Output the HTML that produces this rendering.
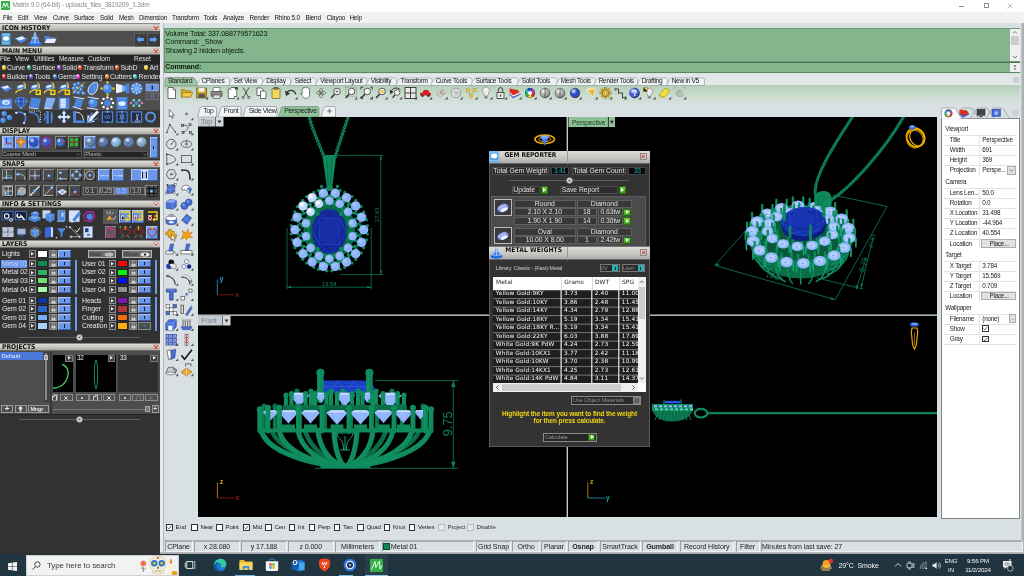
<!DOCTYPE html>
<html lang="en">
<head>
<meta charset="utf-8">
<title>Matrix 9.0 (64-bit) - uploads_files_3819209_1.3dm</title>
<style>
*{box-sizing:border-box;margin:0;padding:0}
html,body{width:1024px;height:576px;overflow:hidden;background:#d9e0e3;font-family:"Liberation Sans",sans-serif;font-size:6.3px;color:#000}
.a{position:absolute}
body>div{will-change:transform}
.t{position:absolute;white-space:nowrap;line-height:1;letter-spacing:-0.18px}
svg{position:absolute;overflow:visible}
svg text{font-family:"Liberation Sans",sans-serif}
#titlebar{left:0;top:0;width:1024px;height:12px;background:#fff}
#menubar{left:0;top:12px;width:1024px;height:11px;background:#f1f1f1}
#menubar .t{top:2.6px;font-size:6.3px;color:#111}
#left{left:0;top:23px;width:160px;height:531px;background:#323232;overflow:hidden}
.hdr{position:absolute;left:0;width:160px;height:8.6px;background:linear-gradient(#dddbd5,#c6c4be 55%,#a9a7a1);border-top:1px solid #8a8a88;border-bottom:1px solid #6a6a68}
.hdr b{position:absolute;left:2px;top:0.5px;font-family:"DejaVu Sans Condensed","DejaVu Sans","Liberation Sans",sans-serif;font-stretch:condensed;font-size:6.7px;font-weight:bold;color:#111;line-height:1;white-space:nowrap}
.hdr i{position:absolute;right:1.5px;top:0.4px;width:6px;height:6.2px;background:#dddbd5;border:0.4px solid #c0beb8;font-style:normal;font-size:0;overflow:hidden}.hdr i::after{content:"";position:absolute;left:0.6px;top:0.6px;width:4.4px;height:4.6px;background:linear-gradient(45deg,transparent 44%,#e2564a 44%,#e2564a 56%,transparent 56%),linear-gradient(-45deg,transparent 44%,#e2564a 44%,#e2564a 56%,transparent 56%)}
.row{position:absolute;left:0;width:160px;background:#4e4e4e}
.lm{position:absolute;white-space:nowrap;line-height:1;color:#e4e4e4;font-size:6.9px;letter-spacing:-0.05px}
.dot{position:absolute;width:4.4px;height:4.4px;border-radius:50%}
.btn{position:absolute;background:#4c4c4c;border:0.7px solid #8a8a8a;border-right-color:#2a2a2a;border-bottom-color:#2a2a2a}
.bb{position:absolute;background:#6d97e8;border:0.7px solid #a9c4f7;border-right-color:#3d5ea8;border-bottom-color:#3d5ea8}
#taskbar{left:0;top:554px;width:1024px;height:22px;background:#20353f}
#main{left:160px;top:23px;width:864px;height:531px;background:#d9e0e3}
</style>
</head>
<body>

<div id="titlebar" class="a">
  <svg style="left:1px;top:1px" width="9" height="9" viewBox="0 0 9 9"><rect width="9" height="9" fill="#3cae4c"/><path d="M1.5 7 L3 2 L4.4 6 L5.8 2 L7.5 7" stroke="#e8ffe8" stroke-width="0.9" fill="none"/></svg>
  <span class="t" style="left:12.5px;top:2.3px;font-size:6.5px;color:#8c8c8c;letter-spacing:-0.17px">Matrix 9.0 (64-bit) - uploads_files_3819209_1.3dm</span>
  <span class="a" style="left:958.5px;top:5.5px;width:5px;height:0.6px;background:#8e8e8e"></span>
  <span class="a" style="left:984px;top:3px;width:4.6px;height:4.6px;border:0.55px solid #8e8e8e"></span>
  <svg style="left:1007px;top:2.5px" width="6" height="6" viewBox="0 0 6 6"><path d="M0.5 0.5 L5.5 5.5 M5.5 0.5 L0.5 5.5" stroke="#858585" stroke-width="0.55"/></svg>
</div>
<div id="menubar" class="a">
  <span class="t" style="left:3px">File</span><span class="t" style="left:18px">Edit</span><span class="t" style="left:34px">View</span><span class="t" style="left:53px">Curve</span><span class="t" style="left:74px">Surface</span><span class="t" style="left:100px">Solid</span><span class="t" style="left:119px">Mesh</span><span class="t" style="left:139px">Dimension</span><span class="t" style="left:172px">Transform</span><span class="t" style="left:203.5px">Tools</span><span class="t" style="left:223px">Analyze</span><span class="t" style="left:249.5px">Render</span><span class="t" style="left:274.5px">Rhino 5.0</span><span class="t" style="left:305.5px">Blend</span><span class="t" style="left:326.5px">Clayoo</span><span class="t" style="left:349.5px">Help</span>
</div>

<div id="left" class="a">
<div class="hdr" style="top:0px"><b>ICON HISTORY</b><i>×</i></div>
<div class="row" style="top:8px;height:16px"></div>
<div class="hdr" style="top:23.4px"><b>MAIN MENU</b><i>×</i></div>
<div class="row" style="top:32px;height:8.5px;background:#242424"></div>
<span class="lm" style="left:0px;top:33.2px;font-size:6.5px">File</span>
<span class="lm" style="left:15px;top:33.2px;font-size:6.5px">View</span>
<span class="lm" style="left:34px;top:33.2px;font-size:6.5px">Utilities</span>
<span class="lm" style="left:59px;top:33.2px;font-size:6.5px">Measure</span>
<span class="lm" style="left:88px;top:33.2px;font-size:6.5px">Custom</span>
<span class="lm" style="left:134px;top:33.2px;font-size:6.5px">Reset</span>
<span class="dot" style="left:1.5px;top:42.2px;background:radial-gradient(circle at 35% 30%,#fff 0,#e8c020 45%,#e8c020 100%)"></span>
<span class="lm" style="left:7.0px;top:41.6px;">Curve</span>
<span class="dot" style="left:26.5px;top:42.2px;background:radial-gradient(circle at 35% 30%,#fff 0,#30b878 45%,#30b878 100%)"></span>
<span class="lm" style="left:32.0px;top:41.6px;">Surface</span>
<span class="dot" style="left:56.5px;top:42.2px;background:radial-gradient(circle at 35% 30%,#fff 0,#9a40e0 45%,#9a40e0 100%)"></span>
<span class="lm" style="left:62.0px;top:41.6px;">Solid</span>
<span class="dot" style="left:77.5px;top:42.2px;background:radial-gradient(circle at 35% 30%,#fff 0,#f05030 45%,#f05030 100%)"></span>
<span class="lm" style="left:83.0px;top:41.6px;">Transform</span>
<span class="dot" style="left:115px;top:42.2px;background:radial-gradient(circle at 35% 30%,#fff 0,#f05030 45%,#f05030 100%)"></span>
<span class="lm" style="left:120.5px;top:41.6px;">SubD</span>
<span class="dot" style="left:144px;top:42.2px;background:radial-gradient(circle at 35% 30%,#fff 0,#e8d020 45%,#e8d020 100%)"></span>
<span class="lm" style="left:149.5px;top:41.6px;">Art</span>
<span class="dot" style="left:1.5px;top:51.2px;background:radial-gradient(circle at 35% 30%,#fff 0,#e02828 45%,#e02828 100%)"></span>
<span class="lm" style="left:7.0px;top:50.6px;">Builder</span>
<span class="dot" style="left:29px;top:51.2px;background:radial-gradient(circle at 35% 30%,#fff 0,#7050e0 45%,#7050e0 100%)"></span>
<span class="lm" style="left:34.5px;top:50.6px;">Tools</span>
<span class="dot" style="left:52.5px;top:51.2px;background:radial-gradient(circle at 35% 30%,#fff 0,#3880e0 45%,#3880e0 100%)"></span>
<span class="lm" style="left:58.0px;top:50.6px;">Gems</span>
<span class="dot" style="left:76px;top:51.2px;background:radial-gradient(circle at 35% 30%,#fff 0,#e030c0 45%,#e030c0 100%)"></span>
<span class="lm" style="left:81.5px;top:50.6px;">Setting</span>
<span class="dot" style="left:104.5px;top:51.2px;background:radial-gradient(circle at 35% 30%,#fff 0,#f07820 45%,#f07820 100%)"></span>
<span class="lm" style="left:110.0px;top:50.6px;">Cutters</span>
<span class="dot" style="left:133px;top:51.2px;background:radial-gradient(circle at 35% 30%,#fff 0,#28c0b0 45%,#28c0b0 100%)"></span>
<span class="lm" style="left:138.5px;top:50.6px;">Render</span>
<div class="row" style="top:58px;height:29px"></div>
<div class="row" style="top:87px;height:16px;background:#363636"></div>
<div class="hdr" style="top:103.5px"><b>DISPLAY</b><i>×</i></div>
<div class="row" style="top:111.5px;height:24.5px;background:#4a4a4a"></div>
<span class="bb" style="left:2px;top:113px;width:12px;height:12.5px"></span>
<span class="bb" style="left:15px;top:113px;width:12px;height:12.5px"></span>
<span class="bb" style="left:27.5px;top:113px;width:12px;height:12.5px"></span>
<span class="btn" style="left:54.5px;top:113px;width:12px;height:12.5px;background:#3c3c3c"></span>
<span class="btn" style="left:68px;top:113px;width:12px;height:12.5px;background:#3c3c3c"></span>
<span class="a" style="left:82px;top:112.5px;width:1px;height:22.5px;background:#2a2a2a"></span>
<span class="bb" style="left:84.3px;top:113px;width:12px;height:12.5px"></span>
<span class="bb" style="left:149.7px;top:113.5px;width:8.3px;height:21.5px"></span><span class="a" style="left:153.2px;top:122.5px;width:1.1px;height:3.3px;background:#16203a"></span>
<span class="a" style="left:1px;top:128px;width:80.5px;height:7px;background:#242424;border:0.5px solid #555"></span>
<span class="lm" style="left:2.2px;top:128.8px;color:#b4b4b4;font-size:5.8px">Coarse Mesh</span>
<svg style="left:76.0px;top:130.3px" width="4" height="3" viewBox="0 0 4 3"><path d="M0.3 0.5 L2 2.3 L3.7 0.5" stroke="#999" stroke-width="0.5" fill="none"/></svg>
<span class="a" style="left:84px;top:128px;width:64px;height:7px;background:#242424;border:0.5px solid #555"></span>
<span class="lm" style="left:85.2px;top:128.8px;color:#b4b4b4;font-size:5.8px">Plastic</span>
<svg style="left:142.5px;top:130.3px" width="4" height="3" viewBox="0 0 4 3"><path d="M0.3 0.5 L2 2.3 L3.7 0.5" stroke="#999" stroke-width="0.5" fill="none"/></svg>
<div class="hdr" style="top:136.5px"><b>SNAPS</b><i>×</i></div>
<div class="row" style="top:144.5px;height:32px;background:#464646"></div>
<span class="btn" style="left:1.5px;top:146.3px;width:12px;height:12px"></span>
<span class="btn" style="left:15px;top:146.3px;width:12px;height:12px"></span>
<span class="btn" style="left:29px;top:146.3px;width:12px;height:12px"></span>
<span class="btn" style="left:43px;top:146.3px;width:12px;height:12px"></span>
<span class="btn" style="left:56.5px;top:146.3px;width:12px;height:12px"></span>
<span class="btn" style="left:70px;top:146.3px;width:12px;height:12px"></span>
<span class="btn" style="left:84px;top:146.3px;width:12px;height:12px"></span>
<span class="bb" style="left:98px;top:146.3px;width:12.3px;height:12px"></span>
<span class="bb" style="left:112px;top:146.3px;width:12.3px;height:12px"></span>
<span class="bb" style="left:130.5px;top:146.3px;width:27px;height:12px"></span>
<span class="a" style="left:141.5px;top:148.3px;width:5.6px;height:7.6px;background:#a8c0f0;border:0.6px solid #c8d8f8;border-left:1.8px solid #1c2438;border-right:1.8px solid #1c2438;outline:0.5px solid #dfe8ff"></span>
<span class="btn" style="left:2px;top:161.6px;width:12.3px;height:12.6px"></span>
<span class="btn" style="left:15px;top:161.6px;width:12.3px;height:12.6px"></span>
<span class="btn" style="left:28.5px;top:161.6px;width:12.3px;height:12.6px"></span>
<span class="btn" style="left:42.5px;top:161.6px;width:12.3px;height:12.6px"></span>
<span class="btn" style="left:56px;top:161.6px;width:12.3px;height:12.6px"></span>
<span class="btn" style="left:69px;top:161.6px;width:12.3px;height:12.6px"></span>
<span class="btn" style="left:145px;top:161.6px;width:13px;height:12.6px"></span>
<span class="a" style="left:83px;top:164.3px;width:14.5px;height:7.5px;background:#3e3e3e;border:0.6px solid #777"></span>
<span class="lm" style="left:85.2px;top:165px;color:#bcbcbc;font-size:6.6px">0.1</span>
<span class="a" style="left:98.5px;top:164.3px;width:15px;height:7.5px;background:#3e3e3e;border:0.6px solid #777"></span>
<span class="lm" style="left:99.7px;top:165px;color:#bcbcbc;font-size:6.6px">0.25</span>
<span class="a" style="left:114.3px;top:164.3px;width:15px;height:7.5px;background:#6088dc;border:0.6px solid #777"></span>
<span class="lm" style="left:116.5px;top:165px;color:#a9c2f4;font-size:6.6px">0.5</span>
<span class="a" style="left:130px;top:164.3px;width:14.5px;height:7.5px;background:#3e3e3e;border:0.6px solid #777"></span>
<span class="lm" style="left:132.2px;top:165px;color:#bcbcbc;font-size:6.6px">1.0</span>
<div class="hdr" style="top:176.8px"><b>INFO &amp; SETTINGS</b><i>×</i></div>
<span class="a" style="left:103px;top:186px;width:15px;height:14.5px;background:#585858"></span>
<span class="bb" style="left:119.3px;top:187px;width:11.8px;height:12.5px"></span>
<span class="bb" style="left:132px;top:187px;width:11.8px;height:12.5px"></span>
<span class="btn" style="left:104.5px;top:202.5px;width:12.5px;height:13px;background:#5a5a5a"></span>
<span class="bb" style="left:146px;top:202.8px;width:12.3px;height:13px"></span>
<div class="hdr" style="top:216.7px"><b>LAYERS</b><i>×</i></div>
<div class="hdr" style="top:319.5px"><b>PROJECTS</b><i>×</i></div>
<svg style="left:0;top:0" width="160" height="531" viewBox="0 0 160 531"><defs><radialGradient id="sg" cx="0.35" cy="0.3" r="0.75"><stop offset="0" stop-color="#fff" stop-opacity="0.85"/><stop offset="0.45" stop-color="#fff" stop-opacity="0"/><stop offset="1" stop-color="#000" stop-opacity="0.45"/></radialGradient></defs>
<g transform="translate(6,65.5) scale(1.2)"><path d="M-5 -1 L1 -3 L5 0 L0 3 Z" fill="#4a86e0"/><path d="M-4 -1 L1 -2.6 L3 -1 L-1 0.5Z" fill="#e8f0ff"/></g><g transform="translate(21,65.5) scale(1.2)"><ellipse cx="0.5" cy="-1" rx="4" ry="2.3" fill="#4a86e0" transform="rotate(-15)"/><ellipse cx="0" cy="-1.8" rx="2.4" ry="1" fill="#e8f0ff" transform="rotate(-15)"/><path d="M-4.5 4 C-4 1,-1 2,1 0.5 M2 -5 C4 -4,4 -1,3 0" stroke="#f0d020" stroke-width="1" fill="none"/></g><g transform="translate(35,65.5) scale(1.2)"><ellipse cx="0.5" cy="-1" rx="4" ry="2.3" fill="#4a86e0" transform="rotate(-15)"/><ellipse cx="0" cy="-1.8" rx="2.4" ry="1" fill="#e8f0ff" transform="rotate(-15)"/><path d="M-4.5 4 C-4 1,-1 2,1 0.5 M2 -5 C4 -4,4 -1,3 0" stroke="#f0d020" stroke-width="1" fill="none"/><rect x="0.5" y="1" width="4.5" height="4.5" fill="#f0d020"/><rect x="1.8" y="2.3" width="1.8" height="1.8" fill="#333"/></g><g transform="translate(49.5,65.5) scale(1.2)"><ellipse cx="0.5" cy="-1" rx="4" ry="2.3" fill="#4a86e0" transform="rotate(-15)"/><ellipse cx="0" cy="-1.8" rx="2.4" ry="1" fill="#e8f0ff" transform="rotate(-15)"/><path d="M-4.5 4 C-4 1,-1 2,1 0.5 M2 -5 C4 -4,4 -1,3 0" stroke="#f0d020" stroke-width="1" fill="none"/><rect x="0.5" y="1" width="4.5" height="4.5" fill="#f0d020"/><rect x="1.8" y="2.3" width="1.8" height="1.8" fill="#333"/></g><g transform="translate(64,65.5) scale(1.2)"><ellipse cx="0.5" cy="-1" rx="4" ry="2.3" fill="#4a86e0" transform="rotate(-15)"/><ellipse cx="0" cy="-1.8" rx="2.4" ry="1" fill="#e8f0ff" transform="rotate(-15)"/><path d="M-4.5 4 C-4 1,-1 2,1 0.5 M2 -5 C4 -4,4 -1,3 0" stroke="#f0d020" stroke-width="1" fill="none"/><rect x="0.5" y="1" width="4.5" height="4.5" fill="#f0d020"/><rect x="1.8" y="2.3" width="1.8" height="1.8" fill="#333"/></g><g transform="translate(78.5,65.5) scale(1.2)"><circle cx="-3" cy="-3" r="1.6" fill="#4a86e0"/><circle cx="-3.4" cy="-3.5" r="0.6" fill="#e8f0ff"/><circle cx="0" cy="-4" r="1.6" fill="#4a86e0"/><circle cx="-0.4" cy="-4.5" r="0.6" fill="#e8f0ff"/><circle cx="3" cy="-2" r="1.6" fill="#4a86e0"/><circle cx="2.6" cy="-2.5" r="0.6" fill="#e8f0ff"/><circle cx="-4" cy="0" r="1.6" fill="#4a86e0"/><circle cx="-4.4" cy="-0.5" r="0.6" fill="#e8f0ff"/><circle cx="-1" cy="-0.5" r="1.6" fill="#4a86e0"/><circle cx="-1.4" cy="-1.0" r="0.6" fill="#e8f0ff"/><circle cx="2" cy="1" r="1.6" fill="#4a86e0"/><circle cx="1.6" cy="0.5" r="0.6" fill="#e8f0ff"/><circle cx="-3" cy="3" r="1.6" fill="#4a86e0"/><circle cx="-3.4" cy="2.5" r="0.6" fill="#e8f0ff"/><circle cx="0" cy="3.5" r="1.6" fill="#4a86e0"/><circle cx="-0.4" cy="3.0" r="0.6" fill="#e8f0ff"/><circle cx="4" cy="4" r="1.6" fill="#4a86e0"/><circle cx="3.6" cy="3.5" r="0.6" fill="#e8f0ff"/><path d="M-5 4 L5 -5" stroke="#f0d020" stroke-width="0.7"/></g><g transform="translate(93,65.5) scale(1.2)"><path d="M3 -5 C6 -2,2 5,-1 5 C-5 5,-5 0,-2 -3 C0 -5,2 -5,3 -5Z" fill="#4a86e0" stroke="#e8f0ff" stroke-width="0.8"/><path d="M0 -2 C2 -2,2 1,0 2" stroke="#7fb0f5" fill="none" stroke-width="0.8"/></g><g transform="translate(107.5,65.5) scale(1.2)"><circle r="4" fill="#4a86e0"/><circle cx="-1" cy="-1" r="2" fill="#7fb0f5"/><circle cx="0" cy="-5" r="1" fill="#f0d020"/><circle cx="5" cy="0" r="1" fill="#f0d020"/><circle cx="0" cy="5" r="1" fill="#f0d020"/><circle cx="-5" cy="0" r="1" fill="#f0d020"/></g><g transform="translate(122,65.5) scale(1.2)"><path d="M-5 -4 L0 -3 L0 3 L-5 4Z" fill="#e8f0ff"/><path d="M0 -3 L3 -2 L3 2 L0 3Z" fill="#7fb0f5"/><rect x="3" y="-4" width="3" height="8" fill="#4a86e0"/></g><g transform="translate(136.5,65.5) scale(1.2)"><circle r="5" fill="#4a86e0"/><circle r="2.6" fill="#7fb0f5"/><circle cx="3.80" cy="0.00" r="0.7" fill="#e8f0ff"/><circle cx="2.69" cy="2.69" r="0.7" fill="#e8f0ff"/><circle cx="0.00" cy="3.80" r="0.7" fill="#e8f0ff"/><circle cx="-2.68" cy="2.69" r="0.7" fill="#e8f0ff"/><circle cx="-3.80" cy="0.01" r="0.7" fill="#e8f0ff"/><circle cx="-2.69" cy="-2.68" r="0.7" fill="#e8f0ff"/><circle cx="-0.01" cy="-3.80" r="0.7" fill="#e8f0ff"/><circle cx="2.68" cy="-2.69" r="0.7" fill="#e8f0ff"/></g><rect x="146" y="61" width="12.5" height="7" fill="#6d97e8" stroke="#a9c4f7" stroke-width="0.5"/><rect x="151.6" y="62.5" width="1.4" height="4" fill="#223"/><rect x="146" y="70" width="12.5" height="6.5" fill="#555" stroke="#888" stroke-width="0.5"/><circle cx="152.2" cy="73.2" r="1.6" fill="none" stroke="#4a86e0" stroke-width="0.7"/><g transform="translate(6,80) scale(1.2)"><path d="M-5 -3 L5 -4 L5 4 L-5 4Z" fill="#4a86e0"/><path d="M-5 3 L5 3 L5 4.6 L-5 4.6Z" fill="#7fb0f5"/><ellipse cx="0" cy="-0.5" rx="3.2" ry="2" fill="#e8f0ff"/><ellipse cx="0.3" cy="-0.3" rx="1.8" ry="1" fill="#7fb0f5"/></g><g transform="translate(21,80) scale(1.2)"><path d="M-5.5 -1.5 L-3 -4.5 L3 -4.5 L5.5 -1.5 L0 5Z" fill="#2a4da8" stroke="#4a86e0" stroke-width="0.8"/><path d="M-5.5 -1.5 L5.5 -1.5 M-2 -4.5 L-2.5 -1.5 L0 5 L2.5 -1.5 L2 -4.5" stroke="#7fb0f5" stroke-width="0.5" fill="none"/></g><g transform="translate(35,80) scale(1.2)"><path d="M-3 -4.5 L5 -3.5 L3 4.5 L-5 3.5Z" fill="#4a86e0"/><path d="M-5 3.5 L3 4.5 L3 5.3 L-5 4.3Z" fill="#e8f0ff"/></g><g transform="translate(49.5,80) scale(1.2)"><path d="M-2.5 -4.5 L5 -4 L2 4.5 L-4.5 4Z" fill="#7fb0f5"/><path d="M-4.5 4 L2 4.5 L2 5.3 L-4.5 4.8Z" fill="#e8f0ff"/></g><g transform="translate(64,80) scale(1.2)"><rect x="-4.5" y="-4.5" width="9" height="9.5" fill="#4a86e0"/><rect x="-3" y="-3.5" width="4.5" height="7.5" fill="#e8f0ff"/><path d="M-3 -1.5 H1.5 M-3 0.5 H1.5 M-3 2.5 H1.5" stroke="#7fb0f5" stroke-width="0.5"/></g><g transform="translate(78.5,80) scale(1.2)"><path d="M-2 -4 L4 -3 L2 4 L-4 4Z" fill="#4a86e0"/><path d="M-4 -5 L5 -3.5 M-5 3 L3 5.5" stroke="#e8f0ff" stroke-width="0.8"/></g><g transform="translate(93,80) scale(1.2)"><circle r="4" fill="#4a86e0"/><circle cx="-1" cy="-1" r="1.8" fill="#7fb0f5"/><path d="M-4.5 -5 L5 -3.5 M-5 4 L4 5.5" stroke="#e8f0ff" stroke-width="0.8"/></g><g transform="translate(107.5,80) scale(1.2)"><circle r="2.8" fill="#4a86e0"/><circle cx="4.60" cy="0.00" r="1.05" fill="#fff"/><circle cx="3.25" cy="3.25" r="1.05" fill="#fff"/><circle cx="0.00" cy="4.60" r="1.05" fill="#fff"/><circle cx="-3.25" cy="3.26" r="1.05" fill="#fff"/><circle cx="-4.60" cy="0.01" r="1.05" fill="#fff"/><circle cx="-3.26" cy="-3.25" r="1.05" fill="#fff"/><circle cx="-0.01" cy="-4.60" r="1.05" fill="#fff"/><circle cx="3.24" cy="-3.26" r="1.05" fill="#fff"/></g><g transform="translate(122,80) scale(1.2)"><rect x="-4.5" y="-5" width="9" height="10.5" fill="#4a86e0"/><ellipse cx="0" cy="0.5" rx="3" ry="2" fill="#e8f0ff"/><path d="M-3 -3.5 H3 M-3 4 H3" stroke="#7fb0f5" stroke-width="0.8" stroke-dasharray="1.2 0.6"/></g><g transform="translate(136.5,80) scale(1.2)"><circle r="1.6" fill="#4a86e0"/><circle cx="-4.5" cy="0" r="1.1" fill="#e07aa8"/><circle cx="4.5" cy="0" r="1.1" fill="#e07aa8"/><circle cx="-2.3" cy="-2.2" r="1.1" fill="#6fd0c8"/><circle cx="2.3" cy="-2.2" r="1.1" fill="#6fd0c8"/><circle cx="-2.3" cy="2.2" r="1.1" fill="#6fd0c8"/><circle cx="2.3" cy="2.2" r="1.1" fill="#6fd0c8"/></g><g transform="translate(6,94) scale(1.2)"><circle cx="-1.5" cy="-2.8" r="2.3" fill="#4a86e0"/><circle cx="-2.1" cy="-3.5" r="0.9" fill="#7fb0f5"/><circle cx="2.8" cy="0.5" r="2.3" fill="#4a86e0"/><circle cx="2.1999999999999997" cy="-0.19999999999999996" r="0.9" fill="#7fb0f5"/><circle cx="-2.5" cy="2.8" r="2.3" fill="#4a86e0"/><circle cx="-3.1" cy="2.0999999999999996" r="0.9" fill="#7fb0f5"/></g><g transform="translate(21,94) scale(1.2)"><path d="M-4 -3.5 C2 -6,6 0,2.5 5" stroke="#4a86e0" stroke-width="1.3" fill="none"/><circle cx="-4" cy="-3.5" r="0.9" fill="#e8f0ff"/><circle cx="2.5" cy="5" r="0.9" fill="#e8f0ff"/><circle cx="3.3" cy="-2.5" r="0.8" fill="#e8f0ff"/></g><g transform="translate(35,94) scale(1.2)"><path d="M-5 -4 C1 -4,3.5 -1,3.5 5" stroke="#4a86e0" stroke-width="1.3" fill="none"/><path d="M-5 -5 H4.5 V5" stroke="#e8f0ff" stroke-width="0.7" stroke-dasharray="1 1" fill="none"/></g><g transform="translate(49.5,94) scale(1.2)"><rect x="-2.6" y="-5" width="2" height="10.5" fill="#4a86e0"/><path d="M1 -5 C4 -3,1.5 -1,3.5 0 C1.5 1,4 3,1 5.5Z" fill="#4a86e0"/><path d="M-4.6 -3 C-3 -1,-3 1,-4.6 3" stroke="#4a86e0" fill="none" stroke-width="1"/></g><g transform="translate(64,94) scale(1.2)"><path d="M0 -5.5 L2 -3 H0.8 V-0.8 H3 V-2 L5.5 0 L3 2 V0.8 H0.8 V3 H2 L0 5.5 L-2 3 H-0.8 V0.8 H-3 V2 L-5.5 0 L-3 -2 V-0.8 H-0.8 V-3 H-2Z" fill="#f2f6ff" stroke="#4a86e0" stroke-width="0.4"/></g><g transform="translate(78.5,94) scale(1.2)"><path d="M-4.5 -5 H-2 V3 H5 V5 H-4.5Z" fill="#4a86e0"/><path d="M-2 -4 C2 -4,4 -1,4 3" stroke="#e8f0ff" stroke-width="0.8" fill="none"/></g><g transform="translate(93,94) scale(1.2)"><path d="M-5 5 L-4.5 -2 L-2.5 0 L3.5 -5.5 L5 -4 L-0.5 2 L1.5 4Z" fill="#e8f0ff"/><path d="M-5 5 L-1 -4 M-5 5 L4 1" stroke="#4a86e0" stroke-width="1"/></g><g transform="translate(107.5,94) scale(1.02)"><rect x="-5" y="-5" width="10" height="10" fill="#1e2a48" stroke="#4a86e0" stroke-width="1.1"/><path d="M-2.5 0 C-2.5 -2,0 -2,0 0 C0 2,2.5 2,2.5 0 C2.5 -2,0 -2,0 0 C0 2,-2.5 2,-2.5 0" stroke="#7fb0f5" stroke-width="0.6" fill="none"/><circle cx="0" cy="-5" r="0.7" fill="#e8f0ff"/><circle cx="0" cy="5" r="0.7" fill="#e8f0ff"/></g><g transform="translate(122,94) scale(1.02)"><rect x="-5" y="-5" width="10" height="10" fill="#1e2a48" stroke="#4a86e0" stroke-width="1.1"/><path d="M0 -6 V6" stroke="#7fb0f5" stroke-width="1"/><path d="M-3 -2 H-1.5 V2 H-3 M3 -2 H1.5 V2 H3" stroke="#7fb0f5" stroke-width="0.6" fill="none"/></g><g transform="translate(136.5,94) scale(1.02)"><rect x="-5" y="-5" width="10" height="10" fill="#1e2a48" stroke="#4a86e0" stroke-width="1.1"/><path d="M0 -3 L1 3 M2 -3 L0 3" stroke="#ccc" stroke-width="0.7"/><circle cx="-0.3" cy="4" r="1" fill="none" stroke="#ccc" stroke-width="0.5"/><circle cx="2.2" cy="4" r="1" fill="none" stroke="#ccc" stroke-width="0.5"/></g><g transform="translate(150.5,94) scale(1.05)"><circle r="4.3" fill="none" stroke="#4a86e0" stroke-width="2"/><circle r="4.3" fill="none" stroke="#7fb0f5" stroke-width="0.5"/></g>
<g transform="translate(6,16) scale(1)"><rect x="-4.5" y="-6" width="9" height="12" fill="#4aa0e0"/><ellipse cx="0" cy="-0.5" rx="3" ry="2.2" fill="#fff"/><path d="M-3.3 -4.3 H3.3 M-3.3 4 H3.3" stroke="#d8ecff" stroke-width="0.9" stroke-dasharray="1.2 0.7"/></g><g transform="translate(21,16.5) scale(1.1)"><path d="M-6 -1 L1 -3.5 L6 0 L0 3.5 Z" fill="#4a86e0"/><path d="M-5 -1 L1 -3 L4 -1 L-1 0.8Z" fill="#e8f0ff"/></g><g transform="translate(35,16) scale(1)"><ellipse cx="0" cy="4.5" rx="7" ry="2.6" fill="#2a6ae0"/><path d="M0 -7 L-4.5 4 H4.5Z" fill="#4a8af0" stroke="#bcd4ff" stroke-width="0.4"/><path d="M0 -6.5 V4.5 M-3.5 -1 H3.5" stroke="#e0ecff" stroke-width="0.7"/></g><g transform="translate(50,16.5) scale(1)"><path d="M-5.5 -3.5 H-1.5 L-0.5 -2.3 H4.5 V3.5 H-5.5Z" fill="#4a86e0"/><path d="M-5.5 3.5 L-3 -0.8 H6.5 L4.5 3.5Z" fill="#e8f0ff"/></g><rect x="134.3" y="10.3" width="12" height="12.5" fill="#3c3c3c" stroke="#6a6a6a" stroke-width="0.7"/><path d="M146.3 10.3 V22.8 H134.3" stroke="#222" stroke-width="0.7" fill="none"/><g transform="translate(140.3,16.5) scale(1)"><path d="M-3.8 0 L-0.5 -3.2 V-1.4 H3.6 V1.4 H-0.5 V3.2Z" fill="#5a9cff"/></g><rect x="147.3" y="10.3" width="12" height="12.5" fill="#3c3c3c" stroke="#6a6a6a" stroke-width="0.7"/><path d="M159.3 10.3 V22.8 H147.3" stroke="#222" stroke-width="0.7" fill="none"/><g transform="translate(153.3,16.5) scale(1)"><path d="M3.8 0 L0.5 -3.2 V-1.4 H-3.6 V1.4 H0.5 V3.2Z" fill="#5a9cff"/></g><g transform="translate(8,119.2) scale(1)"><path d="M-4.5 -4.5 V4.5 H4.5" stroke="#e8eefc" stroke-width="0.5" fill="none"/><path d="M-4.5 -1.5 H4.5 M-4.5 1.5 H4.5 M-1.5 -4.5 V4.5 M1.5 -4.5 V4.5" stroke="#c8d6f4" stroke-width="0.4"/><path d="M-1.5 -4 V1.5" stroke="#2030c0" stroke-width="1"/><path d="M-1.5 1.5 H3.5" stroke="#d02020" stroke-width="1"/></g><g transform="translate(21,119.2) scale(1)"><path d="M-1.5 -5 H1.5 V-2 H4.5 V1 H1.5 V5 H-1.5 V1 H-4.5 V-2 H-1.5Z" fill="#f09020" stroke="#a05010" stroke-width="0.4"/><circle r="1.3" fill="#f8c860"/></g><g transform="translate(33.5,119.2) scale(1)"><circle r="4.8" fill="#1c48c8"/><circle r="4.8" fill="url(#sg)"/></g><g transform="translate(46.3,119.2) scale(1)"><circle r="5" fill="none" stroke="#c020c0" stroke-width="1"/><circle r="4.2" fill="#2a50d0"/><circle r="4.2" fill="url(#sg)"/></g><g transform="translate(60.5,119.2) scale(1)"><circle r="4.3" fill="#2a70d8"/><circle r="4.3" fill="url(#sg)"/><path d="M0 0 V-4.3 M0 0 H4.3" stroke="#d02020" stroke-width="0.7"/></g><g transform="translate(74,119.2) scale(1)"><rect x="-4" y="-4" width="3.4" height="3.4" fill="#20c030"/><rect x="0.6" y="-4" width="3.4" height="3.4" fill="#20c030"/><rect x="-4" y="0.6" width="3.4" height="3.4" fill="#20c030"/><rect x="0.6" y="0.6" width="3.4" height="3.4" fill="#20c030"/><path d="M-4.5 0 H4.5 M0 -4.5 V4.5" stroke="#d03020" stroke-width="0.6"/></g><g transform="translate(90.3,119.2) scale(1)"><circle r="5" fill="#5878a8"/><circle r="5" fill="url(#sg)"/></g><g transform="translate(103.3,119.2) scale(1)"><circle r="5" fill="#5070b0"/><circle r="5" fill="url(#sg)"/></g><g transform="translate(116,119.2) scale(1)"><circle r="5" fill="#78b0e0"/><circle r="5" fill="url(#sg)"/><path d="M-1 -4.5 V4.5 M1.5 -4 V4" stroke="#b8dcf8" stroke-width="0.6" opacity="0.7"/></g><g transform="translate(128.7,119.2) scale(1)"><circle r="5" fill="#6088c0"/><circle r="5" fill="url(#sg)"/><path d="M-4 -1 L0 1 L4 -2 M-2 4 L0 1" stroke="#1c2c58" stroke-width="0.6" fill="none" opacity="0.7"/></g><g transform="translate(141.5,119.2) scale(1)"><circle r="5" fill="#88a8d0"/><circle r="5" fill="url(#sg)"/></g><g transform="translate(7.5,152.3) scale(1)"><path d="M-1 -5 V3 M-5 2.5 H5" stroke="#e8e8e8" stroke-width="0.7" fill="none"/><path d="M-1 0 H3.5 V2.5" stroke="#38b8a8" stroke-width="0.6" fill="none"/><circle cx="-1" cy="2.5" r="1.5" fill="#5aa0f8"/><circle cx="-1.4" cy="2.1" r="0.6" fill="#e0f0ff"/></g><g transform="translate(21,152.3) scale(1)"><path d="M-5 -1 H-1 C3 -1,4 2,4 5" stroke="#e8e8e8" stroke-width="0.7" fill="none"/><circle cx="-3" cy="-1" r="1.5" fill="#5aa0f8"/><circle cx="-3.4" cy="-1.4" r="0.6" fill="#e0f0ff"/></g><g transform="translate(35,152.3) scale(1)"><path d="M0 -5 V5 M-5 0.5 H5" stroke="#e8e8e8" stroke-width="0.7" fill="none"/><circle cx="0" cy="0.5" r="1.5" fill="#5aa0f8"/><circle cx="-0.4" cy="0.09999999999999998" r="0.6" fill="#e0f0ff"/></g><g transform="translate(49,152.3) scale(1)"><circle cx="0" cy="0.5" r="1.5" fill="#5aa0f8"/><circle cx="-0.4" cy="0.09999999999999998" r="0.6" fill="#e0f0ff"/></g><g transform="translate(62.5,152.3) scale(1)"><path d="M-2 3.5 H4.5" stroke="#e8e8e8" stroke-width="0.7" fill="none"/><circle cx="-2" cy="-2.5" r="1.5" fill="#5aa0f8"/><circle cx="-2.4" cy="-2.9" r="0.6" fill="#e0f0ff"/><circle cx="-2" cy="3.5" r="1.5" fill="#5aa0f8"/><circle cx="-2.4" cy="3.1" r="0.6" fill="#e0f0ff"/></g><g transform="translate(76.5,152.3) scale(1)"><circle r="3.8" stroke="#e8e8e8" stroke-width="0.7" fill="none" stroke-dasharray="2 1"/><circle cx="0" cy="-3.8" r="1.5" fill="#5aa0f8"/><circle cx="-0.4" cy="-4.2" r="0.6" fill="#e0f0ff"/><circle cx="3.8" cy="0" r="1.5" fill="#5aa0f8"/><circle cx="3.4" cy="-0.4" r="0.6" fill="#e0f0ff"/><circle cx="0" cy="3.8" r="1.5" fill="#5aa0f8"/><circle cx="-0.4" cy="3.4" r="0.6" fill="#e0f0ff"/><circle cx="-3.8" cy="0" r="1.5" fill="#5aa0f8"/><circle cx="-4.2" cy="-0.4" r="0.6" fill="#e0f0ff"/></g><g transform="translate(90,152.3) scale(1)"><circle r="4.3" stroke="#e8e8e8" stroke-width="0.7" fill="none"/><circle cx="0" cy="0" r="1.5" fill="#5aa0f8"/><circle cx="-0.4" cy="-0.4" r="0.6" fill="#e0f0ff"/></g><g transform="translate(104.3,152.3) scale(1)"><path d="M-4.5 0.5 H4.5" stroke="#e8eaf0" stroke-width="0.8"/><circle cx="0" cy="0.5" r="1.5" fill="#5aa0f8"/><circle cx="-0.4" cy="0.09999999999999998" r="0.6" fill="#e0f0ff"/></g><g transform="translate(118.3,152.3) scale(1)"><path d="M-3.5 0.5 H4.5" stroke="#e8eaf0" stroke-width="0.8"/><circle cx="-3" cy="0.5" r="1.5" fill="#5aa0f8"/><circle cx="-3.4" cy="0.09999999999999998" r="0.6" fill="#e0f0ff"/></g><g transform="translate(8.2,168) scale(1)"><rect x="-4.3" y="-4.3" width="8.6" height="8.6" stroke="#e8e8e8" stroke-width="0.7" fill="none"/><path d="M0 -4.3 V4.3 M-4.3 0 H4.3" stroke="#e8e8e8" stroke-width="0.7" fill="none"/><circle cx="-2.3" cy="2.3" r="1.5" fill="#5aa0f8"/><circle cx="-2.6999999999999997" cy="1.9" r="0.6" fill="#e0f0ff"/></g><g transform="translate(21.2,168) scale(1)"><path d="M-3.5 -2 L-0.5 -4 L4.5 -3 V2.5 L1 4.5 L-3.5 3.5Z" fill="#b8b8b8"/><path d="M-3.5 -2 L1 -1 L4.5 -3 M1 -1 V4.5" stroke="#666" stroke-width="0.5" fill="none"/><circle cx="-2.5" cy="2.5" r="1.5" fill="#5aa0f8"/><circle cx="-2.9" cy="2.1" r="0.6" fill="#e0f0ff"/></g><g transform="translate(34.7,168) scale(1)"><path d="M-4 4 L4 -4" stroke="#f0f0f0" stroke-width="1.1"/><circle cx="0" cy="0" r="1.5" fill="#5aa0f8"/><circle cx="-0.4" cy="-0.4" r="0.6" fill="#e0f0ff"/><circle cx="-4" cy="4" r="0.9" fill="#ddd"/><circle cx="4" cy="-4" r="0.9" fill="#ddd"/></g><g transform="translate(48.7,168) scale(1)"><path d="M-4.5 4.5 L4.5 -4.5 M-4.5 4.5 H4.5" stroke="#e8e8e8" stroke-width="0.7" fill="none"/><path d="M-4.5 -4.5 L-2 -2" stroke="#222" stroke-width="0.8"/><circle cx="3.2" cy="-3.2" r="1.5" fill="#5aa0f8"/><circle cx="2.8000000000000003" cy="-3.6" r="0.6" fill="#e0f0ff"/></g><g transform="translate(62.2,168) scale(1)"><path d="M-5 0.8 L0 -2.3 L5 0.8 L0 4Z" fill="#e4e4e4"/><circle cx="0" cy="0.8" r="1.5" fill="#5aa0f8"/><circle cx="-0.4" cy="0.4" r="0.6" fill="#e0f0ff"/></g><g transform="translate(75.2,168) scale(1)"><path d="M0 1 V-4.5" stroke="#2040d0" stroke-width="0.9"/><path d="M0 1 L-5 4" stroke="#d02020" stroke-width="0.9"/><path d="M0 1 L5 4.5" stroke="#d02020" stroke-width="0.9"/><path d="M-4.5 -1.5 L4.5 3" stroke="#222" stroke-width="0.6"/><circle cx="0" cy="1" r="1.5" fill="#5aa0f8"/><circle cx="-0.4" cy="0.6" r="0.6" fill="#e0f0ff"/></g><g transform="translate(151.5,168) scale(1)"><path d="M-2.3 -5 V5 M2.3 -5 V5 M-5 -2.3 H5 M-5 2.3 H5" stroke="#161616" stroke-width="1.2"/><circle cx="0" cy="0.3" r="1.5" fill="#5aa0f8"/><circle cx="-0.4" cy="-0.10000000000000003" r="0.6" fill="#e0f0ff"/></g><g transform="translate(7.5,193.3) scale(1)"><rect x="-5.5" y="-5" width="11" height="8.5" fill="#16223c" stroke="#4a86e0" stroke-width="0.7"/><circle cx="-0.8" cy="-0.3" r="2.3" fill="none" stroke="#fff" stroke-width="1.1"/><circle cx="3.5" cy="3.5" r="1.5" fill="none" stroke="#fff" stroke-width="0.8"/></g><g transform="translate(21,193.3) scale(1)"><rect x="-5.5" y="-5" width="11" height="8.5" fill="#16223c" stroke="#4a86e0" stroke-width="0.7"/><path d="M-3 -2.5 A2 2 0 1 0 0 -0.5 L3.5 3.5" stroke="#fff" stroke-width="1.4" fill="none"/></g><g transform="translate(34.5,193.3) scale(1)"><path d="M-6 1 L0 -1 L6 1 L0 3.5Z" fill="#7fb0f5"/><path d="M-6 1 V3.5 L0 6 L6 3.5 V1 L0 3.5Z" fill="#4a86e0"/><path d="M-3.5 -3.5 L1 -5 L4.5 -3.5 L0.5 -2Z" fill="#7fb0f5"/><path d="M-3.5 -3.5 V-1 L0.5 0.8 L4.5 -1 V-3.5 L0.5 -2Z" fill="#4a86e0"/></g><g transform="translate(48.5,193.3) scale(1)"><rect x="-6" y="-6" width="8" height="8" fill="#c8d4e8"/><path d="M-3 -2 L1.5 -3.5 L6 -2 V3.5 L1.5 6 L-3 3.5Z" fill="#4a86e0"/><path d="M-3 -2 L1.5 -0.3 L6 -2 M1.5 -0.3 V6" stroke="#7fb0f5" stroke-width="0.6" fill="none"/></g><g transform="translate(61.5,193.3) scale(1)"><rect x="-3.5" y="-5.5" width="7" height="9.5" fill="#4a86e0" stroke="#c8d8f8" stroke-width="0.5"/><path d="M-4.5 5 H3" stroke="#7fb0f5" stroke-width="1.2"/><rect x="0" y="-3.5" width="2" height="4" fill="#c8d8f8"/></g><g transform="translate(75,193.3) scale(1)"><rect x="-6" y="-6" width="10.5" height="11.5" fill="#d8e2f4" stroke="#8aa0d0" stroke-width="0.5"/><path d="M-3 4 L3.5 -4.5 L6 -2.5 L-0.5 5.5Z" fill="#4a86e0"/><path d="M-3 4 L-0.5 5.5 L-4 6.5Z" fill="#fff"/></g><g transform="translate(89,193.3) scale(1)"><path d="M-5.5 -1 L-2 -4.5 L4 -4.5 L5.5 0 L2 5 L-4 4.5Z" fill="none" stroke="#d020b0" stroke-width="1.2"/><path d="M-2.5 -1.5 L1 -3 L3.5 -1.5 V2 L0.5 4 L-2.5 2Z" fill="#4a86e0"/></g><g transform="translate(110.5,193.3) scale(1)"><path d="M-4 4 L-1 -1 L1.5 3Z" fill="#f0a820"/><path d="M-4 -5 L-2 -2 M-0.5 -5.5 V-2.5 M3 -4 L1 -2" stroke="#eee" stroke-width="0.7"/><path d="M1.5 2 L3 3.5 L5.5 0" stroke="#ddd" stroke-width="0.8" fill="none"/></g><g transform="translate(125.2,193.5) scale(1)"><path d="M-4.5 -4.5 H4.5 V-0.5 H2" stroke="#f0d020" stroke-width="1.4" fill="none"/><path d="M4.5 -0.5 V3 H0.5" stroke="#f0d020" stroke-width="1.4" fill="none"/><path d="M2.3 1 L-0.3 3 L2.3 5Z" fill="#f0d020"/><rect x="-4.5" y="-1.5" width="4" height="5.5" fill="#f4f4f4" stroke="#222" stroke-width="0.4"/><rect x="-3.5" y="0" width="2" height="3" fill="#223"/></g><g transform="translate(138,193.5) scale(1)"><path d="M-4.5 -4.5 H4.5 V-0.5 H2" stroke="#f0d020" stroke-width="1.4" fill="none"/><path d="M4.5 -0.5 V3 H0.5" stroke="#f0d020" stroke-width="1.4" fill="none"/><path d="M2.3 1 L-0.3 3 L2.3 5Z" fill="#f0d020"/><rect x="-4.5" y="-1.5" width="4" height="5.5" fill="#f4f4f4" stroke="#222" stroke-width="0.4"/><rect x="-3.5" y="0" width="2" height="3" fill="#d03030"/></g><g transform="translate(152.5,193.5) scale(1)"><path d="M-4.5 -4.5 H4.5 V-0.5 H2" stroke="#f0d020" stroke-width="1.4" fill="none"/><path d="M4.5 -0.5 V3 H0.5" stroke="#f0d020" stroke-width="1.4" fill="none"/><path d="M2.3 1 L-0.3 3 L2.3 5Z" fill="#f0d020"/><rect x="-4.5" y="-1.5" width="4" height="5.5" fill="#f4f4f4" stroke="#222" stroke-width="0.4"/><path d="M-4.3 -0.5 L-0.7 3.5 M-0.7 -0.5 L-4.3 3.5" stroke="#e02020" stroke-width="1"/></g><g transform="translate(8,209.2) scale(1)"><rect x="-5.2" y="-4.8" width="4.6" height="4.2" fill="#b8c8e0" stroke="#e8f0ff" stroke-width="0.4"/><rect x="-5.2" y="0.4" width="4.6" height="4.2" fill="#b8c8e0" stroke="#e8f0ff" stroke-width="0.4"/><rect x="0.6" y="-4.8" width="4.6" height="4.2" fill="#b8c8e0" stroke="#e8f0ff" stroke-width="0.4"/><rect x="0.6" y="0.4" width="4.6" height="4.2" fill="#b8c8e0" stroke="#e8f0ff" stroke-width="0.4"/></g><g transform="translate(21.5,209.2) scale(1)"><rect x="-4.3" y="-3.5" width="8.6" height="6" fill="#a8b8d0" stroke="#4060a0" stroke-width="0.7"/><rect x="-2" y="3" width="4" height="1.2" fill="#4060a0"/></g><g transform="translate(35,209.2) scale(1)"><circle r="5.2" fill="none" stroke="#ccc" stroke-width="0.6" stroke-dasharray="1.5 1"/><path d="M-3.5 -2 L0 -4 L3.5 -2 V2.5 L0 4.5 L-3.5 2.5Z" fill="#4a86e0" stroke="#dce8ff" stroke-width="0.4"/><path d="M-3.5 -2 L0 -0.3 L3.5 -2 M0 -0.3 V4.5" stroke="#dce8ff" stroke-width="0.4" fill="none"/></g><g transform="translate(48.5,209.2) scale(1)"><path d="M-3.5 -4.5 L2.5 -5.5 V4.5 L-3.5 5.5Z" fill="#3a68d8"/><path d="M2.5 -5.5 L4.5 -4.5 V5 L2.5 4.5Z" fill="#c8d8f8"/></g><g transform="translate(61.5,209.2) scale(1)"><path d="M-4.5 -4 H4.5 L1 0.5 V5 L-1 4 V0.5Z" fill="#4a86e0"/><circle cx="-5" cy="5.5" r="0.7" fill="#fff"/><circle cx="5" cy="-5.5" r="0.7" fill="#fff"/></g><g transform="translate(75,209.2) scale(1)"><path d="M-5 -5 L4.5 4.5 M-4 4.5 H4.5" stroke="#ccc" stroke-width="0.7"/><circle cx="-5" cy="-5" r="1" fill="#ddd"/><circle cx="4.5" cy="4.5" r="1.2" fill="#bbb"/><circle cx="-4" cy="4.5" r="1.2" fill="#bbb"/><path d="M0.5 -2 L2 -0.3 L5 -4.5" stroke="#fff" stroke-width="0.9" fill="none"/></g><g transform="translate(88,209.2) scale(1)"><rect x="-4.5" y="-5.5" width="9" height="11" fill="#d4def4" stroke="#8aa0d0" stroke-width="0.5"/><rect x="-3" y="-4" width="3.5" height="4" fill="#22408a"/><rect x="-1" y="2" width="3" height="1.2" fill="#22408a"/></g><g transform="translate(110.7,209.2) scale(1)"><path d="M0 -2.5 C-3.5 -4.5,-5.5 -1,-3.5 1.5 L0 5 L3.5 1.5 C5.5 -1,3.5 -4.5,0 -2.5Z" fill="none" stroke="#e02890" stroke-width="1"/><path d="M0 -6 V-2 M-1.5 -4.5 L0 -6 L1.5 -4.5" stroke="#e02890" stroke-width="0.9" fill="none"/><path d="M-4 5.5 L-2 3 M4 5.5 L2 3" stroke="#e02890" stroke-width="0.9"/></g><g transform="translate(125.3,209.2) scale(1)"><path d="M0 -2.5 C-3.5 -4.5,-5.5 -1,-3.5 1.5 L0 5 L3.5 1.5 C5.5 -1,3.5 -4.5,0 -2.5Z" fill="none" stroke="#d02020" stroke-width="1"/><path d="M0 -6 V-2 M-1.5 -4.5 L0 -6 L1.5 -4.5" stroke="#e8a020" stroke-width="0.9" fill="none"/><path d="M-4 5.5 L-2 3 M4 5.5 L2 3" stroke="#20b8b8" stroke-width="0.9"/><circle cx="-5" cy="-5" r="0.6" fill="#fff"/><circle cx="5" cy="-5" r="0.6" fill="#fff"/></g><g transform="translate(138.5,209.2) scale(1)"><path d="M0 -2.5 C-3.5 -4.5,-5.5 -1,-3.5 1.5 L0 5 L3.5 1.5 C5.5 -1,3.5 -4.5,0 -2.5Z" fill="none" stroke="#d02020" stroke-width="1"/><path d="M0 -6 V-2 M-1.5 -4.5 L0 -6 L1.5 -4.5" stroke="#e8a020" stroke-width="0.9" fill="none"/><path d="M-4 5.5 L-2 3 M4 5.5 L2 3" stroke="#20b8b8" stroke-width="0.9"/></g><g transform="translate(152.2,209.2) scale(1)"><path d="M0 -2.5 C-3.5 -4.5,-5.5 -1,-3.5 1.5 L0 5 L3.5 1.5 C5.5 -1,3.5 -4.5,0 -2.5Z" fill="none" stroke="#d02020" stroke-width="1"/><path d="M0 -6 V-2 M-1.5 -4.5 L0 -6 L1.5 -4.5" stroke="#f0c040" stroke-width="0.9" fill="none"/><path d="M-4 5.5 L-2 3 M4 5.5 L2 3" stroke="#20b8b8" stroke-width="0.9"/></g>
</svg>
<span class="lm" style="left:2.0px;top:228.1px;font-size:6.9px;color:#e6e6e6;letter-spacing:-0.1px">Lights</span><span class="a" style="left:28.8px;top:227.3px;width:7.5px;height:7.4px;background:#3a3a3a;border:0.6px solid #8a8a8a"></span><svg style="left:31.400000000000002px;top:229.3px" width="3" height="3.4" viewBox="0 0 3 3.4"><path d="M0 0 L3 1.7 L0 3.4Z" fill="#eee"/></svg><span class="a" style="left:36.8px;top:227.3px;width:11.3px;height:7.4px;background:#fff;border:0.5px solid #222"></span><span class="a" style="left:48.6px;top:227.3px;width:8.5px;height:7.4px;background:#5a5a5a;border:0.6px solid #8a8a8a"></span><svg style="left:50.5px;top:228.2px" width="5" height="6" viewBox="0 0 5 6"><rect x="0.4" y="2.6" width="4.2" height="3" fill="#c8c8c8"/><path d="M1.2 2.6 V1.5 A1.3 1.3 0 0 1 3.8 1.5" stroke="#c8c8c8" stroke-width="0.7" fill="none"/></svg><span class="a" style="left:57.8px;top:227.3px;width:13.5px;height:7.4px;background:#6d97e8;border:0.6px solid #a9c4f7;border-right-color:#3d5ea8;border-bottom-color:#3d5ea8"></span><span class="a" style="left:64.1px;top:229.2px;width:1.2px;height:3.6px;background:#16203a"></span>
<span class="a" style="left:87.5px;top:227.3px;width:28.5px;height:7.5px;background:#6c6c6c;border:0.6px solid #b4b4b4"></span>
<span class="lm" style="left:89.5px;top:229px;font-size:5.6px;color:#3c3c3c;font-weight:bold">Hide</span>
<svg style="left:104px;top:228.7px" width="10" height="5" viewBox="0 0 10 5"><ellipse cx="5" cy="2.5" rx="4.3" ry="2" fill="#bbb"/></svg>
<span class="a" style="left:121.5px;top:227.3px;width:30.5px;height:7.5px;background:#6c6c6c;border:0.6px solid #b4b4b4"></span>
<span class="lm" style="left:123.5px;top:229px;font-size:5.6px;color:#3c3c3c;font-weight:bold">Show</span>
<svg style="left:140px;top:228.7px" width="10" height="5" viewBox="0 0 10 5"><ellipse cx="5" cy="2.5" rx="4.3" ry="2" fill="#eee"/><circle cx="5" cy="2.5" r="1.3" fill="#333"/></svg>
<span class="a" style="left:0.5px;top:236.5px;width:26.5px;height:8px;background:#6a94e6"></span><span class="lm" style="left:2.0px;top:237.6px;font-size:6.9px;color:#bcd0f8;letter-spacing:-0.1px">Metal 01</span><span class="a" style="left:28.8px;top:236.8px;width:7.5px;height:7.4px;background:#3a3a3a;border:0.6px solid #8a8a8a"></span><svg style="left:31.400000000000002px;top:238.8px" width="3" height="3.4" viewBox="0 0 3 3.4"><path d="M0 0 L3 1.7 L0 3.4Z" fill="#eee"/></svg><span class="a" style="left:36.8px;top:236.8px;width:11.3px;height:7.4px;background:#0c8a50;border:0.5px solid #222"></span><span class="a" style="left:48.6px;top:236.8px;width:8.5px;height:7.4px;background:#5a5a5a;border:0.6px solid #8a8a8a"></span><svg style="left:50.5px;top:237.7px" width="5" height="6" viewBox="0 0 5 6"><rect x="0.4" y="2.6" width="4.2" height="3" fill="#c8c8c8"/><path d="M1.2 2.6 V1.5 A1.3 1.3 0 0 1 3.8 1.5" stroke="#c8c8c8" stroke-width="0.7" fill="none"/></svg><span class="a" style="left:57.8px;top:236.8px;width:13.5px;height:7.4px;background:#6d97e8;border:0.6px solid #a9c4f7;border-right-color:#3d5ea8;border-bottom-color:#3d5ea8"></span><span class="a" style="left:64.1px;top:238.7px;width:1.2px;height:3.6px;background:#16203a"></span>
<span class="lm" style="left:2.0px;top:246.3px;font-size:6.9px;color:#e6e6e6;letter-spacing:-0.1px">Metal 02</span><span class="a" style="left:28.8px;top:245.5px;width:7.5px;height:7.4px;background:#3a3a3a;border:0.6px solid #8a8a8a"></span><svg style="left:31.400000000000002px;top:247.5px" width="3" height="3.4" viewBox="0 0 3 3.4"><path d="M0 0 L3 1.7 L0 3.4Z" fill="#eee"/></svg><span class="a" style="left:36.8px;top:245.5px;width:11.3px;height:7.4px;background:#30b060;border:0.5px solid #222"></span><span class="a" style="left:48.6px;top:245.5px;width:8.5px;height:7.4px;background:#5a5a5a;border:0.6px solid #8a8a8a"></span><svg style="left:50.5px;top:246.4px" width="5" height="6" viewBox="0 0 5 6"><rect x="0.4" y="2.6" width="4.2" height="3" fill="#c8c8c8"/><path d="M1.2 2.6 V1.5 A1.3 1.3 0 0 1 3.8 1.5" stroke="#c8c8c8" stroke-width="0.7" fill="none"/></svg><span class="a" style="left:57.8px;top:245.5px;width:13.5px;height:7.4px;background:#6d97e8;border:0.6px solid #a9c4f7;border-right-color:#3d5ea8;border-bottom-color:#3d5ea8"></span><span class="a" style="left:64.1px;top:247.4px;width:1.2px;height:3.6px;background:#16203a"></span>
<span class="lm" style="left:2.0px;top:254.9px;font-size:6.9px;color:#e6e6e6;letter-spacing:-0.1px">Metal 03</span><span class="a" style="left:28.8px;top:254.1px;width:7.5px;height:7.4px;background:#3a3a3a;border:0.6px solid #8a8a8a"></span><svg style="left:31.400000000000002px;top:256.1px" width="3" height="3.4" viewBox="0 0 3 3.4"><path d="M0 0 L3 1.7 L0 3.4Z" fill="#eee"/></svg><span class="a" style="left:36.8px;top:254.1px;width:11.3px;height:7.4px;background:#70e070;border:0.5px solid #222"></span><span class="a" style="left:48.6px;top:254.1px;width:8.5px;height:7.4px;background:#5a5a5a;border:0.6px solid #8a8a8a"></span><svg style="left:50.5px;top:255.0px" width="5" height="6" viewBox="0 0 5 6"><rect x="0.4" y="2.6" width="4.2" height="3" fill="#c8c8c8"/><path d="M1.2 2.6 V1.5 A1.3 1.3 0 0 1 3.8 1.5" stroke="#c8c8c8" stroke-width="0.7" fill="none"/></svg><span class="a" style="left:57.8px;top:254.1px;width:13.5px;height:7.4px;background:#6d97e8;border:0.6px solid #a9c4f7;border-right-color:#3d5ea8;border-bottom-color:#3d5ea8"></span><span class="a" style="left:64.1px;top:256.0px;width:1.2px;height:3.6px;background:#16203a"></span>
<span class="lm" style="left:2.0px;top:263.5px;font-size:6.9px;color:#e6e6e6;letter-spacing:-0.1px">Metal 04</span><span class="a" style="left:28.8px;top:262.7px;width:7.5px;height:7.4px;background:#3a3a3a;border:0.6px solid #8a8a8a"></span><svg style="left:31.400000000000002px;top:264.7px" width="3" height="3.4" viewBox="0 0 3 3.4"><path d="M0 0 L3 1.7 L0 3.4Z" fill="#eee"/></svg><span class="a" style="left:36.8px;top:262.7px;width:11.3px;height:7.4px;background:#a8f8a8;border:0.5px solid #222"></span><span class="a" style="left:48.6px;top:262.7px;width:8.5px;height:7.4px;background:#5a5a5a;border:0.6px solid #8a8a8a"></span><svg style="left:50.5px;top:263.6px" width="5" height="6" viewBox="0 0 5 6"><rect x="0.4" y="2.6" width="4.2" height="3" fill="#c8c8c8"/><path d="M1.2 2.6 V1.5 A1.3 1.3 0 0 1 3.8 1.5" stroke="#c8c8c8" stroke-width="0.7" fill="none"/></svg><span class="a" style="left:57.8px;top:262.7px;width:13.5px;height:7.4px;background:#6d97e8;border:0.6px solid #a9c4f7;border-right-color:#3d5ea8;border-bottom-color:#3d5ea8"></span><span class="a" style="left:64.1px;top:264.6px;width:1.2px;height:3.6px;background:#16203a"></span>
<span class="lm" style="left:82.0px;top:237.6px;font-size:6.9px;color:#e6e6e6;letter-spacing:-0.1px">User 01</span><span class="a" style="left:108.8px;top:236.8px;width:7.5px;height:7.4px;background:#3a3a3a;border:0.6px solid #8a8a8a"></span><svg style="left:111.39999999999999px;top:238.8px" width="3" height="3.4" viewBox="0 0 3 3.4"><path d="M0 0 L3 1.7 L0 3.4Z" fill="#eee"/></svg><span class="a" style="left:116.8px;top:236.8px;width:11.3px;height:7.4px;background:#f00808;border:0.5px solid #222"></span><span class="a" style="left:128.6px;top:236.8px;width:8.5px;height:7.4px;background:#5a5a5a;border:0.6px solid #8a8a8a"></span><svg style="left:130.5px;top:237.7px" width="5" height="6" viewBox="0 0 5 6"><rect x="0.4" y="2.6" width="4.2" height="3" fill="#c8c8c8"/><path d="M1.2 2.6 V1.5 A1.3 1.3 0 0 1 3.8 1.5" stroke="#c8c8c8" stroke-width="0.7" fill="none"/></svg><span class="a" style="left:137.8px;top:236.8px;width:13.5px;height:7.4px;background:#6d97e8;border:0.6px solid #a9c4f7;border-right-color:#3d5ea8;border-bottom-color:#3d5ea8"></span><span class="a" style="left:144.1px;top:238.7px;width:1.2px;height:3.6px;background:#16203a"></span>
<span class="lm" style="left:82.0px;top:246.3px;font-size:6.9px;color:#e6e6e6;letter-spacing:-0.1px">User 02</span><span class="a" style="left:108.8px;top:245.5px;width:7.5px;height:7.4px;background:#3a3a3a;border:0.6px solid #8a8a8a"></span><svg style="left:111.39999999999999px;top:247.5px" width="3" height="3.4" viewBox="0 0 3 3.4"><path d="M0 0 L3 1.7 L0 3.4Z" fill="#eee"/></svg><span class="a" style="left:116.8px;top:245.5px;width:11.3px;height:7.4px;background:#10f010;border:0.5px solid #222"></span><span class="a" style="left:128.6px;top:245.5px;width:8.5px;height:7.4px;background:#5a5a5a;border:0.6px solid #8a8a8a"></span><svg style="left:130.5px;top:246.4px" width="5" height="6" viewBox="0 0 5 6"><rect x="0.4" y="2.6" width="4.2" height="3" fill="#c8c8c8"/><path d="M1.2 2.6 V1.5 A1.3 1.3 0 0 1 3.8 1.5" stroke="#c8c8c8" stroke-width="0.7" fill="none"/></svg><span class="a" style="left:137.8px;top:245.5px;width:13.5px;height:7.4px;background:#6d97e8;border:0.6px solid #a9c4f7;border-right-color:#3d5ea8;border-bottom-color:#3d5ea8"></span><span class="a" style="left:144.1px;top:247.4px;width:1.2px;height:3.6px;background:#16203a"></span>
<span class="lm" style="left:82.0px;top:254.9px;font-size:6.9px;color:#e6e6e6;letter-spacing:-0.1px">User 03</span><span class="a" style="left:108.8px;top:254.1px;width:7.5px;height:7.4px;background:#3a3a3a;border:0.6px solid #8a8a8a"></span><svg style="left:111.39999999999999px;top:256.1px" width="3" height="3.4" viewBox="0 0 3 3.4"><path d="M0 0 L3 1.7 L0 3.4Z" fill="#eee"/></svg><span class="a" style="left:116.8px;top:254.1px;width:11.3px;height:7.4px;background:#0810f0;border:0.5px solid #222"></span><span class="a" style="left:128.6px;top:254.1px;width:8.5px;height:7.4px;background:#5a5a5a;border:0.6px solid #8a8a8a"></span><svg style="left:130.5px;top:255.0px" width="5" height="6" viewBox="0 0 5 6"><rect x="0.4" y="2.6" width="4.2" height="3" fill="#c8c8c8"/><path d="M1.2 2.6 V1.5 A1.3 1.3 0 0 1 3.8 1.5" stroke="#c8c8c8" stroke-width="0.7" fill="none"/></svg><span class="a" style="left:137.8px;top:254.1px;width:13.5px;height:7.4px;background:#6d97e8;border:0.6px solid #a9c4f7;border-right-color:#3d5ea8;border-bottom-color:#3d5ea8"></span><span class="a" style="left:144.1px;top:256.0px;width:1.2px;height:3.6px;background:#16203a"></span>
<span class="lm" style="left:82.0px;top:263.5px;font-size:6.9px;color:#e6e6e6;letter-spacing:-0.1px">User 04</span><span class="a" style="left:108.8px;top:262.7px;width:7.5px;height:7.4px;background:#3a3a3a;border:0.6px solid #8a8a8a"></span><svg style="left:111.39999999999999px;top:264.7px" width="3" height="3.4" viewBox="0 0 3 3.4"><path d="M0 0 L3 1.7 L0 3.4Z" fill="#eee"/></svg><span class="a" style="left:116.8px;top:262.7px;width:11.3px;height:7.4px;background:#909090;border:0.5px solid #222"></span><span class="a" style="left:128.6px;top:262.7px;width:8.5px;height:7.4px;background:#5a5a5a;border:0.6px solid #8a8a8a"></span><svg style="left:130.5px;top:263.6px" width="5" height="6" viewBox="0 0 5 6"><rect x="0.4" y="2.6" width="4.2" height="3" fill="#c8c8c8"/><path d="M1.2 2.6 V1.5 A1.3 1.3 0 0 1 3.8 1.5" stroke="#c8c8c8" stroke-width="0.7" fill="none"/></svg><span class="a" style="left:137.8px;top:262.7px;width:13.5px;height:7.4px;background:#6d97e8;border:0.6px solid #a9c4f7;border-right-color:#3d5ea8;border-bottom-color:#3d5ea8"></span><span class="a" style="left:144.1px;top:264.6px;width:1.2px;height:3.6px;background:#16203a"></span>
<span class="lm" style="left:2.0px;top:274.6px;font-size:6.9px;color:#e6e6e6;letter-spacing:-0.1px">Gem 01</span><span class="a" style="left:28.8px;top:273.8px;width:7.5px;height:7.4px;background:#3a3a3a;border:0.6px solid #8a8a8a"></span><svg style="left:31.400000000000002px;top:275.8px" width="3" height="3.4" viewBox="0 0 3 3.4"><path d="M0 0 L3 1.7 L0 3.4Z" fill="#eee"/></svg><span class="a" style="left:36.8px;top:273.8px;width:11.3px;height:7.4px;background:#0838a0;border:0.5px solid #222"></span><span class="a" style="left:48.6px;top:273.8px;width:8.5px;height:7.4px;background:#5a5a5a;border:0.6px solid #8a8a8a"></span><svg style="left:50.5px;top:274.7px" width="5" height="6" viewBox="0 0 5 6"><rect x="0.4" y="2.6" width="4.2" height="3" fill="#c8c8c8"/><path d="M1.2 2.6 V1.5 A1.3 1.3 0 0 1 3.8 1.5" stroke="#c8c8c8" stroke-width="0.7" fill="none"/></svg><span class="a" style="left:57.8px;top:273.8px;width:13.5px;height:7.4px;background:#6d97e8;border:0.6px solid #a9c4f7;border-right-color:#3d5ea8;border-bottom-color:#3d5ea8"></span><span class="a" style="left:64.1px;top:275.7px;width:1.2px;height:3.6px;background:#16203a"></span>
<span class="lm" style="left:2.0px;top:283.1px;font-size:6.9px;color:#e6e6e6;letter-spacing:-0.1px">Gem 02</span><span class="a" style="left:28.8px;top:282.3px;width:7.5px;height:7.4px;background:#3a3a3a;border:0.6px solid #8a8a8a"></span><svg style="left:31.400000000000002px;top:284.3px" width="3" height="3.4" viewBox="0 0 3 3.4"><path d="M0 0 L3 1.7 L0 3.4Z" fill="#eee"/></svg><span class="a" style="left:36.8px;top:282.3px;width:11.3px;height:7.4px;background:#2868c8;border:0.5px solid #222"></span><span class="a" style="left:48.6px;top:282.3px;width:8.5px;height:7.4px;background:#5a5a5a;border:0.6px solid #8a8a8a"></span><svg style="left:50.5px;top:283.2px" width="5" height="6" viewBox="0 0 5 6"><rect x="0.4" y="2.6" width="4.2" height="3" fill="#c8c8c8"/><path d="M1.2 2.6 V1.5 A1.3 1.3 0 0 1 3.8 1.5" stroke="#c8c8c8" stroke-width="0.7" fill="none"/></svg><span class="a" style="left:57.8px;top:282.3px;width:13.5px;height:7.4px;background:#6d97e8;border:0.6px solid #a9c4f7;border-right-color:#3d5ea8;border-bottom-color:#3d5ea8"></span><span class="a" style="left:64.1px;top:284.2px;width:1.2px;height:3.6px;background:#16203a"></span>
<span class="lm" style="left:2.0px;top:291.6px;font-size:6.9px;color:#e6e6e6;letter-spacing:-0.1px">Gem 03</span><span class="a" style="left:28.8px;top:290.8px;width:7.5px;height:7.4px;background:#3a3a3a;border:0.6px solid #8a8a8a"></span><svg style="left:31.400000000000002px;top:292.8px" width="3" height="3.4" viewBox="0 0 3 3.4"><path d="M0 0 L3 1.7 L0 3.4Z" fill="#eee"/></svg><span class="a" style="left:36.8px;top:290.8px;width:11.3px;height:7.4px;background:#78b0f8;border:0.5px solid #222"></span><span class="a" style="left:48.6px;top:290.8px;width:8.5px;height:7.4px;background:#5a5a5a;border:0.6px solid #8a8a8a"></span><svg style="left:50.5px;top:291.7px" width="5" height="6" viewBox="0 0 5 6"><rect x="0.4" y="2.6" width="4.2" height="3" fill="#c8c8c8"/><path d="M1.2 2.6 V1.5 A1.3 1.3 0 0 1 3.8 1.5" stroke="#c8c8c8" stroke-width="0.7" fill="none"/></svg><span class="a" style="left:57.8px;top:290.8px;width:13.5px;height:7.4px;background:#6d97e8;border:0.6px solid #a9c4f7;border-right-color:#3d5ea8;border-bottom-color:#3d5ea8"></span><span class="a" style="left:64.1px;top:292.7px;width:1.2px;height:3.6px;background:#16203a"></span>
<span class="lm" style="left:2.0px;top:300.1px;font-size:6.9px;color:#e6e6e6;letter-spacing:-0.1px">Gem 04</span><span class="a" style="left:28.8px;top:299.3px;width:7.5px;height:7.4px;background:#3a3a3a;border:0.6px solid #8a8a8a"></span><svg style="left:31.400000000000002px;top:301.3px" width="3" height="3.4" viewBox="0 0 3 3.4"><path d="M0 0 L3 1.7 L0 3.4Z" fill="#eee"/></svg><span class="a" style="left:36.8px;top:299.3px;width:11.3px;height:7.4px;background:#a8d0ff;border:0.5px solid #222"></span><span class="a" style="left:48.6px;top:299.3px;width:8.5px;height:7.4px;background:#5a5a5a;border:0.6px solid #8a8a8a"></span><svg style="left:50.5px;top:300.2px" width="5" height="6" viewBox="0 0 5 6"><rect x="0.4" y="2.6" width="4.2" height="3" fill="#c8c8c8"/><path d="M1.2 2.6 V1.5 A1.3 1.3 0 0 1 3.8 1.5" stroke="#c8c8c8" stroke-width="0.7" fill="none"/></svg><span class="a" style="left:57.8px;top:299.3px;width:13.5px;height:7.4px;background:#6d97e8;border:0.6px solid #a9c4f7;border-right-color:#3d5ea8;border-bottom-color:#3d5ea8"></span><span class="a" style="left:64.1px;top:301.2px;width:1.2px;height:3.6px;background:#16203a"></span>
<span class="lm" style="left:82.0px;top:274.6px;font-size:6.9px;color:#e6e6e6;letter-spacing:-0.1px">Heads</span><span class="a" style="left:108.8px;top:273.8px;width:7.5px;height:7.4px;background:#3a3a3a;border:0.6px solid #8a8a8a"></span><svg style="left:111.39999999999999px;top:275.8px" width="3" height="3.4" viewBox="0 0 3 3.4"><path d="M0 0 L3 1.7 L0 3.4Z" fill="#eee"/></svg><span class="a" style="left:116.8px;top:273.8px;width:11.3px;height:7.4px;background:#8018b0;border:0.5px solid #222"></span><span class="a" style="left:128.6px;top:273.8px;width:8.5px;height:7.4px;background:#5a5a5a;border:0.6px solid #8a8a8a"></span><svg style="left:130.5px;top:274.7px" width="5" height="6" viewBox="0 0 5 6"><rect x="0.4" y="2.6" width="4.2" height="3" fill="#c8c8c8"/><path d="M1.2 2.6 V1.5 A1.3 1.3 0 0 1 3.8 1.5" stroke="#c8c8c8" stroke-width="0.7" fill="none"/></svg><span class="a" style="left:137.8px;top:273.8px;width:13.5px;height:7.4px;background:#6d97e8;border:0.6px solid #a9c4f7;border-right-color:#3d5ea8;border-bottom-color:#3d5ea8"></span><span class="a" style="left:144.1px;top:275.7px;width:1.2px;height:3.6px;background:#16203a"></span>
<span class="lm" style="left:82.0px;top:283.1px;font-size:6.9px;color:#e6e6e6;letter-spacing:-0.1px">Finger</span><span class="a" style="left:108.8px;top:282.3px;width:7.5px;height:7.4px;background:#3a3a3a;border:0.6px solid #8a8a8a"></span><svg style="left:111.39999999999999px;top:284.3px" width="3" height="3.4" viewBox="0 0 3 3.4"><path d="M0 0 L3 1.7 L0 3.4Z" fill="#eee"/></svg><span class="a" style="left:116.8px;top:282.3px;width:11.3px;height:7.4px;background:#b03838;border:0.5px solid #222"></span><span class="a" style="left:128.6px;top:282.3px;width:8.5px;height:7.4px;background:#5a5a5a;border:0.6px solid #8a8a8a"></span><svg style="left:130.5px;top:283.2px" width="5" height="6" viewBox="0 0 5 6"><rect x="0.4" y="2.6" width="4.2" height="3" fill="#c8c8c8"/><path d="M1.2 2.6 V1.5 A1.3 1.3 0 0 1 3.8 1.5" stroke="#c8c8c8" stroke-width="0.7" fill="none"/></svg><span class="a" style="left:137.8px;top:282.3px;width:13.5px;height:7.4px;background:#6d97e8;border:0.6px solid #a9c4f7;border-right-color:#3d5ea8;border-bottom-color:#3d5ea8"></span><span class="a" style="left:144.1px;top:284.2px;width:1.2px;height:3.6px;background:#16203a"></span>
<span class="lm" style="left:82.0px;top:291.6px;font-size:6.9px;color:#e6e6e6;letter-spacing:-0.1px">Cutting</span><span class="a" style="left:108.8px;top:290.8px;width:7.5px;height:7.4px;background:#3a3a3a;border:0.6px solid #8a8a8a"></span><svg style="left:111.39999999999999px;top:292.8px" width="3" height="3.4" viewBox="0 0 3 3.4"><path d="M0 0 L3 1.7 L0 3.4Z" fill="#eee"/></svg><span class="a" style="left:116.8px;top:290.8px;width:11.3px;height:7.4px;background:#f07010;border:0.5px solid #222"></span><span class="a" style="left:128.6px;top:290.8px;width:8.5px;height:7.4px;background:#5a5a5a;border:0.6px solid #8a8a8a"></span><svg style="left:130.5px;top:291.7px" width="5" height="6" viewBox="0 0 5 6"><rect x="0.4" y="2.6" width="4.2" height="3" fill="#c8c8c8"/><path d="M1.2 2.6 V1.5 A1.3 1.3 0 0 1 3.8 1.5" stroke="#c8c8c8" stroke-width="0.7" fill="none"/></svg><span class="a" style="left:137.8px;top:290.8px;width:13.5px;height:7.4px;background:#6d97e8;border:0.6px solid #a9c4f7;border-right-color:#3d5ea8;border-bottom-color:#3d5ea8"></span><span class="a" style="left:144.1px;top:292.7px;width:1.2px;height:3.6px;background:#16203a"></span>
<span class="lm" style="left:82.0px;top:300.1px;font-size:6.9px;color:#e6e6e6;letter-spacing:-0.1px">Creation</span><span class="a" style="left:108.8px;top:299.3px;width:7.5px;height:7.4px;background:#3a3a3a;border:0.6px solid #8a8a8a"></span><svg style="left:111.39999999999999px;top:301.3px" width="3" height="3.4" viewBox="0 0 3 3.4"><path d="M0 0 L3 1.7 L0 3.4Z" fill="#eee"/></svg><span class="a" style="left:116.8px;top:299.3px;width:11.3px;height:7.4px;background:#f8b010;border:0.5px solid #222"></span><span class="a" style="left:128.6px;top:299.3px;width:8.5px;height:7.4px;background:#5a5a5a;border:0.6px solid #8a8a8a"></span><svg style="left:130.5px;top:300.2px" width="5" height="6" viewBox="0 0 5 6"><rect x="0.4" y="2.6" width="4.2" height="3" fill="#c8c8c8"/><path d="M1.2 2.6 V1.5 A1.3 1.3 0 0 1 3.8 1.5" stroke="#c8c8c8" stroke-width="0.7" fill="none"/></svg><span class="a" style="left:137.8px;top:299.3px;width:13.5px;height:7.4px;background:#4a4a4a;border:0.6px solid #8a8a8a"></span><svg style="left:143.0px;top:301.4px" width="3.4" height="3.4" viewBox="-1.7 -1.7 3.4 3.4"><circle r="1.2" fill="none" stroke="#4a80e0" stroke-width="0.6"/></svg>
<span class="a" style="left:74.5px;top:236.5px;width:2px;height:34px;background:#6d97e8"></span>
<span class="a" style="left:74.5px;top:273.5px;width:2px;height:34px;background:#6d97e8"></span>
<span class="a" style="left:155px;top:236.5px;width:2px;height:34px;background:#6d97e8"></span>
<span class="a" style="left:155px;top:273.5px;width:2px;height:34px;background:#6d97e8"></span>
<span class="a" style="left:19px;top:313.7px;width:121px;height:0.7px;background:#5e5e5e"></span>
<svg style="left:76.3px;top:310.5px" width="7" height="7" viewBox="-3.5 -3.5 7 7"><circle r="3" fill="#d8d8d8" stroke="#666" stroke-width="0.5"/><path d="M-1.5 -0.8 L0 1 L1.5 -0.8Z" fill="#444"/></svg>
<span class="a" style="left:0px;top:328.3px;width:160px;height:62.7px;background:#4d4d4d"></span>
<span class="a" style="left:0px;top:329.3px;width:43px;height:7.5px;background:#4a78d8"></span>
<span class="lm" style="left:1.8px;top:330.5px;font-size:5.6px;color:#c8d8f8;font-weight:bold">Default</span>
<span class="a" style="left:43.5px;top:329px;width:5px;height:50px;background:#3c3c3c"></span>
<span class="a" style="left:45.3px;top:330px;width:1.3px;height:47px;background:#8a8a8a"></span>
<span class="a" style="left:43.8px;top:332px;width:4.4px;height:4.5px;background:#9a9a9a;border:0.4px solid #ccc"></span>
<span class="a" style="left:50px;top:328.3px;width:2px;height:62.7px;background:#363636"></span>
<span class="a" style="left:52.5px;top:331.5px;width:20.5px;height:37.5px;background:#000"></span>
<span class="a" style="left:75.5px;top:331.5px;width:40px;height:37.5px;background:#000"></span>
<span class="a" style="left:118px;top:331.5px;width:40px;height:37.5px;background:#2e2e2e"></span>
<svg style="left:52.5px;top:331.5px" width="21" height="38" viewBox="0 0 21 38"><path d="M0 33 C16 33,20 12,9 9.5" stroke="#40d060" stroke-width="1.3" fill="none"/></svg>
<svg style="left:75.5px;top:331.5px" width="40" height="38" viewBox="0 0 40 38"><ellipse cx="20" cy="19.5" rx="1.6" ry="14.5" fill="none" stroke="#20a880" stroke-width="0.8"/></svg>
<span class="lm" style="left:77px;top:332.2px;font-size:6.3px;color:#f0f0f0;letter-spacing:-0.3px">32</span>
<span class="lm" style="left:120px;top:332.2px;font-size:6.3px;color:#f0f0f0;letter-spacing:-0.3px">33</span>
<span class="a" style="left:65px;top:331.5px;width:7.7px;height:7px;background:#3e3e3e;border:0.5px solid #777"></span>
<svg style="left:67.7px;top:333.3px" width="3" height="3.4" viewBox="0 0 3 3.4"><path d="M0 0 L3 1.7 L0 3.4Z" fill="#f0f0f0"/></svg>
<span class="a" style="left:107.5px;top:331.5px;width:7.7px;height:7px;background:#3e3e3e;border:0.5px solid #777"></span>
<svg style="left:110.2px;top:333.3px" width="3" height="3.4" viewBox="0 0 3 3.4"><path d="M0 0 L3 1.7 L0 3.4Z" fill="#f0f0f0"/></svg>
<span class="a" style="left:150.3px;top:331.5px;width:7.7px;height:7px;background:#3e3e3e;border:0.5px solid #777"></span>
<svg style="left:153.0px;top:333.3px" width="3" height="3.4" viewBox="0 0 3 3.4"><path d="M0 0 L3 1.7 L0 3.4Z" fill="#f0f0f0"/></svg>
<span class="a" style="left:52px;top:371px;width:5.5px;height:7.3px;background:#505050;border:0.6px solid #8c8c8c"></span><svg style="left:52.25px;top:372.3px" width="5" height="5" viewBox="0 0 5 5"><path d="M0.5 5 V1.5 H2.5 V0.3 H4.5 V5" stroke="#f0f0f0" stroke-width="0.8" fill="none"/></svg>
<span class="a" style="left:60px;top:371px;width:12.5px;height:7.3px;background:#505050;border:0.6px solid #8c8c8c"></span><svg style="left:64.25px;top:372.7px" width="4" height="4" viewBox="0 0 4 4"><path d="M0.3 0.3 L3.7 3.7 M3.7 0.3 L0.3 3.7" stroke="#f0f0f0" stroke-width="0.9"/></svg>
<span class="a" style="left:76px;top:371px;width:12.5px;height:7.3px;background:#505050;border:0.6px solid #8c8c8c"></span><span class="a" style="left:81.25px;top:373.7px;width:2px;height:2px;background:#f0f0f0;border-radius:50%"></span>
<span class="a" style="left:89.3px;top:371px;width:12.5px;height:7.3px;background:#505050;border:0.6px solid #8c8c8c"></span><svg style="left:93.05px;top:372.3px" width="5" height="5" viewBox="0 0 5 5"><path d="M0.5 5 V1.5 H2.5 V0.3 H4.5 V5" stroke="#f0f0f0" stroke-width="0.8" fill="none"/></svg>
<span class="a" style="left:102.7px;top:371px;width:12.5px;height:7.3px;background:#505050;border:0.6px solid #8c8c8c"></span><svg style="left:106.95px;top:372.7px" width="4" height="4" viewBox="0 0 4 4"><path d="M0.3 0.3 L3.7 3.7 M3.7 0.3 L0.3 3.7" stroke="#f0f0f0" stroke-width="0.9"/></svg>
<span class="a" style="left:118.5px;top:371px;width:12.5px;height:7.3px;background:#505050;border:0.6px solid #8c8c8c"></span><span class="a" style="left:123.75px;top:373.7px;width:2px;height:2px;background:#f0f0f0;border-radius:50%"></span>
<span class="a" style="left:131.8px;top:371px;width:12.5px;height:7.3px;background:#505050;border:0.6px solid #8c8c8c"></span><svg style="left:135.55px;top:372.3px" width="5" height="5" viewBox="0 0 5 5"><path d="M0.5 5 V1.5 H2.5 V0.3 H4.5 V5" stroke="#777" stroke-width="0.8" fill="none"/></svg>
<span class="a" style="left:145.2px;top:371px;width:12.5px;height:7.3px;background:#505050;border:0.6px solid #8c8c8c"></span><svg style="left:149.45px;top:372.7px" width="4" height="4" viewBox="0 0 4 4"><path d="M0.3 0.3 L3.7 3.7 M3.7 0.3 L0.3 3.7" stroke="#777" stroke-width="0.9"/></svg>
<span class="a" style="left:1px;top:382px;width:12px;height:7.6px;background:#505050;border:0.6px solid #9a9a9a"></span>
<span class="a" style="left:14.5px;top:382px;width:12px;height:7.6px;background:#505050;border:0.6px solid #9a9a9a"></span>
<span class="a" style="left:28px;top:382px;width:21px;height:7.6px;background:#505050;border:0.6px solid #9a9a9a"></span>
<span class="lm" style="left:4.7px;top:382.3px;font-size:8px;color:#f0f0f0;font-weight:bold">+</span>
<svg style="left:18px;top:383.2px" width="5" height="5.5" viewBox="0 0 5 5.5"><path d="M2.5 0 L5 2.8 H3.3 V5.5 H1.7 V2.8 H0Z" fill="#f0f0f0"/></svg>
<span class="lm" style="left:30.5px;top:384px;font-size:5.3px;color:#f0f0f0;font-weight:bold">Mngr</span>
<span class="a" style="left:53px;top:385.7px;width:92px;height:1px;background:#7a7a7a"></span>
<span class="a" style="left:144.5px;top:382.7px;width:5px;height:6.3px;background:#7a7a7a;border:0.5px solid #aaa"></span>
<span class="a" style="left:151.5px;top:382px;width:7px;height:7.6px;background:#505050;border:0.6px solid #9a9a9a"></span>
<span class="lm" style="left:153.3px;top:382.6px;font-size:6.5px;color:#ddd;font-weight:bold">+</span>
<span class="a" style="left:0px;top:391px;width:160px;height:1px;background:#222"></span>
<span class="a" style="left:19px;top:395.8px;width:121px;height:0.7px;background:#5e5e5e"></span>
<svg style="left:76.3px;top:392.5px" width="7" height="7" viewBox="-3.5 -3.5 7 7"><circle r="3" fill="#d8d8d8" stroke="#666" stroke-width="0.5"/><path d="M-1.5 -0.8 L0 1 L1.5 -0.8Z" fill="#444"/></svg>
</div>
<div id="main" class="a">
<span class="a" style="left:0px;top:0px;width:3.5px;height:531px;background:#e6eaec;border-right:0.7px solid #b4babd"></span>
<span class="a" style="left:4px;top:5px;width:856px;height:33.5px;background:#84b68d;border:0.6px solid #6d9873"></span>
<span class="t" style="left:5.3px;top:6.8px;font-size:7.3px;letter-spacing:-0.22px;color:#0c1a0e">Volume Total: 337.088779571623</span>
<span class="t" style="left:5.3px;top:15.25px;font-size:7.3px;letter-spacing:-0.22px;color:#0c1a0e">Command: _Show</span>
<span class="t" style="left:5.3px;top:23.7px;font-size:7.3px;letter-spacing:-0.22px;color:#0c1a0e">Showing 2 hidden objects.</span>
<span class="a" style="left:850px;top:5.5px;width:9.5px;height:32.5px;background:#eef0f0"></span>
<span class="a" style="left:851px;top:13px;width:7.5px;height:9px;background:#c9cbcb"></span>
<svg style="left:850.8px;top:5.7px" width="8" height="32" viewBox="0 0 8 32"><path d="M2 4.5 L4 2.5 L6 4.5 M2 27 L4 29 L6 27" stroke="#444" stroke-width="0.7" fill="none"/></svg>
<span class="a" style="left:4px;top:39px;width:856px;height:10.5px;background:#84b68d;border:0.6px solid #5c8763;border-top:1px solid #4c7553"></span>
<span class="t" style="left:5.3px;top:40.6px;font-size:7.1px;font-weight:bold;letter-spacing:-0.15px;color:#0c1a0e">Command:</span>
<span class="a" style="left:850px;top:39.8px;width:9.5px;height:9px;background:#eef0f0"></span>
<svg style="left:850.8px;top:39.8px" width="8" height="9" viewBox="0 0 8 9"><path d="M2.5 3.4 L4 2 L5.5 3.4Z M2.5 5.4 L4 6.8 L5.5 5.4Z" fill="#333"/></svg>
<span class="a" style="left:4px;top:50.5px;width:856px;height:12px;background:#e2e7e9"></span>
<span class="a" style="left:4px;top:62px;width:856px;height:21px;background:linear-gradient(#b3cfb7,#c9dccc 45%,#d9e0e3)"></span>
<svg style="left:4px;top:53.5px" width="545" height="9" viewBox="164 76.5 545 9"><path d="M165 85.5 V79 Q165 77 167 77 H192.5 Q194.5 77 195.5 79 L198.5 85.5Z" fill="#9cc7a2" stroke="#5f6b63" stroke-width="0.5"/><path d="M196.5 85 L200.2 78.6 Q200.9 77.4 202.3 77.4 H227.5 Q229.5 77.4 229.5 79.2 V85Z" fill="#eef2f3" stroke="#7d878a" stroke-width="0.5"/><path d="M228.5 85 L232.2 78.6 Q232.9 77.4 234.3 77.4 H260.5 Q262.5 77.4 262.5 79.2 V85Z" fill="#eef2f3" stroke="#7d878a" stroke-width="0.5"/><path d="M261.0 85 L264.7 78.6 Q265.4 77.4 266.8 77.4 H288.5 Q290.5 77.4 290.5 79.2 V85Z" fill="#eef2f3" stroke="#7d878a" stroke-width="0.5"/><path d="M289.5 85 L293.2 78.6 Q293.9 77.4 295.3 77.4 H314.0 Q316.0 77.4 316.0 79.2 V85Z" fill="#eef2f3" stroke="#7d878a" stroke-width="0.5"/><path d="M315.0 85 L318.7 78.6 Q319.4 77.4 320.8 77.4 H365.0 Q367.0 77.4 367.0 79.2 V85Z" fill="#eef2f3" stroke="#7d878a" stroke-width="0.5"/><path d="M365.5 85 L369.2 78.6 Q369.9 77.4 371.3 77.4 H394.5 Q396.5 77.4 396.5 79.2 V85Z" fill="#eef2f3" stroke="#7d878a" stroke-width="0.5"/><path d="M395.5 85 L399.2 78.6 Q399.9 77.4 401.3 77.4 H430.0 Q432.0 77.4 432.0 79.2 V85Z" fill="#eef2f3" stroke="#7d878a" stroke-width="0.5"/><path d="M430.5 85 L434.2 78.6 Q434.9 77.4 436.3 77.4 H470.0 Q472.0 77.4 472.0 79.2 V85Z" fill="#eef2f3" stroke="#7d878a" stroke-width="0.5"/><path d="M470.5 85 L474.2 78.6 Q474.9 77.4 476.3 77.4 H516.0 Q518.0 77.4 518.0 79.2 V85Z" fill="#eef2f3" stroke="#7d878a" stroke-width="0.5"/><path d="M516.5 85 L520.2 78.6 Q520.9 77.4 522.3 77.4 H555.0 Q557.0 77.4 557.0 79.2 V85Z" fill="#eef2f3" stroke="#7d878a" stroke-width="0.5"/><path d="M555.5 85 L559.2 78.6 Q559.9 77.4 561.3 77.4 H593.0 Q595.0 77.4 595.0 79.2 V85Z" fill="#eef2f3" stroke="#7d878a" stroke-width="0.5"/><path d="M593.5 85 L597.2 78.6 Q597.9 77.4 599.3 77.4 H635.5 Q637.5 77.4 637.5 79.2 V85Z" fill="#eef2f3" stroke="#7d878a" stroke-width="0.5"/><path d="M636.5 85 L640.2 78.6 Q640.9 77.4 642.3 77.4 H665.5 Q667.5 77.4 667.5 79.2 V85Z" fill="#eef2f3" stroke="#7d878a" stroke-width="0.5"/><path d="M666.5 85 L670.2 78.6 Q670.9 77.4 672.3 77.4 H702.5 Q704.5 77.4 704.5 79.2 V85Z" fill="#eef2f3" stroke="#7d878a" stroke-width="0.5"/></svg>
<span class="t" style="left:8px;top:55.3px;font-size:6.5px;letter-spacing:-0.27px;color:#111">Standard</span>
<span class="t" style="left:41.7px;top:55.3px;font-size:6.5px;letter-spacing:-0.27px;color:#111">CPlanes</span>
<span class="t" style="left:73.7px;top:55.3px;font-size:6.5px;letter-spacing:-0.27px;color:#111">Set View</span>
<span class="t" style="left:106.2px;top:55.3px;font-size:6.5px;letter-spacing:-0.27px;color:#111">Display</span>
<span class="t" style="left:134.7px;top:55.3px;font-size:6.5px;letter-spacing:-0.27px;color:#111">Select</span>
<span class="t" style="left:160.2px;top:55.3px;font-size:6.5px;letter-spacing:-0.27px;color:#111">Viewport Layout</span>
<span class="t" style="left:210.7px;top:55.3px;font-size:6.5px;letter-spacing:-0.27px;color:#111">Visibility</span>
<span class="t" style="left:240.7px;top:55.3px;font-size:6.5px;letter-spacing:-0.27px;color:#111">Transform</span>
<span class="t" style="left:275.7px;top:55.3px;font-size:6.5px;letter-spacing:-0.27px;color:#111">Curve Tools</span>
<span class="t" style="left:315.7px;top:55.3px;font-size:6.5px;letter-spacing:-0.27px;color:#111">Surface Tools</span>
<span class="t" style="left:361.7px;top:55.3px;font-size:6.5px;letter-spacing:-0.27px;color:#111">Solid Tools</span>
<span class="t" style="left:400.7px;top:55.3px;font-size:6.5px;letter-spacing:-0.27px;color:#111">Mesh Tools</span>
<span class="t" style="left:438.7px;top:55.3px;font-size:6.5px;letter-spacing:-0.27px;color:#111">Render Tools</span>
<span class="t" style="left:481.7px;top:55.3px;font-size:6.5px;letter-spacing:-0.27px;color:#111">Drafting</span>
<span class="t" style="left:511.7px;top:55.3px;font-size:6.5px;letter-spacing:-0.27px;color:#111">New in V5</span>
<svg style="left:851.5px;top:53px" width="8" height="8" viewBox="-4 -4 8 8"><circle r="2.8" fill="none" stroke="#aab" stroke-width="0.7"/><circle r="1" fill="none" stroke="#aab" stroke-width="0.6"/></svg>
<svg style="left:36px;top:82px" width="145" height="13" viewBox="196 105 145 13"><path d="M197.5 117 L200.0 108.5 Q200.5 106.5 202.5 106.5 H214.5 Q216.5 106.5 216.5 108.5 V117Z" fill="#f1f4f5" stroke="#6a7478" stroke-width="0.55"/><path d="M218 117 L220.5 108.5 Q221 106.5 223 106.5 H239 Q241 106.5 241 108.5 V117Z" fill="#f1f4f5" stroke="#6a7478" stroke-width="0.55"/><path d="M243 117 L245.5 108.5 Q246 106.5 248 106.5 H275 Q277 106.5 277 108.5 V117Z" fill="#f1f4f5" stroke="#6a7478" stroke-width="0.55"/><path d="M278.5 117 L281.0 108.5 Q281.5 106.5 283.5 106.5 H317 Q319 106.5 319 108.5 V117Z" fill="#8fc196" stroke="#6a7478" stroke-width="0.55"/><path d="M321 117 L323.5 108.5 Q324 106.5 326 106.5 H333.5 Q335.5 106.5 335.5 108.5 V117Z" fill="#f1f4f5" stroke="#6a7478" stroke-width="0.55"/><path d="M329.5 109.3 L331 111 L329.5 112.7 L328 111Z M329.5 108.2 V113.8 M326.7 111 H332.3" stroke="#555" stroke-width="0.5" fill="none"/></svg>
<span class="t" style="left:43.3px;top:85.2px;font-size:6.9px;letter-spacing:-0.33px;color:#222">Top</span>
<span class="t" style="left:63.8px;top:85.2px;font-size:6.9px;letter-spacing:-0.33px;color:#222">Front</span>
<span class="t" style="left:88.8px;top:85.2px;font-size:6.9px;letter-spacing:-0.33px;color:#222">Side View</span>
<span class="t" style="left:124.3px;top:85.2px;font-size:6.9px;letter-spacing:-0.33px;color:#222">Perspective</span>
<svg style="left:0;top:0" width="864" height="531" viewBox="160 23 864 531"><defs><radialGradient id="tsg" cx="0.35" cy="0.3" r="0.75"><stop offset="0" stop-color="#fff" stop-opacity="0.9"/><stop offset="0.5" stop-color="#fff" stop-opacity="0"/><stop offset="1" stop-color="#000" stop-opacity="0.5"/></radialGradient></defs><g transform="translate(171.5,93) scale(1)"><path d="M-3.5 -5.5 H1.5 L4 -3 V5.5 H-3.5Z" fill="#fff" stroke="#333" stroke-width="0.7"/><path d="M1.5 -5.5 V-3 H4" fill="none" stroke="#333" stroke-width="0.5"/></g><g transform="translate(186.8,93) scale(1)"><path d="M-5.5 -3.5 H-2 L-1 -2.3 H4 V4 H-5.5Z" fill="#e0a820" stroke="#7a5a10" stroke-width="0.5"/><path d="M-5.5 4 L-3.5 -0.5 H6 L4 4Z" fill="#f2c840" stroke="#7a5a10" stroke-width="0.5"/></g><g transform="translate(201.6,93) scale(1)"><rect x="-5" y="-5" width="10" height="10" fill="#c8a020" stroke="#5a4a10" stroke-width="0.6"/><rect x="-3" y="-5" width="6" height="3.8" fill="#eee"/><rect x="-3.2" y="0.8" width="6.4" height="4.2" fill="#555"/></g><path d="M205.5 99.5 l2.7 0 l0 -2.7Z" fill="#4a4a4a"/><g transform="translate(216.6,93) scale(1)"><path d="M-3 -5.5 H3.5 L3 -1 H-4Z" fill="#fff" stroke="#333" stroke-width="0.5"/><rect x="-5.5" y="-1.5" width="11" height="5" rx="0.8" fill="#888" stroke="#333" stroke-width="0.6"/><rect x="-3.5" y="2" width="7" height="3.5" fill="#ddd" stroke="#333" stroke-width="0.5"/></g><g transform="translate(232.3,93) scale(1)"><path d="M-4 -4 H2 V5.5 H-4Z" fill="#fff" stroke="#333" stroke-width="0.7"/><path d="M-1.5 -5.5 H4.5 V3.5 H2" fill="#fff" stroke="#333" stroke-width="0.7"/><rect x="2.5" y="-6" width="3" height="2.5" fill="#444"/></g><path d="M236.20000000000002 99.5 l2.7 0 l0 -2.7Z" fill="#4a4a4a"/><g transform="translate(246,93) scale(1)"><path d="M-3 -5.5 L2.5 4 M3 -5.5 L-2.5 4" stroke="#333" stroke-width="0.8" fill="none"/><circle cx="-3" cy="4.5" r="1.2" fill="none" stroke="#333" stroke-width="0.6"/><circle cx="3" cy="4.5" r="1.2" fill="none" stroke="#333" stroke-width="0.6"/></g><g transform="translate(261.5,93) scale(1)"><path d="M-4.5 -5 H0 L1.5 -3.5 V2.5 H-4.5Z" fill="#fff" stroke="#333" stroke-width="0.7"/><path d="M-1 -2 H3 L4.5 -0.5 V5.5 H-1Z" fill="#fff" stroke="#333" stroke-width="0.7"/></g><g transform="translate(276,93) scale(1)"><rect x="-4" y="-4.5" width="8" height="10" rx="0.8" fill="#f0d860" stroke="#6a5a10" stroke-width="0.7"/><rect x="-2" y="-5.8" width="4" height="2.2" fill="#777" stroke="#333" stroke-width="0.4"/></g><g transform="translate(291,93) scale(1)"><path d="M-4.5 1 C-3 -4,3 -4,5 1.5" stroke="#333" stroke-width="1.3" fill="none"/><path d="M-6 -2.5 L-5 3 L-0.8 0.5Z" fill="#333"/></g><path d="M294.9 99.5 l2.7 0 l0 -2.7Z" fill="#4a4a4a"/><g transform="translate(305.7,93) scale(1)"><path d="M-3.5 1 V-3.5 Q-3.5 -4.5 -2.5 -4.5 V-5.3 Q-1.5 -6.3 -0.8 -5.3 Q0.2 -6.5 1 -5.3 Q2.2 -6 2.6 -4.6 Q3.8 -4.6 3.8 -3.5 V2.5 Q3.5 5.5 0.5 5.5 Q-2 5.5 -3 3.5 L-5.3 0.5 Q-4.8 -0.8 -3.5 1Z" fill="#fff" stroke="#333" stroke-width="0.6"/></g><g transform="translate(321,93) scale(1)"><ellipse rx="5" ry="1.8" fill="none" stroke="#666" stroke-width="0.7"/><ellipse rx="1.8" ry="5" fill="none" stroke="#666" stroke-width="0.7"/><circle r="1.2" fill="#666"/></g><g transform="translate(336,93) scale(1)"><circle cx="1" cy="-1.5" r="3.3" fill="#f4f4f4" stroke="#333" stroke-width="0.8"/><path d="M-1.5 1.2 L-5 5" stroke="#333" stroke-width="1.5"/><path d="M-0.5 -1.5 H2.5 M1 -3 V0" stroke="#333" stroke-width="0.5"/></g><g transform="translate(350.6,93) scale(1)"><circle cx="1" cy="-1.5" r="3.3" fill="#f4f4f4" stroke="#333" stroke-width="0.8"/><path d="M-1.5 1.2 L-5 5" stroke="#333" stroke-width="1.5"/><rect x="-5" y="-5.8" width="11" height="9.5" fill="none" stroke="#555" stroke-width="0.5" stroke-dasharray="1 1"/></g><path d="M354.5 99.5 l2.7 0 l0 -2.7Z" fill="#4a4a4a"/><g transform="translate(366.3,93) scale(1)"><circle cx="1" cy="-1.5" r="3.3" fill="#f4f4f4" stroke="#333" stroke-width="0.8"/><path d="M-1.5 1.2 L-5 5" stroke="#333" stroke-width="1.5"/><path d="M-5.5 -3.5 V-5.8 H-3 M4 -5.8 H6 V-3.5 M6 3.5 V5.5 H4 M-3 5.5 H-5.5 V3.5" stroke="#333" stroke-width="0.9" fill="none"/></g><path d="M370.2 99.5 l2.7 0 l0 -2.7Z" fill="#4a4a4a"/><g transform="translate(381,93) scale(1)"><circle cx="1" cy="-1.5" r="3.3" fill="#f4f4f4" stroke="#333" stroke-width="0.8"/><path d="M-1.5 1.2 L-5 5" stroke="#333" stroke-width="1.5"/><circle cx="1" cy="-1.5" r="1.8" fill="#f2c840"/></g><path d="M384.9 99.5 l2.7 0 l0 -2.7Z" fill="#4a4a4a"/><g transform="translate(395.5,93) scale(1)"><circle cx="1.5" cy="-0.5" r="2.8" fill="#f4f4f4" stroke="#333" stroke-width="0.7"/><path d="M-0.5 1.8 L-3 4.8" stroke="#333" stroke-width="1.3"/><path d="M-4.5 -1 C-4 -5,2 -6.5,5 -3" stroke="#333" stroke-width="1" fill="none"/><path d="M-6 -3 L-5 1.5 L-2 -1.5Z" fill="#333"/></g><path d="M399.4 99.5 l2.7 0 l0 -2.7Z" fill="#4a4a4a"/><g transform="translate(410.5,93) scale(1)"><rect x="-5.5" y="-5.5" width="11" height="11" fill="#e8e8e8" stroke="#333" stroke-width="0.9"/><path d="M0 -5.5 V5.5 M-5.5 0 H5.5" stroke="#333" stroke-width="0.9"/></g><path d="M414.4 99.5 l2.7 0 l0 -2.7Z" fill="#4a4a4a"/><g transform="translate(425.5,93) scale(1)"><path d="M-5.5 2.5 V0 L-3 -0.5 L-1.5 -3 H2.5 L4 -0.5 L5.5 0 V2.5Z" fill="#d82020"/><circle cx="-3" cy="2.8" r="1.2" fill="#333"/><circle cx="3" cy="2.8" r="1.2" fill="#333"/></g><path d="M429.4 99.5 l2.7 0 l0 -2.7Z" fill="#4a4a4a"/><g transform="translate(441,93) scale(1)"><path d="M-5 1 L1 -3.5 L5.5 0 L-0.5 4.5Z" fill="#ccc" stroke="#999" stroke-width="0.5"/><path d="M-1 0 L2 -3 M-1 0 L3 1" stroke="#b04040" stroke-width="0.6"/></g><path d="M444.9 99.5 l2.7 0 l0 -2.7Z" fill="#4a4a4a"/><g transform="translate(456,93) scale(1)"><circle r="4.8" fill="#ddd" stroke="#888" stroke-width="0.7"/><circle r="1.5" fill="none" stroke="#888" stroke-width="0.5"/><path d="M1.5 0 H4" stroke="#888" stroke-width="0.5"/></g><path d="M459.9 99.5 l2.7 0 l0 -2.7Z" fill="#4a4a4a"/><g transform="translate(471,93) scale(1)"><rect x="-4.5" y="-4" width="3" height="3" fill="#f2c840" stroke="#b08010" stroke-width="0.4"/><rect x="2" y="-4.5" width="3" height="3" fill="#f2c840" stroke="#b08010" stroke-width="0.4"/><rect x="-1.5" y="1.5" width="3" height="3" fill="#f2c840" stroke="#b08010" stroke-width="0.4"/><path d="M-3 -1 L0 1.5 L3.5 -1.5" stroke="#888" stroke-width="0.5" fill="none"/></g><path d="M474.9 99.5 l2.7 0 l0 -2.7Z" fill="#4a4a4a"/><g transform="translate(486,93) scale(1)"><path d="M-3.2 -1.5 A3.4 3.4 0 1 1 3.2 -1.5 C3 0.5,1.8 1.2,1.8 3 H-1.8 C-1.8 1.2,-3 0.5,-3.2 -1.5Z" fill="#eee" stroke="#777" stroke-width="0.6"/><rect x="-1.6" y="3.2" width="3.2" height="2.3" fill="#888"/></g><path d="M489.9 99.5 l2.7 0 l0 -2.7Z" fill="#4a4a4a"/><g transform="translate(500.5,93) scale(1)"><rect x="-3.5" y="-0.5" width="7" height="6" fill="#eee" stroke="#333" stroke-width="0.8"/><path d="M-2.2 -0.5 V-3 A2.2 2.4 0 0 1 2.2 -3 V-0.5" fill="none" stroke="#333" stroke-width="0.9"/><rect x="-0.6" y="1.5" width="1.2" height="2.2" fill="#333"/></g><path d="M504.4 99.5 l2.7 0 l0 -2.7Z" fill="#4a4a4a"/><g transform="translate(515,93) scale(1)"><path d="M-5.5 -4.5 L3 -3 L5.5 0.5 L-2 5 L-5.5 1Z" fill="#d83020"/><path d="M-5.5 0 L-2 3.5 L5.5 0 L5.5 1.6 L-2 5.2 L-5.5 1.6Z" fill="#3a60d0"/><path d="M-5.5 -1.2 L-2 2.5 L5.5 -1 L5.5 0.2 L-2 3.8 L-5.5 0Z" fill="#fff"/></g><path d="M518.9 99.5 l2.7 0 l0 -2.7Z" fill="#4a4a4a"/><g transform="translate(530,93) scale(1)"><circle r="5" fill="#222"/><path d="M0 0 L4.60 0.00 A4.6 4.6 0 0 1 2.30 3.98Z" fill="#e83030"/><path d="M0 0 L2.30 3.98 A4.6 4.6 0 0 1 -2.30 3.98Z" fill="#e8d020"/><path d="M0 0 L-2.30 3.98 A4.6 4.6 0 0 1 -4.60 -0.00Z" fill="#30c040"/><path d="M0 0 L-4.60 -0.00 A4.6 4.6 0 0 1 -2.30 -3.98Z" fill="#20c0d0"/><path d="M0 0 L-2.30 -3.98 A4.6 4.6 0 0 1 2.30 -3.98Z" fill="#3050e0"/><path d="M0 0 L2.30 -3.98 A4.6 4.6 0 0 1 4.60 0.00Z" fill="#d030c0"/><circle r="2" fill="#fff"/></g><path d="M533.9 99.5 l2.7 0 l0 -2.7Z" fill="#4a4a4a"/><g transform="translate(545,93) scale(1)"><circle r="4.8" fill="#aaa" stroke="#222" stroke-width="0.5"/><circle r="4.8" fill="url(#tsg)"/><path d="M0 -4.8 V4.8" stroke="#222" stroke-width="0.5"/></g><path d="M548.9 99.5 l2.7 0 l0 -2.7Z" fill="#4a4a4a"/><rect x="553" y="86.5" width="14" height="13" fill="#c4d4c6"/><g transform="translate(560,93) scale(1)"><circle r="4.8" fill="#aaa" stroke="#222" stroke-width="0.5"/><circle r="4.8" fill="url(#tsg)"/><path d="M0 -4.8 V4.8" stroke="#222" stroke-width="0.5"/></g><path d="M563.9 99.5 l2.7 0 l0 -2.7Z" fill="#4a4a4a"/><g transform="translate(575,93) scale(1)"><circle r="4.8" fill="#1840c8" stroke="#222" stroke-width="0.5"/><circle r="4.8" fill="url(#tsg)"/></g><path d="M578.9 99.5 l2.7 0 l0 -2.7Z" fill="#4a4a4a"/><g transform="translate(591,93) scale(1)"><path d="M-4 -3 L4.5 -5 L2 4Z" fill="#f0b030" stroke="#fff" stroke-width="0.6"/><ellipse cx="0" cy="-4" rx="4.2" ry="1.3" fill="#f8e0a0" transform="rotate(-13)"/></g><path d="M594.9 99.5 l2.7 0 l0 -2.7Z" fill="#4a4a4a"/><g transform="translate(605.5,93) scale(1)"><circle r="3.6" fill="#e8b830" stroke="#6a5010" stroke-width="0.6"/><circle r="1.4" fill="#eee" stroke="#6a5010" stroke-width="0.4"/><rect x="-1" y="-5.6" width="2" height="2.2" fill="#e8b830" stroke="#6a5010" stroke-width="0.4" transform="rotate(0)"/><rect x="-1" y="-5.6" width="2" height="2.2" fill="#e8b830" stroke="#6a5010" stroke-width="0.4" transform="rotate(45)"/><rect x="-1" y="-5.6" width="2" height="2.2" fill="#e8b830" stroke="#6a5010" stroke-width="0.4" transform="rotate(90)"/><rect x="-1" y="-5.6" width="2" height="2.2" fill="#e8b830" stroke="#6a5010" stroke-width="0.4" transform="rotate(135)"/><rect x="-1" y="-5.6" width="2" height="2.2" fill="#e8b830" stroke="#6a5010" stroke-width="0.4" transform="rotate(180)"/><rect x="-1" y="-5.6" width="2" height="2.2" fill="#e8b830" stroke="#6a5010" stroke-width="0.4" transform="rotate(225)"/><rect x="-1" y="-5.6" width="2" height="2.2" fill="#e8b830" stroke="#6a5010" stroke-width="0.4" transform="rotate(270)"/><rect x="-1" y="-5.6" width="2" height="2.2" fill="#e8b830" stroke="#6a5010" stroke-width="0.4" transform="rotate(315)"/></g><path d="M609.4 99.5 l2.7 0 l0 -2.7Z" fill="#4a4a4a"/><g transform="translate(620,93) scale(1)"><path d="M-5 -4 H-1.5 V0 H2.5 V4.5 H5.5" stroke="#333" stroke-width="0.9" fill="none"/><path d="M-5 -5 V-2 M-1.5 -1.5 V1 M2.5 3 V5.5 M5.5 3 V5.5" stroke="#333" stroke-width="0.6"/></g><path d="M623.9 99.5 l2.7 0 l0 -2.7Z" fill="#4a4a4a"/><g transform="translate(634.5,93) scale(1)"><circle r="5" fill="#3050d8" stroke="#1a2a80" stroke-width="0.5"/><circle r="5" fill="url(#tsg)"/></g><path d="M638.4 99.5 l2.7 0 l0 -2.7Z" fill="#4a4a4a"/><text x="632.3" y="96.3" font-size="8.5" font-weight="bold" fill="#fff">?</text><g transform="translate(649,93) scale(1)"><path d="M-2.8 -1.5 A3.2 3.2 0 1 1 3.6 -1.5 C3.4 0.5,2.2 1.2,2.2 3 H-1.4 C-1.4 1.2,-2.6 0.5,-2.8 -1.5Z" fill="#eee" stroke="#777" stroke-width="0.6"/><rect x="-1.2" y="3.2" width="3.2" height="2.3" fill="#888"/><rect x="-5.5" y="-5.5" width="4" height="4" fill="#111"/><path d="M-5.5 -5.5 L-1.5 -1.5 L-1.5 -5.5Z" fill="#f2c840"/></g><path d="M652.9 99.5 l2.7 0 l0 -2.7Z" fill="#4a4a4a"/><g transform="translate(664.5,93) scale(1)"><path d="M-5.5 2 L0.5 -5 L5.5 -2.5 L0 4.5Z" fill="#f0e040" stroke="#8a7a10" stroke-width="0.5"/><path d="M-5.5 2 L0 4.5 L0 5.8 L-5.5 3.3Z" fill="#c8b820"/></g><path d="M668.4 99.5 l2.7 0 l0 -2.7Z" fill="#4a4a4a"/><g transform="translate(679.5,93) scale(1)"><path d="M0.5 0 C0.5 -1.5,-1.5 -1.5,-1.5 0.3 C-1.5 2.5,2.5 2.5,2.5 -0.3 C2.5 -3.5,-3.5 -3.5,-3.5 0.3 C-3.5 4,3 4.5,4.3 1.5" stroke="#888" stroke-width="0.8" fill="none"/><path d="M-5.5 -3.5 V-5.5 H-3.5 M3.5 -5.5 H5.5 V-3.5" stroke="#888" stroke-width="0.5" fill="none"/></g><path d="M683.4 99.5 l2.7 0 l0 -2.7Z" fill="#4a4a4a"/><g transform="translate(171.3,114.0) scale(1)"><path d="M-2 -4.5 V3 L-0.3 1.5 L1 4.5 L2 4 L0.8 1.2 H3Z" fill="#fff" stroke="#333" stroke-width="0.6"/></g><g transform="translate(186.5,114.0) scale(1)"><circle r="1" stroke="#333" stroke-width="0.7" fill="none"/></g><path d="M190.70000000000002 120.3 l2.7 0 l0 -2.7Z" fill="#4a4a4a"/><g transform="translate(171.3,129.05) scale(1)"><path d="M-4.5 3.5 L-1.5 -4.5 L4 3" stroke="#333" stroke-width="0.7" fill="none"/><circle cx="-4.5" cy="3.5" r="0.8" fill="#333"/><circle cx="-1.5" cy="-4.5" r="0.8" fill="#333"/><circle cx="4" cy="3" r="0.8" fill="#333"/></g><path d="M175.50000000000003 135.35 l2.7 0 l0 -2.7Z" fill="#4a4a4a"/><g transform="translate(186.5,129.05) scale(1)"><path d="M-4 -3.5 C1 -5,5 -1,-3.5 3.5" stroke="#333" stroke-width="0.7" fill="none"/><rect x="-5" y="-4.5" width="2" height="2" stroke="#333" stroke-width="0.7" fill="none"/><rect x="-4.5" y="2.5" width="2" height="2" stroke="#333" stroke-width="0.7" fill="none"/><rect x="2.5" y="-5.3" width="2" height="2" stroke="#333" stroke-width="0.7" fill="none"/><rect x="3" y="2.3" width="2" height="2" stroke="#333" stroke-width="0.7" fill="none"/></g><path d="M190.70000000000002 135.35 l2.7 0 l0 -2.7Z" fill="#4a4a4a"/><g transform="translate(171.3,144.1) scale(1)"><circle r="4.8" stroke="#333" stroke-width="0.7" fill="none"/><path d="M0 0 L3 -3.6" stroke="#333" stroke-width="0.7" fill="none"/><circle r="0.7" fill="#333"/></g><path d="M175.50000000000003 150.4 l2.7 0 l0 -2.7Z" fill="#4a4a4a"/><g transform="translate(186.5,144.1) scale(1)"><ellipse rx="5.3" ry="3.3" stroke="#333" stroke-width="0.7" fill="none"/><circle r="1" stroke="#333" stroke-width="0.7" fill="none"/><path d="M0 -1 V-4.5" stroke="#333" stroke-width="0.5"/></g><path d="M190.70000000000002 150.4 l2.7 0 l0 -2.7Z" fill="#4a4a4a"/><g transform="translate(171.3,159.15) scale(1)"><path d="M-4.5 -5 C2 -4,4.5 -1,4.5 1 C3 3,-1 4.5,-4.5 5Z" stroke="#333" stroke-width="0.7" fill="none"/><circle cx="-4.5" cy="-5" r="0.8" fill="#333"/><circle cx="-4.5" cy="5" r="0.8" fill="#333"/></g><path d="M175.50000000000003 165.45 l2.7 0 l0 -2.7Z" fill="#4a4a4a"/><g transform="translate(186.5,159.15) scale(1)"><rect x="-5" y="-3.5" width="10" height="7" stroke="#333" stroke-width="0.7" fill="none"/></g><path d="M190.70000000000002 165.45 l2.7 0 l0 -2.7Z" fill="#4a4a4a"/><g transform="translate(171.3,174.2) scale(1)"><path d="M-2.5 -4.5 H2.5 L5 0 L2.5 4.5 H-2.5 L-5 0Z" stroke="#333" stroke-width="0.7" fill="none"/><circle r="0.9" stroke="#333" stroke-width="0.7" fill="none"/><path d="M1 0 H3" stroke="#333" stroke-width="0.5"/></g><path d="M175.50000000000003 180.5 l2.7 0 l0 -2.7Z" fill="#4a4a4a"/><g transform="translate(186.5,174.2) scale(1)"><path d="M-4.5 -4 H-1 C3 -4,3.5 0,3.5 4.5" stroke="#333" stroke-width="1.4" fill="none"/><circle cx="-4.5" cy="-4" r="1" fill="#333"/><circle cx="3.5" cy="4.5" r="1" fill="#333"/></g><path d="M190.70000000000002 180.5 l2.7 0 l0 -2.7Z" fill="#4a4a4a"/><g transform="translate(171.3,189.25) scale(1)"><path d="M-3.5 -4 L4 -4.8 L3 3.5 L-5 4.5Z" fill="#4a6fd6" stroke="#333" stroke-width="0.5"/><path d="M-0.5 -4.3 L-1.5 4 M-4.3 0.3 L3.5 -0.6" stroke="#8fa9ee" stroke-width="0.5"/><rect x="-4.4" y="-4.9" width="1.8" height="1.8" fill="#fff" stroke="#333" stroke-width="0.4"/><rect x="3.1" y="-5.7" width="1.8" height="1.8" fill="#fff" stroke="#333" stroke-width="0.4"/><rect x="2.1" y="2.6" width="1.8" height="1.8" fill="#fff" stroke="#333" stroke-width="0.4"/><rect x="-5.9" y="3.6" width="1.8" height="1.8" fill="#fff" stroke="#333" stroke-width="0.4"/></g><path d="M175.50000000000003 195.55 l2.7 0 l0 -2.7Z" fill="#4a4a4a"/><g transform="translate(186.5,189.25) scale(1)"><path d="M-4.5 -2 C-2 -5.5,3 -4.5,5 0 L3 4.5 C1 1,-1.5 -0.5,-4.5 1Z" fill="#fff" stroke="#333" stroke-width="0.6"/><path d="M0 -0.5 C2 0.5,3 2,3 4.5 L5 0 C3.5 -2,2 -2.5,0 -0.5Z" fill="#4a6fd6"/></g><path d="M190.70000000000002 195.55 l2.7 0 l0 -2.7Z" fill="#4a4a4a"/><g transform="translate(171.3,204.3) scale(1)"><path d="M-5 -2.5 L-1.5 -4.8 L5 -3.8 V2.5 L1.5 5 L-5 4Z" fill="#4a6fd6" stroke="#1a2a70" stroke-width="0.5"/><path d="M-5 -2.5 L1.5 -1.5 L5 -3.8 M1.5 -1.5 V5" stroke="#8fa9ee" stroke-width="0.6" fill="none"/><path d="M-5 -2.5 L-1.5 -4.8 L5 -3.8 L1.5 -1.5Z" fill="#8fa9ee"/></g><path d="M175.50000000000003 210.6 l2.7 0 l0 -2.7Z" fill="#4a4a4a"/><g transform="translate(186.5,204.3) scale(1)"><circle cx="-2" cy="1.5" r="3.6" fill="#4a6fd6" stroke="#1a2a70" stroke-width="0.5"/><circle cx="2.3" cy="-2" r="3.3" fill="#4a6fd6" stroke="#1a2a70" stroke-width="0.5"/><circle cx="-3" cy="0.3" r="1.2" fill="#8fa9ee"/><circle cx="1.4" cy="-3" r="1.1" fill="#8fa9ee"/></g><path d="M190.70000000000002 210.6 l2.7 0 l0 -2.7Z" fill="#4a4a4a"/><g transform="translate(171.3,219.35) scale(1)"><path d="M-5.3 -1 V3 A5.3 2.3 0 0 0 5.3 3 V-1Z" fill="#4a6fd6" stroke="#1a2a70" stroke-width="0.5"/><ellipse cy="-1" rx="5.3" ry="2.3" fill="#fff" stroke="#1a2a70" stroke-width="0.5"/><ellipse cy="-4" rx="2.5" ry="1" fill="none" stroke="#555" stroke-width="0.6"/><ellipse cy="3" rx="2.6" ry="1" fill="#fff"/></g><path d="M175.50000000000003 225.65 l2.7 0 l0 -2.7Z" fill="#4a4a4a"/><g transform="translate(186.5,219.35) scale(1)"><path d="M-5 1 L0 -5 L5 -1.5 L0.5 5Z" fill="#4a6fd6" stroke="#1a2a70" stroke-width="0.5"/><path d="M-2.5 -2 L3 2 M-3.5 2.8 L2.5 -3.3" stroke="#8fa9ee" stroke-width="0.5"/></g><path d="M190.70000000000002 225.65 l2.7 0 l0 -2.7Z" fill="#4a4a4a"/><g transform="translate(171.3,234.4) scale(1)"><path d="M-3 -5 H0 V-3 H3 V0 H5 V3 H2.5 V5 H-0.5 V3 H-3 V0.5 H-5.5 V-2.5 H-3Z" fill="#f0a820" stroke="#7a5010" stroke-width="0.5"/><path d="M0 0 V6 L1.6 4.6 L2.8 7 L3.8 6.5 L2.7 4.2 H4.8Z" fill="#fff" stroke="#333" stroke-width="0.5"/></g><g transform="translate(186.5,234.4) scale(1)"><path d="M-5.5 5 L-3 -1 L-4.5 -4 L-0.5 -1.5 L1.5 -5.5 L2.5 -1 L6 -2.5 L3.5 1 L6 3.5 L1.5 3 L0 5.5 L-1.5 3Z" fill="#f5a010" stroke="#a05808" stroke-width="0.4"/></g><g transform="translate(171.3,249.45) scale(1)"><path d="M-5.5 1.5 H2 V4.5 H-5.5Z M2 1.5 L5.5 5 " fill="#fff" stroke="#333" stroke-width="0.6"/><path d="M-1 -5.5 H2.5 L1 1.5 H-2.5Z" fill="#4a6fd6" stroke="#1a2a70" stroke-width="0.4"/></g><path d="M175.50000000000003 255.75 l2.7 0 l0 -2.7Z" fill="#4a4a4a"/><g transform="translate(186.5,249.45) scale(1)"><rect x="-5.5" y="1" width="11" height="3.5" fill="#fff" stroke="#333" stroke-width="0.6"/><path d="M0 -5.5 H3.5 L2 1 H-1.5Z" fill="#4a6fd6" stroke="#1a2a70" stroke-width="0.4"/></g><path d="M190.70000000000002 255.75 l2.7 0 l0 -2.7Z" fill="#4a4a4a"/><g transform="translate(171.3,264.5) scale(1)"><circle cx="0" cy="-2.3" r="2.8" fill="#111"/><circle cx="-2.3" cy="1.8" r="2.8" fill="#2a3fa8"/><circle cx="2.3" cy="1.8" r="2.8" fill="#ddd" stroke="#333" stroke-width="0.4"/><circle cx="0" cy="0.5" r="1.3" fill="#fff"/></g><path d="M175.50000000000003 270.8 l2.7 0 l0 -2.7Z" fill="#4a4a4a"/><g transform="translate(186.5,264.5) scale(1)"><circle cx="0" cy="-3" r="2" fill="#fff" stroke="#1a2a70" stroke-width="0.5"/><circle cx="-2.6" cy="2" r="2" fill="#fff" stroke="#1a2a70" stroke-width="0.5"/><circle cx="2.6" cy="2" r="2.2" fill="#1a2a90"/></g><path d="M190.70000000000002 270.8 l2.7 0 l0 -2.7Z" fill="#4a4a4a"/><g transform="translate(171.3,279.55) scale(1)"><path d="M-5 -3.5 C0 -3.5,3.5 0,4 5" stroke="#333" stroke-width="1.3" fill="none"/><path d="M-5 -3.5 L-2 -5" stroke="#333" stroke-width="0.6"/></g><path d="M175.50000000000003 285.85 l2.7 0 l0 -2.7Z" fill="#4a4a4a"/><g transform="translate(186.5,279.55) scale(1)"><path d="M-5.5 -2.5 C0 -2.5,3 0,3.5 5" stroke="#333" stroke-width="1" fill="none"/><path d="M-3 -5 C2 -5,5.5 -2,5.5 2.5" stroke="#777" stroke-width="0.6" fill="none" stroke-dasharray="1.2 0.8"/><circle cx="4" cy="2" r="1.2" stroke="#333" stroke-width="0.7" fill="none"/></g><path d="M190.70000000000002 285.85 l2.7 0 l0 -2.7Z" fill="#4a4a4a"/><g transform="translate(171.3,294.6) scale(1)"><path d="M-5 -5.5 H5 V-2.5 H1.8 V5.5 H-1.8 V-2.5 H-5Z" fill="#4a6fd6" stroke="#1a2a70" stroke-width="0.6"/><path d="M-4 -4.7 H4" stroke="#8fa9ee" stroke-width="0.7"/></g><path d="M175.50000000000003 300.9 l2.7 0 l0 -2.7Z" fill="#4a4a4a"/><g transform="translate(186.5,294.6) scale(1)"><path d="M-3.5 3.5 L4 -4" stroke="#777" stroke-width="0.5" stroke-dasharray="1 0.8"/><rect x="-5.5" y="1.8" width="3.6" height="3.6" fill="#fff" stroke="#333" stroke-width="0.6"/><rect x="2.5" y="-5.5" width="3" height="3" fill="#fff" stroke="#333" stroke-width="0.6"/><rect x="-1" y="-1.5" width="2.2" height="2.2" fill="#4a6fd6"/></g><path d="M190.70000000000002 300.9 l2.7 0 l0 -2.7Z" fill="#4a4a4a"/><g transform="translate(171.3,309.65) scale(1)"><path d="M-3.5 -3.5 L3.5 3.5 M3.5 -3.5 L-3.5 3.5" stroke="#333" stroke-width="0.5"/><rect x="-5.2" y="-5.2" width="3.4" height="3.4" fill="#fff" stroke="#333" stroke-width="0.5"/><rect x="1.8" y="-5.2" width="3.4" height="3.4" fill="#4a6fd6" stroke="#333" stroke-width="0.5"/><rect x="-5.2" y="1.8" width="3.4" height="3.4" fill="#4a6fd6" stroke="#333" stroke-width="0.5"/><rect x="1.8" y="1.8" width="3.4" height="3.4" fill="#fff" stroke="#333" stroke-width="0.5"/><rect x="-1.7" y="-1.7" width="3.4" height="3.4" fill="#fff" stroke="#333" stroke-width="0.5"/></g><path d="M175.50000000000003 315.95 l2.7 0 l0 -2.7Z" fill="#4a4a4a"/><g transform="translate(186.5,309.65) scale(1)"><rect x="-5.5" y="-4.5" width="2.6" height="8.5" stroke="#333" stroke-width="0.7" fill="none"/><path d="M-1 5 L4 -3 L5.8 -1.8 L0.8 6Z" fill="#4a6fd6" stroke="#1a2a70" stroke-width="0.4"/><path d="M4 -3 L5 -5.5 L5.8 -1.8Z" fill="#8fa9ee"/></g><path d="M190.70000000000002 315.95 l2.7 0 l0 -2.7Z" fill="#4a4a4a"/><g transform="translate(171.3,324.7) scale(1)"><path d="M-5.5 -1.5 L-2.5 -5 H5 V2 L2 5.5 H-5.5Z" fill="#4a6fd6" stroke="#1a2a70" stroke-width="0.5"/><path d="M-5.5 -1.5 H2 V5.5 M2 -1.5 L5 -5" stroke="#8fa9ee" stroke-width="0.6" fill="none"/><rect x="-3" y="1" width="4" height="4.5" fill="#fff"/></g><path d="M175.50000000000003 331.0 l2.7 0 l0 -2.7Z" fill="#4a4a4a"/><g transform="translate(186.5,324.7) scale(1)"><path d="M-5.5 2 H5.5 L4 5 H-4Z" fill="#4a6fd6" stroke="#1a2a70" stroke-width="0.4"/><path d="M-3.5 2 V-4 M-1.2 2 V-4 M1.2 2 V-4 M3.5 2 V-4" stroke="#333" stroke-width="0.7"/><path d="M-3.5 -5.5 l-0.9 1.8 h1.8Z M-1.2 -5.5 l-0.9 1.8 h1.8Z M1.2 -5.5 l-0.9 1.8 h1.8Z M3.5 -5.5 l-0.9 1.8 h1.8Z" fill="#fff" stroke="#333" stroke-width="0.3"/></g><path d="M190.70000000000002 331.0 l2.7 0 l0 -2.7Z" fill="#4a4a4a"/><g transform="translate(171.3,339.75) scale(1)"><rect x="-5.3" y="-5.3" width="2.8" height="2.8" fill="#8fa9ee" stroke="#1a2a90" stroke-width="0.6"/><rect x="-5.3" y="-1.4" width="2.8" height="2.8" fill="#8fa9ee" stroke="#1a2a90" stroke-width="0.6"/><rect x="-5.3" y="2.5" width="2.8" height="2.8" fill="#8fa9ee" stroke="#1a2a90" stroke-width="0.6"/><rect x="-1.4" y="-5.3" width="2.8" height="2.8" fill="#8fa9ee" stroke="#1a2a90" stroke-width="0.6"/><rect x="-1.4" y="-1.4" width="2.8" height="2.8" fill="#8fa9ee" stroke="#1a2a90" stroke-width="0.6"/><rect x="-1.4" y="2.5" width="2.8" height="2.8" fill="#8fa9ee" stroke="#1a2a90" stroke-width="0.6"/><rect x="2.5" y="-5.3" width="2.8" height="2.8" fill="#8fa9ee" stroke="#1a2a90" stroke-width="0.6"/><rect x="2.5" y="-1.4" width="2.8" height="2.8" fill="#8fa9ee" stroke="#1a2a90" stroke-width="0.6"/><rect x="2.5" y="2.5" width="2.8" height="2.8" fill="#8fa9ee" stroke="#1a2a90" stroke-width="0.6"/></g><path d="M175.50000000000003 346.05 l2.7 0 l0 -2.7Z" fill="#4a4a4a"/><g transform="translate(186.5,339.75) scale(1)"><rect x="-1.5" y="-5.5" width="3" height="3" fill="#fff" stroke="#333" stroke-width="0.5"/><rect x="-1.5" y="2.5" width="3" height="3" fill="#fff" stroke="#333" stroke-width="0.5"/><path d="M0 -6 V6" stroke="#d02020" stroke-width="0.7"/><path d="M-2.2 -2 C-0.5 -0.5,-0.5 0.5,-2.2 2 M2.2 -2 C0.5 -0.5,0.5 0.5,2.2 2" stroke="#d02020" stroke-width="0.6" fill="none"/></g><path d="M190.70000000000002 346.05 l2.7 0 l0 -2.7Z" fill="#4a4a4a"/><g transform="translate(171.3,354.8) scale(1)"><path d="M-4.5 -4 L-1 -5 L1 3.5 L-2.5 5Z" fill="#fff" stroke="#333" stroke-width="0.6"/><path d="M0 -4.5 L4.5 -5.5 L3.5 3 L-0.5 4.5Z" fill="#4a6fd6" stroke="#1a2a70" stroke-width="0.5"/></g><path d="M175.50000000000003 361.1 l2.7 0 l0 -2.7Z" fill="#4a4a4a"/><g transform="translate(186.5,354.8) scale(1)"><path d="M-5 0.5 L-2 4.5 L5.5 -5" stroke="#111" stroke-width="1.5" fill="none"/></g><path d="M190.70000000000002 361.1 l2.7 0 l0 -2.7Z" fill="#4a4a4a"/><g transform="translate(171.3,369.85) scale(1)"><path d="M-5.5 3.5 L-3 -2.5 H1.5 L4 3.5Z" fill="#ccc" stroke="#333" stroke-width="0.6"/><path d="M1.5 -2.5 L5.5 0 L4 3.5" fill="#999" stroke="#333" stroke-width="0.6"/><ellipse cx="-0.8" cy="3.6" rx="4.6" ry="1.4" fill="#eee" stroke="#333" stroke-width="0.5"/></g><path d="M175.50000000000003 376.15 l2.7 0 l0 -2.7Z" fill="#4a4a4a"/><g transform="translate(186.5,369.85) scale(1)"><path d="M-5.5 2.5 L0 -2 L5.5 2 L0 6Z" fill="#f0a830" stroke="#7a5010" stroke-width="0.5"/><path d="M0 -2 L0 6" stroke="#fff" stroke-width="0.4"/><path d="M-1 -3.5 V-6 H4.5 V-3.5" stroke="#333" stroke-width="0.7" fill="none"/></g><path d="M190.70000000000002 376.15 l2.7 0 l0 -2.7Z" fill="#4a4a4a"/></svg>
<svg style="left:0;top:0" width="864" height="531" viewBox="160 23 864 531" font-family="Liberation Sans, sans-serif"><defs><clipPath id="c1"><rect x="198" y="117" width="369" height="197.5"/></clipPath><clipPath id="c2"><rect x="568" y="117" width="369" height="197.5"/></clipPath><clipPath id="c3"><rect x="198" y="316" width="369" height="201"/></clipPath><clipPath id="c4"><rect x="568" y="316" width="369" height="201"/></clipPath></defs><rect x="198" y="117" width="739" height="400" fill="#000"/><g clip-path="url(#c1)"><path d="M324.5 158 C321 148,313 132,309 116" stroke="#0f8a5c" stroke-width="1.7" fill="none"/><path d="M324.5 158 C321 148,313 132,309 116" stroke="#0f8a5c" stroke-width="3.4" fill="none" stroke-dasharray="2.3 1.1"/><path d="M324.5 158 C321 148,313 132,309 116" stroke="#000" stroke-width="0.8" fill="none" stroke-dasharray="1 2.4" stroke-dashoffset="-0.65"/><path d="M335 158 C338 146,344 130,348.5 116" stroke="#0f8a5c" stroke-width="1.7" fill="none"/><path d="M335 158 C338 146,344 130,348.5 116" stroke="#0f8a5c" stroke-width="3.4" fill="none" stroke-dasharray="2.3 1.1"/><path d="M335 158 C338 146,344 130,348.5 116" stroke="#000" stroke-width="0.8" fill="none" stroke-dasharray="1 2.4" stroke-dashoffset="-0.65"/><path d="M323 160 Q322.3 155 326 155 H332.8 Q336.3 155 335.7 160 L332.3 187 H326.8Z" fill="#0f8a5c"/><path d="M327 158 L328.3 186 M331.8 158 L330.7 186" stroke="#0a6e48" stroke-width="0.9"/><circle cx="329.5" cy="188" r="3" fill="#0f8a5c"/><circle cx="321.5" cy="186.5" r="1.7" fill="#0f8a5c"/><circle cx="337.5" cy="186.5" r="1.7" fill="#0f8a5c"/><ellipse cx="329.3" cy="229.8" rx="26" ry="30.5" fill="#0a6a46"/><circle cx="329.3" cy="196.8" r="1.5" fill="#0f8a5c"/><circle cx="334.4" cy="197.3" r="1.5" fill="#0f8a5c"/><circle cx="339.3" cy="198.8" r="1.5" fill="#0f8a5c"/><circle cx="343.9" cy="201.2" r="1.5" fill="#0f8a5c"/><circle cx="348.1" cy="204.5" r="1.5" fill="#0f8a5c"/><circle cx="351.7" cy="208.6" r="1.5" fill="#0f8a5c"/><circle cx="354.7" cy="213.3" r="1.5" fill="#0f8a5c"/><circle cx="356.8" cy="218.5" r="1.5" fill="#0f8a5c"/><circle cx="358.2" cy="224.1" r="1.5" fill="#0f8a5c"/><circle cx="358.6" cy="229.8" r="1.5" fill="#0f8a5c"/><circle cx="358.2" cy="235.5" r="1.5" fill="#0f8a5c"/><circle cx="356.8" cy="241.1" r="1.5" fill="#0f8a5c"/><circle cx="354.7" cy="246.3" r="1.5" fill="#0f8a5c"/><circle cx="351.7" cy="251.0" r="1.5" fill="#0f8a5c"/><circle cx="348.1" cy="255.1" r="1.5" fill="#0f8a5c"/><circle cx="344.0" cy="258.4" r="1.5" fill="#0f8a5c"/><circle cx="339.3" cy="260.8" r="1.5" fill="#0f8a5c"/><circle cx="334.4" cy="262.3" r="1.5" fill="#0f8a5c"/><circle cx="329.3" cy="262.8" r="1.5" fill="#0f8a5c"/><circle cx="324.2" cy="262.3" r="1.5" fill="#0f8a5c"/><circle cx="319.3" cy="260.8" r="1.5" fill="#0f8a5c"/><circle cx="314.7" cy="258.4" r="1.5" fill="#0f8a5c"/><circle cx="310.5" cy="255.1" r="1.5" fill="#0f8a5c"/><circle cx="306.9" cy="251.0" r="1.5" fill="#0f8a5c"/><circle cx="303.9" cy="246.3" r="1.5" fill="#0f8a5c"/><circle cx="301.8" cy="241.1" r="1.5" fill="#0f8a5c"/><circle cx="300.4" cy="235.5" r="1.5" fill="#0f8a5c"/><circle cx="300.0" cy="229.8" r="1.5" fill="#0f8a5c"/><circle cx="300.4" cy="224.1" r="1.5" fill="#0f8a5c"/><circle cx="301.8" cy="218.5" r="1.5" fill="#0f8a5c"/><circle cx="303.9" cy="213.3" r="1.5" fill="#0f8a5c"/><circle cx="306.9" cy="208.6" r="1.5" fill="#0f8a5c"/><circle cx="310.5" cy="204.5" r="1.5" fill="#0f8a5c"/><circle cx="314.7" cy="201.2" r="1.5" fill="#0f8a5c"/><circle cx="319.3" cy="198.8" r="1.5" fill="#0f8a5c"/><circle cx="324.2" cy="197.3" r="1.5" fill="#0f8a5c"/><circle cx="331.8" cy="188.8" r="1.6" fill="#0f8a5c"/><circle cx="340.1" cy="190.3" r="1.6" fill="#0f8a5c"/><circle cx="330.6" cy="195.4" r="1.5" fill="#0f8a5c"/><circle cx="338.9" cy="196.9" r="1.5" fill="#0f8a5c"/><circle cx="344.7" cy="192.3" r="1.6" fill="#0f8a5c"/><circle cx="352.0" cy="196.5" r="1.6" fill="#0f8a5c"/><circle cx="341.3" cy="198.1" r="1.5" fill="#0f8a5c"/><circle cx="348.6" cy="202.3" r="1.5" fill="#0f8a5c"/><circle cx="355.8" cy="200.3" r="1.6" fill="#0f8a5c"/><circle cx="361.2" cy="206.7" r="1.6" fill="#0f8a5c"/><circle cx="350.6" cy="204.6" r="1.5" fill="#0f8a5c"/><circle cx="356.0" cy="211.1" r="1.5" fill="#0f8a5c"/><circle cx="363.7" cy="211.9" r="1.6" fill="#0f8a5c"/><circle cx="366.5" cy="219.8" r="1.6" fill="#0f8a5c"/><circle cx="357.3" cy="214.2" r="1.5" fill="#0f8a5c"/><circle cx="360.2" cy="222.1" r="1.5" fill="#0f8a5c"/><circle cx="367.4" cy="225.6" r="1.6" fill="#0f8a5c"/><circle cx="367.4" cy="234.0" r="1.6" fill="#0f8a5c"/><circle cx="360.6" cy="225.6" r="1.5" fill="#0f8a5c"/><circle cx="360.6" cy="234.0" r="1.5" fill="#0f8a5c"/><circle cx="366.5" cy="239.8" r="1.6" fill="#0f8a5c"/><circle cx="363.7" cy="247.7" r="1.6" fill="#0f8a5c"/><circle cx="360.2" cy="237.5" r="1.5" fill="#0f8a5c"/><circle cx="357.3" cy="245.4" r="1.5" fill="#0f8a5c"/><circle cx="361.2" cy="252.9" r="1.6" fill="#0f8a5c"/><circle cx="355.8" cy="259.3" r="1.6" fill="#0f8a5c"/><circle cx="356.0" cy="248.5" r="1.5" fill="#0f8a5c"/><circle cx="350.6" cy="255.0" r="1.5" fill="#0f8a5c"/><circle cx="352.0" cy="263.1" r="1.6" fill="#0f8a5c"/><circle cx="344.7" cy="267.3" r="1.6" fill="#0f8a5c"/><circle cx="348.6" cy="257.3" r="1.5" fill="#0f8a5c"/><circle cx="341.3" cy="261.5" r="1.5" fill="#0f8a5c"/><circle cx="340.1" cy="269.3" r="1.6" fill="#0f8a5c"/><circle cx="331.8" cy="270.8" r="1.6" fill="#0f8a5c"/><circle cx="338.9" cy="262.7" r="1.5" fill="#0f8a5c"/><circle cx="330.6" cy="264.2" r="1.5" fill="#0f8a5c"/><circle cx="326.8" cy="270.8" r="1.6" fill="#0f8a5c"/><circle cx="318.5" cy="269.3" r="1.6" fill="#0f8a5c"/><circle cx="328.0" cy="264.2" r="1.5" fill="#0f8a5c"/><circle cx="319.7" cy="262.7" r="1.5" fill="#0f8a5c"/><circle cx="313.9" cy="267.3" r="1.6" fill="#0f8a5c"/><circle cx="306.6" cy="263.1" r="1.6" fill="#0f8a5c"/><circle cx="317.3" cy="261.5" r="1.5" fill="#0f8a5c"/><circle cx="310.0" cy="257.3" r="1.5" fill="#0f8a5c"/><circle cx="302.8" cy="259.3" r="1.6" fill="#0f8a5c"/><circle cx="297.4" cy="252.9" r="1.6" fill="#0f8a5c"/><circle cx="308.0" cy="255.0" r="1.5" fill="#0f8a5c"/><circle cx="302.6" cy="248.5" r="1.5" fill="#0f8a5c"/><circle cx="294.9" cy="247.7" r="1.6" fill="#0f8a5c"/><circle cx="292.1" cy="239.8" r="1.6" fill="#0f8a5c"/><circle cx="301.3" cy="245.4" r="1.5" fill="#0f8a5c"/><circle cx="298.4" cy="237.5" r="1.5" fill="#0f8a5c"/><circle cx="291.2" cy="234.0" r="1.6" fill="#0f8a5c"/><circle cx="291.2" cy="225.6" r="1.6" fill="#0f8a5c"/><circle cx="298.0" cy="234.0" r="1.5" fill="#0f8a5c"/><circle cx="298.0" cy="225.6" r="1.5" fill="#0f8a5c"/><circle cx="292.1" cy="219.8" r="1.6" fill="#0f8a5c"/><circle cx="294.9" cy="211.9" r="1.6" fill="#0f8a5c"/><circle cx="298.4" cy="222.1" r="1.5" fill="#0f8a5c"/><circle cx="301.3" cy="214.2" r="1.5" fill="#0f8a5c"/><circle cx="297.4" cy="206.7" r="1.6" fill="#0f8a5c"/><circle cx="302.8" cy="200.3" r="1.6" fill="#0f8a5c"/><circle cx="302.6" cy="211.1" r="1.5" fill="#0f8a5c"/><circle cx="308.0" cy="204.6" r="1.5" fill="#0f8a5c"/><circle cx="306.6" cy="196.5" r="1.6" fill="#0f8a5c"/><circle cx="313.9" cy="192.3" r="1.6" fill="#0f8a5c"/><circle cx="310.0" cy="202.3" r="1.5" fill="#0f8a5c"/><circle cx="317.3" cy="198.1" r="1.5" fill="#0f8a5c"/><circle cx="318.5" cy="190.3" r="1.6" fill="#0f8a5c"/><circle cx="326.8" cy="188.8" r="1.6" fill="#0f8a5c"/><circle cx="319.7" cy="196.9" r="1.5" fill="#0f8a5c"/><circle cx="328.0" cy="195.4" r="1.5" fill="#0f8a5c"/><circle cx="335.3" cy="193.2" r="4.7" fill="#8db4fa"/><circle cx="334.1" cy="192.0" r="2.1" fill="#a6c4fc" opacity="0.85"/><circle cx="346.5" cy="197.6" r="4.7" fill="#8db4fa"/><circle cx="345.3" cy="196.4" r="2.1" fill="#a6c4fc" opacity="0.85"/><circle cx="355.7" cy="205.9" r="4.7" fill="#8db4fa"/><circle cx="354.5" cy="204.7" r="2.1" fill="#a6c4fc" opacity="0.85"/><circle cx="361.6" cy="217.1" r="4.7" fill="#8db4fa"/><circle cx="360.5" cy="215.9" r="2.1" fill="#a6c4fc" opacity="0.85"/><circle cx="363.7" cy="229.8" r="4.7" fill="#8db4fa"/><circle cx="362.5" cy="228.6" r="2.1" fill="#a6c4fc" opacity="0.85"/><circle cx="361.6" cy="242.5" r="4.7" fill="#8db4fa"/><circle cx="360.5" cy="241.3" r="2.1" fill="#a6c4fc" opacity="0.85"/><circle cx="355.7" cy="253.7" r="4.7" fill="#8db4fa"/><circle cx="354.5" cy="252.5" r="2.1" fill="#a6c4fc" opacity="0.85"/><circle cx="346.5" cy="262.0" r="4.7" fill="#8db4fa"/><circle cx="345.3" cy="260.8" r="2.1" fill="#a6c4fc" opacity="0.85"/><circle cx="335.3" cy="266.4" r="4.7" fill="#8db4fa"/><circle cx="334.1" cy="265.3" r="2.1" fill="#a6c4fc" opacity="0.85"/><circle cx="323.3" cy="266.4" r="4.7" fill="#8db4fa"/><circle cx="322.2" cy="265.3" r="2.1" fill="#a6c4fc" opacity="0.85"/><circle cx="312.1" cy="262.0" r="4.7" fill="#8db4fa"/><circle cx="310.9" cy="260.8" r="2.1" fill="#a6c4fc" opacity="0.85"/><circle cx="302.9" cy="253.7" r="4.7" fill="#8db4fa"/><circle cx="301.8" cy="252.5" r="2.1" fill="#a6c4fc" opacity="0.85"/><circle cx="297.0" cy="242.5" r="4.7" fill="#8db4fa"/><circle cx="295.8" cy="241.3" r="2.1" fill="#a6c4fc" opacity="0.85"/><circle cx="294.9" cy="229.8" r="4.7" fill="#8db4fa"/><circle cx="293.7" cy="228.6" r="2.1" fill="#a6c4fc" opacity="0.85"/><circle cx="297.0" cy="217.1" r="4.7" fill="#8db4fa"/><circle cx="295.8" cy="215.9" r="2.1" fill="#a6c4fc" opacity="0.85"/><circle cx="302.9" cy="205.9" r="4.7" fill="#c4d8ff"/><circle cx="301.8" cy="204.7" r="2.1" fill="#fff" opacity="0.85"/><circle cx="312.1" cy="197.6" r="4.7" fill="#c4d8ff"/><circle cx="310.9" cy="196.4" r="2.1" fill="#fff" opacity="0.85"/><circle cx="323.3" cy="193.2" r="4.7" fill="#8db4fa"/><circle cx="322.2" cy="192.0" r="2.1" fill="#a6c4fc" opacity="0.85"/><circle cx="325.5" cy="197.8" r="1.35" fill="#0f8a5c"/><circle cx="333.1" cy="197.8" r="1.35" fill="#0f8a5c"/><circle cx="325.6" cy="204.1" r="1.35" fill="#0f8a5c"/><circle cx="333.0" cy="204.1" r="1.35" fill="#0f8a5c"/><circle cx="337.5" cy="199.3" r="1.35" fill="#0f8a5c"/><circle cx="344.4" cy="202.6" r="1.35" fill="#0f8a5c"/><circle cx="335.0" cy="205.0" r="1.35" fill="#0f8a5c"/><circle cx="341.5" cy="208.2" r="1.35" fill="#0f8a5c"/><circle cx="348.0" cy="206.8" r="1.35" fill="#0f8a5c"/><circle cx="352.8" cy="212.8" r="1.35" fill="#0f8a5c"/><circle cx="343.2" cy="210.9" r="1.35" fill="#0f8a5c"/><circle cx="347.7" cy="216.6" r="1.35" fill="#0f8a5c"/><circle cx="354.7" cy="218.9" r="1.35" fill="#0f8a5c"/><circle cx="356.4" cy="226.4" r="1.35" fill="#0f8a5c"/><circle cx="348.6" cy="220.5" r="1.35" fill="#0f8a5c"/><circle cx="350.2" cy="227.6" r="1.35" fill="#0f8a5c"/><circle cx="356.4" cy="233.2" r="1.35" fill="#0f8a5c"/><circle cx="354.7" cy="240.7" r="1.35" fill="#0f8a5c"/><circle cx="350.2" cy="232.0" r="1.35" fill="#0f8a5c"/><circle cx="348.6" cy="239.1" r="1.35" fill="#0f8a5c"/><circle cx="352.8" cy="246.8" r="1.35" fill="#0f8a5c"/><circle cx="348.0" cy="252.8" r="1.35" fill="#0f8a5c"/><circle cx="347.7" cy="243.0" r="1.35" fill="#0f8a5c"/><circle cx="343.2" cy="248.7" r="1.35" fill="#0f8a5c"/><circle cx="344.4" cy="257.0" r="1.35" fill="#0f8a5c"/><circle cx="337.5" cy="260.3" r="1.35" fill="#0f8a5c"/><circle cx="341.5" cy="251.4" r="1.35" fill="#0f8a5c"/><circle cx="335.0" cy="254.6" r="1.35" fill="#0f8a5c"/><circle cx="333.1" cy="261.8" r="1.35" fill="#0f8a5c"/><circle cx="325.5" cy="261.8" r="1.35" fill="#0f8a5c"/><circle cx="333.0" cy="255.5" r="1.35" fill="#0f8a5c"/><circle cx="325.6" cy="255.5" r="1.35" fill="#0f8a5c"/><circle cx="321.1" cy="260.3" r="1.35" fill="#0f8a5c"/><circle cx="314.2" cy="257.0" r="1.35" fill="#0f8a5c"/><circle cx="323.6" cy="254.6" r="1.35" fill="#0f8a5c"/><circle cx="317.1" cy="251.4" r="1.35" fill="#0f8a5c"/><circle cx="310.6" cy="252.8" r="1.35" fill="#0f8a5c"/><circle cx="305.8" cy="246.8" r="1.35" fill="#0f8a5c"/><circle cx="315.4" cy="248.7" r="1.35" fill="#0f8a5c"/><circle cx="310.9" cy="243.0" r="1.35" fill="#0f8a5c"/><circle cx="303.9" cy="240.7" r="1.35" fill="#0f8a5c"/><circle cx="302.2" cy="233.2" r="1.35" fill="#0f8a5c"/><circle cx="310.0" cy="239.1" r="1.35" fill="#0f8a5c"/><circle cx="308.4" cy="232.0" r="1.35" fill="#0f8a5c"/><circle cx="302.2" cy="226.4" r="1.35" fill="#0f8a5c"/><circle cx="303.9" cy="218.9" r="1.35" fill="#0f8a5c"/><circle cx="308.4" cy="227.6" r="1.35" fill="#0f8a5c"/><circle cx="310.0" cy="220.5" r="1.35" fill="#0f8a5c"/><circle cx="305.8" cy="212.8" r="1.35" fill="#0f8a5c"/><circle cx="310.6" cy="206.8" r="1.35" fill="#0f8a5c"/><circle cx="310.9" cy="216.6" r="1.35" fill="#0f8a5c"/><circle cx="315.4" cy="210.9" r="1.35" fill="#0f8a5c"/><circle cx="314.2" cy="202.6" r="1.35" fill="#0f8a5c"/><circle cx="321.1" cy="199.3" r="1.35" fill="#0f8a5c"/><circle cx="317.1" cy="208.2" r="1.35" fill="#0f8a5c"/><circle cx="323.6" cy="205.0" r="1.35" fill="#0f8a5c"/><circle cx="329.3" cy="200.8" r="4.3" fill="#8db4fa"/><circle cx="328.2" cy="199.7" r="1.9" fill="#a6c4fc" opacity="0.85"/><circle cx="339.7" cy="203.7" r="4.3" fill="#8db4fa"/><circle cx="338.6" cy="202.6" r="1.9" fill="#a6c4fc" opacity="0.85"/><circle cx="348.0" cy="211.7" r="4.3" fill="#8db4fa"/><circle cx="346.9" cy="210.6" r="1.9" fill="#a6c4fc" opacity="0.85"/><circle cx="352.6" cy="223.3" r="4.3" fill="#8db4fa"/><circle cx="351.5" cy="222.3" r="1.9" fill="#a6c4fc" opacity="0.85"/><circle cx="352.6" cy="236.3" r="4.3" fill="#8db4fa"/><circle cx="351.5" cy="235.2" r="1.9" fill="#a6c4fc" opacity="0.85"/><circle cx="348.0" cy="247.9" r="4.3" fill="#8db4fa"/><circle cx="346.9" cy="246.8" r="1.9" fill="#a6c4fc" opacity="0.85"/><circle cx="339.7" cy="255.9" r="4.3" fill="#8db4fa"/><circle cx="338.6" cy="254.9" r="1.9" fill="#a6c4fc" opacity="0.85"/><circle cx="329.3" cy="258.8" r="4.3" fill="#8db4fa"/><circle cx="328.2" cy="257.7" r="1.9" fill="#a6c4fc" opacity="0.85"/><circle cx="318.9" cy="255.9" r="4.3" fill="#8db4fa"/><circle cx="317.9" cy="254.9" r="1.9" fill="#a6c4fc" opacity="0.85"/><circle cx="310.6" cy="247.9" r="4.3" fill="#8db4fa"/><circle cx="309.5" cy="246.8" r="1.9" fill="#a6c4fc" opacity="0.85"/><circle cx="306.0" cy="236.3" r="4.3" fill="#8db4fa"/><circle cx="304.9" cy="235.2" r="1.9" fill="#a6c4fc" opacity="0.85"/><circle cx="306.0" cy="223.3" r="4.3" fill="#8db4fa"/><circle cx="304.9" cy="222.3" r="1.9" fill="#a6c4fc" opacity="0.85"/><circle cx="310.6" cy="211.7" r="4.3" fill="#c4d8ff"/><circle cx="309.5" cy="210.6" r="1.9" fill="#fff" opacity="0.85"/><circle cx="318.9" cy="203.7" r="4.3" fill="#c4d8ff"/><circle cx="317.9" cy="202.6" r="1.9" fill="#fff" opacity="0.85"/><ellipse cx="329.3" cy="231.4" rx="17.4" ry="22.3" fill="#122896"/><ellipse cx="329.3" cy="231.4" rx="11" ry="14.5" fill="#162fa6"/><path d="M312.3 231.4 L319.3 218.4 L329.3 209.4 L339.3 218.4 L346.3 231.4 L339.3 244.4 L329.3 253.4 L319.3 244.4Z M319.3 218.4 L339.3 218.4 L339.3 244.4 L319.3 244.4Z M312.3 231.4 L319.3 244.4 M346.3 231.4 L339.3 218.4" stroke="#2c56e4" stroke-width="0.5" fill="none" opacity="0.75"/><circle cx="317.8" cy="213.9" r="1.9" fill="#0f8a5c"/><circle cx="340.8" cy="213.9" r="1.9" fill="#0f8a5c"/><circle cx="317.8" cy="248.9" r="1.9" fill="#0f8a5c"/><circle cx="340.8" cy="248.9" r="1.9" fill="#0f8a5c"/><path d="M337 155.4 H383 M340 274.6 H383 M380.8 155.4 V274.6 M287 228 V289.5 M371.2 228 V289.5 M287 287.2 H371.2" stroke="#0f8058" stroke-width="0.75" fill="none"/><path d="M380.8 155.4 l-1.2 4 h2.4Z M380.8 274.6 l-1.2 -4 h2.4Z M287 287.2 l4 -1.2 v2.4Z M371.2 287.2 l-4 -1.2 v2.4Z" fill="#0f8058"/><text x="322" y="286" font-size="5.8" fill="#0f8058">19.54</text><text transform="translate(379.3,222) rotate(-90)" font-size="5.8" fill="#0f8058">27.83</text><path d="M217.3 294.8 V279.3" stroke="#2aa0d0" stroke-width="0.8"/><path d="M217.3 294.8 H234.3" stroke="#8a1818" stroke-width="0.8"/><text x="219.60000000000002" y="280.6" font-size="7" font-weight="bold" fill="#2aa0d0">y</text><text x="235.3" y="296.6" font-size="7" font-weight="bold" fill="#8a1818">x</text><g transform="translate(544.7,139.3) scale(1.18)"><ellipse rx="8.3" ry="3.6" fill="none" stroke="#e8a800" stroke-width="1.4"/><ellipse rx="5" ry="2" fill="none" stroke="#e8a800" stroke-width="0.8"/><path d="M-3.5 -2 L0 5.5 L3.5 -2Z" fill="#4a78e0"/><ellipse cy="-2" rx="3.5" ry="1.5" fill="#7fa8ff"/></g></g><g clip-path="url(#c2)"><path d="M714.6 265.4 L760 215 M714.6 265.4 L834.8 299.6 M834.8 300.5 L887 206.5 M833 195 L887 206.5 M817 278 L863 289 M856.2 289.5 L866 258 M861 288 L873 238" stroke="#0f8058" stroke-width="0.8" fill="none"/><path d="M714.6 265.4 l4.6 0.1 l-1.2 -2.3Z M834.8 299.6 l-4.6 -0.1 l1.2 -2.3Z M856.2 289.5 l-0.6 -4.6 l2.5 0.8Z M861 288 l-0.3 -4.6 l2.4 0.6Z" fill="#0f8058"/><path d="M816 198 C810 182,834 145,853 116" stroke="#0f8a5c" stroke-width="3" fill="none"/><path d="M816 198 C810 182,834 145,853 116" stroke="#05402a" stroke-width="0.84" fill="none" stroke-dasharray="1 2.2"/><path d="M816 198 C810 182,834 145,853 116" stroke="#000" stroke-width="3.40" fill="none" stroke-dasharray="0.35 2.85" stroke-dashoffset="-1.9" opacity="0.55"/><path d="M831 200 C850 188,885 150,904 116" stroke="#0f8a5c" stroke-width="3" fill="none"/><path d="M831 200 C850 188,885 150,904 116" stroke="#05402a" stroke-width="0.84" fill="none" stroke-dasharray="1 2.2"/><path d="M831 200 C850 188,885 150,904 116" stroke="#000" stroke-width="3.40" fill="none" stroke-dasharray="0.35 2.85" stroke-dashoffset="-1.9" opacity="0.55"/><ellipse cx="800.7" cy="248.5" rx="46" ry="30" fill="#0a6e48"/><path d="M800.7 209.5 Q800.7 240.5 800.7 244.5" stroke="#0f8a5c" stroke-width="1.6" fill="none"/><path d="M813.6 210.5 Q813.6 241.2 808.5 245.2" stroke="#0f8a5c" stroke-width="1.6" fill="none"/><path d="M825.7 213.4 Q825.7 243.2 815.7 247.2" stroke="#0f8a5c" stroke-width="1.6" fill="none"/><path d="M836.1 218.0 Q836.1 246.4 821.9 250.4" stroke="#0f8a5c" stroke-width="1.6" fill="none"/><path d="M844.0 224.0 Q844.0 250.5 826.7 254.5" stroke="#0f8a5c" stroke-width="1.6" fill="none"/><path d="M849.0 231.0 Q849.0 255.3 829.7 259.3" stroke="#0f8a5c" stroke-width="1.6" fill="none"/><path d="M850.7 238.5 Q850.7 260.5 830.7 264.5" stroke="#0f8a5c" stroke-width="1.6" fill="none"/><path d="M849.0 246.0 Q849.0 265.7 829.7 269.7" stroke="#0f8a5c" stroke-width="1.6" fill="none"/><path d="M844.0 253.0 Q844.0 270.5 826.7 274.5" stroke="#0f8a5c" stroke-width="1.6" fill="none"/><path d="M836.1 259.0 Q836.1 274.6 821.9 278.6" stroke="#0f8a5c" stroke-width="1.6" fill="none"/><path d="M825.7 263.6 Q825.7 277.8 815.7 281.8" stroke="#0f8a5c" stroke-width="1.6" fill="none"/><path d="M813.6 266.5 Q813.6 279.8 808.5 283.8" stroke="#0f8a5c" stroke-width="1.6" fill="none"/><path d="M800.7 267.5 Q800.7 280.5 800.7 284.5" stroke="#0f8a5c" stroke-width="1.6" fill="none"/><path d="M787.8 266.5 Q787.8 279.8 792.9 283.8" stroke="#0f8a5c" stroke-width="1.6" fill="none"/><path d="M775.7 263.6 Q775.7 277.8 785.7 281.8" stroke="#0f8a5c" stroke-width="1.6" fill="none"/><path d="M765.3 259.0 Q765.3 274.6 779.5 278.6" stroke="#0f8a5c" stroke-width="1.6" fill="none"/><path d="M757.4 253.0 Q757.4 270.5 774.7 274.5" stroke="#0f8a5c" stroke-width="1.6" fill="none"/><path d="M752.4 246.0 Q752.4 265.7 771.7 269.7" stroke="#0f8a5c" stroke-width="1.6" fill="none"/><path d="M750.7 238.5 Q750.7 260.5 770.7 264.5" stroke="#0f8a5c" stroke-width="1.6" fill="none"/><path d="M752.4 231.0 Q752.4 255.3 771.7 259.3" stroke="#0f8a5c" stroke-width="1.6" fill="none"/><path d="M757.4 224.0 Q757.4 250.5 774.7 254.5" stroke="#0f8a5c" stroke-width="1.6" fill="none"/><path d="M765.3 218.0 Q765.3 246.4 779.5 250.4" stroke="#0f8a5c" stroke-width="1.6" fill="none"/><path d="M775.7 213.4 Q775.7 243.2 785.7 247.2" stroke="#0f8a5c" stroke-width="1.6" fill="none"/><path d="M787.8 210.5 Q787.8 241.2 792.9 245.2" stroke="#0f8a5c" stroke-width="1.6" fill="none"/><ellipse cx="800.7" cy="237.0" rx="53" ry="32" fill="#0b774e"/><ellipse cx="800.7" cy="235.5" rx="43" ry="24.5" fill="#085a3b"/><path d="M792.9 208.8 V197.4" stroke="#0f8a5c" stroke-width="2.3" stroke-linecap="round"/><path d="M803.2 208.8 V197.4" stroke="#0f8a5c" stroke-width="2.3" stroke-linecap="round"/><ellipse cx="798.0" cy="205.8" rx="6.4" ry="5.2" fill="#94bbff"/><ellipse cx="797.6" cy="205.6" rx="3.8" ry="2.9" fill="#b6d0ff"/><ellipse cx="797.2" cy="206.1" rx="1.3" ry="1.0" fill="#86a8f0"/><path d="M791.3 214.5 V206.3" stroke="#18a070" stroke-width="1.7" stroke-linecap="round"/><path d="M804.8 214.5 V206.3" stroke="#18a070" stroke-width="1.7" stroke-linecap="round"/><path d="M809.7 210.0 V198.6" stroke="#0f8a5c" stroke-width="2.3" stroke-linecap="round"/><path d="M820.0 210.0 V198.6" stroke="#0f8a5c" stroke-width="2.3" stroke-linecap="round"/><ellipse cx="814.9" cy="207.0" rx="6.4" ry="5.2" fill="#94bbff"/><ellipse cx="814.5" cy="206.8" rx="3.8" ry="2.9" fill="#b6d0ff"/><ellipse cx="814.1" cy="207.3" rx="1.3" ry="1.0" fill="#86a8f0"/><path d="M808.1 215.7 V207.5" stroke="#18a070" stroke-width="1.7" stroke-linecap="round"/><path d="M821.7 215.7 V207.5" stroke="#18a070" stroke-width="1.7" stroke-linecap="round"/><path d="M776.4 211.1 V199.7" stroke="#0f8a5c" stroke-width="2.3" stroke-linecap="round"/><path d="M786.7 211.1 V199.7" stroke="#0f8a5c" stroke-width="2.3" stroke-linecap="round"/><ellipse cx="781.5" cy="208.1" rx="6.4" ry="5.2" fill="#94bbff"/><ellipse cx="781.1" cy="207.9" rx="3.8" ry="2.9" fill="#b6d0ff"/><ellipse cx="780.7" cy="208.4" rx="1.3" ry="1.0" fill="#86a8f0"/><path d="M774.8 216.8 V208.6" stroke="#18a070" stroke-width="1.7" stroke-linecap="round"/><path d="M788.3 216.8 V208.6" stroke="#18a070" stroke-width="1.7" stroke-linecap="round"/><path d="M799.3 214.6 V203.7" stroke="#0f8a5c" stroke-width="2.3" stroke-linecap="round"/><path d="M808.8 214.6 V203.7" stroke="#0f8a5c" stroke-width="2.3" stroke-linecap="round"/><ellipse cx="804.0" cy="211.6" rx="5.9" ry="4.7" fill="#94bbff"/><ellipse cx="803.6" cy="211.4" rx="3.5" ry="2.6" fill="#b6d0ff"/><ellipse cx="803.2" cy="211.9" rx="1.2" ry="0.9" fill="#86a8f0"/><path d="M797.8 219.8 V212.1" stroke="#18a070" stroke-width="1.7" stroke-linecap="round"/><path d="M810.3 219.8 V212.1" stroke="#18a070" stroke-width="1.7" stroke-linecap="round"/><path d="M784.5 215.6 V204.7" stroke="#0f8a5c" stroke-width="2.3" stroke-linecap="round"/><path d="M794.0 215.6 V204.7" stroke="#0f8a5c" stroke-width="2.3" stroke-linecap="round"/><ellipse cx="789.3" cy="212.6" rx="5.9" ry="4.7" fill="#94bbff"/><ellipse cx="788.9" cy="212.4" rx="3.5" ry="2.6" fill="#b6d0ff"/><ellipse cx="788.5" cy="212.9" rx="1.2" ry="0.9" fill="#86a8f0"/><path d="M783.0 220.8 V213.1" stroke="#18a070" stroke-width="1.7" stroke-linecap="round"/><path d="M795.5 220.8 V213.1" stroke="#18a070" stroke-width="1.7" stroke-linecap="round"/><path d="M813.5 217.1 V206.2" stroke="#0f8a5c" stroke-width="2.3" stroke-linecap="round"/><path d="M822.9 217.1 V206.2" stroke="#0f8a5c" stroke-width="2.3" stroke-linecap="round"/><ellipse cx="818.2" cy="214.1" rx="5.9" ry="4.7" fill="#94bbff"/><ellipse cx="817.8" cy="213.9" rx="3.5" ry="2.6" fill="#b6d0ff"/><ellipse cx="817.4" cy="214.4" rx="1.2" ry="0.9" fill="#86a8f0"/><path d="M811.9 222.3 V214.6" stroke="#18a070" stroke-width="1.7" stroke-linecap="round"/><path d="M824.4 222.3 V214.6" stroke="#18a070" stroke-width="1.7" stroke-linecap="round"/><path d="M824.9 214.5 V203.1" stroke="#0f8a5c" stroke-width="2.3" stroke-linecap="round"/><path d="M835.1 214.5 V203.1" stroke="#0f8a5c" stroke-width="2.3" stroke-linecap="round"/><ellipse cx="830.0" cy="211.5" rx="6.4" ry="5.2" fill="#94bbff"/><ellipse cx="829.6" cy="211.3" rx="3.8" ry="2.9" fill="#b6d0ff"/><ellipse cx="829.2" cy="211.8" rx="1.3" ry="1.0" fill="#86a8f0"/><path d="M823.2 220.2 V212.0" stroke="#18a070" stroke-width="1.7" stroke-linecap="round"/><path d="M836.8 220.2 V212.0" stroke="#18a070" stroke-width="1.7" stroke-linecap="round"/><path d="M762.2 216.6 V205.2" stroke="#0f8a5c" stroke-width="2.3" stroke-linecap="round"/><path d="M772.5 216.6 V205.2" stroke="#0f8a5c" stroke-width="2.3" stroke-linecap="round"/><ellipse cx="767.3" cy="213.6" rx="6.4" ry="5.2" fill="#94bbff"/><ellipse cx="766.9" cy="213.4" rx="3.8" ry="2.9" fill="#b6d0ff"/><ellipse cx="766.5" cy="213.9" rx="1.3" ry="1.0" fill="#86a8f0"/><path d="M760.6 222.3 V214.1" stroke="#18a070" stroke-width="1.7" stroke-linecap="round"/><path d="M774.1 222.3 V214.1" stroke="#18a070" stroke-width="1.7" stroke-linecap="round"/><path d="M772.0 219.8 V208.9" stroke="#0f8a5c" stroke-width="2.3" stroke-linecap="round"/><path d="M781.4 219.8 V208.9" stroke="#0f8a5c" stroke-width="2.3" stroke-linecap="round"/><ellipse cx="776.7" cy="216.8" rx="5.9" ry="4.7" fill="#94bbff"/><ellipse cx="776.3" cy="216.6" rx="3.5" ry="2.6" fill="#b6d0ff"/><ellipse cx="775.9" cy="217.1" rx="1.2" ry="0.9" fill="#86a8f0"/><path d="M770.5 225.0 V217.3" stroke="#18a070" stroke-width="1.7" stroke-linecap="round"/><path d="M783.0 225.0 V217.3" stroke="#18a070" stroke-width="1.7" stroke-linecap="round"/><path d="M824.1 222.5 V211.6" stroke="#0f8a5c" stroke-width="2.3" stroke-linecap="round"/><path d="M833.6 222.5 V211.6" stroke="#0f8a5c" stroke-width="2.3" stroke-linecap="round"/><ellipse cx="828.8" cy="219.5" rx="5.9" ry="4.7" fill="#94bbff"/><ellipse cx="828.4" cy="219.3" rx="3.5" ry="2.6" fill="#b6d0ff"/><ellipse cx="828.0" cy="219.8" rx="1.2" ry="0.9" fill="#86a8f0"/><path d="M822.6 227.7 V220.0" stroke="#18a070" stroke-width="1.7" stroke-linecap="round"/><path d="M835.1 227.7 V220.0" stroke="#18a070" stroke-width="1.7" stroke-linecap="round"/><path d="M836.4 221.8 V210.4" stroke="#0f8a5c" stroke-width="2.3" stroke-linecap="round"/><path d="M846.7 221.8 V210.4" stroke="#0f8a5c" stroke-width="2.3" stroke-linecap="round"/><ellipse cx="841.6" cy="218.8" rx="6.4" ry="5.2" fill="#94bbff"/><ellipse cx="841.2" cy="218.6" rx="3.8" ry="2.9" fill="#b6d0ff"/><ellipse cx="840.8" cy="219.1" rx="1.3" ry="1.0" fill="#86a8f0"/><path d="M834.8 227.5 V219.3" stroke="#18a070" stroke-width="1.7" stroke-linecap="round"/><path d="M848.4 227.5 V219.3" stroke="#18a070" stroke-width="1.7" stroke-linecap="round"/><path d="M764.2 226.4 V215.5" stroke="#0f8a5c" stroke-width="2.3" stroke-linecap="round"/><path d="M773.7 226.4 V215.5" stroke="#0f8a5c" stroke-width="2.3" stroke-linecap="round"/><ellipse cx="768.9" cy="223.4" rx="5.9" ry="4.7" fill="#94bbff"/><ellipse cx="768.5" cy="223.2" rx="3.5" ry="2.6" fill="#b6d0ff"/><ellipse cx="768.1" cy="223.7" rx="1.2" ry="0.9" fill="#86a8f0"/><path d="M762.7 231.6 V223.9" stroke="#18a070" stroke-width="1.7" stroke-linecap="round"/><path d="M775.2 231.6 V223.9" stroke="#18a070" stroke-width="1.7" stroke-linecap="round"/><path d="M752.1 224.5 V213.1" stroke="#0f8a5c" stroke-width="2.3" stroke-linecap="round"/><path d="M762.3 224.5 V213.1" stroke="#0f8a5c" stroke-width="2.3" stroke-linecap="round"/><ellipse cx="757.2" cy="221.5" rx="6.4" ry="5.2" fill="#94bbff"/><ellipse cx="756.8" cy="221.3" rx="3.8" ry="2.9" fill="#b6d0ff"/><ellipse cx="756.4" cy="221.8" rx="1.3" ry="1.0" fill="#86a8f0"/><path d="M750.4 230.2 V222.0" stroke="#18a070" stroke-width="1.7" stroke-linecap="round"/><path d="M764.0 230.2 V222.0" stroke="#18a070" stroke-width="1.7" stroke-linecap="round"/><path d="M829.2 229.8 V218.9" stroke="#0f8a5c" stroke-width="2.3" stroke-linecap="round"/><path d="M838.7 229.8 V218.9" stroke="#0f8a5c" stroke-width="2.3" stroke-linecap="round"/><ellipse cx="833.9" cy="226.8" rx="5.9" ry="4.7" fill="#94bbff"/><ellipse cx="833.5" cy="226.6" rx="3.5" ry="2.6" fill="#b6d0ff"/><ellipse cx="833.1" cy="227.1" rx="1.2" ry="0.9" fill="#86a8f0"/><path d="M827.7 235.0 V227.3" stroke="#18a070" stroke-width="1.7" stroke-linecap="round"/><path d="M840.2 235.0 V227.3" stroke="#18a070" stroke-width="1.7" stroke-linecap="round"/><path d="M843.1 231.0 V219.6" stroke="#0f8a5c" stroke-width="2.3" stroke-linecap="round"/><path d="M853.3 231.0 V219.6" stroke="#0f8a5c" stroke-width="2.3" stroke-linecap="round"/><ellipse cx="848.2" cy="228.0" rx="6.4" ry="5.2" fill="#94bbff"/><ellipse cx="847.8" cy="227.8" rx="3.8" ry="2.9" fill="#b6d0ff"/><ellipse cx="847.4" cy="228.3" rx="1.3" ry="1.0" fill="#86a8f0"/><path d="M841.4 236.7 V228.5" stroke="#18a070" stroke-width="1.7" stroke-linecap="round"/><path d="M855.0 236.7 V228.5" stroke="#18a070" stroke-width="1.7" stroke-linecap="round"/><path d="M762.7 234.2 V223.3" stroke="#0f8a5c" stroke-width="2.3" stroke-linecap="round"/><path d="M772.2 234.2 V223.3" stroke="#0f8a5c" stroke-width="2.3" stroke-linecap="round"/><ellipse cx="767.5" cy="231.2" rx="5.9" ry="4.7" fill="#94bbff"/><ellipse cx="767.1" cy="231.0" rx="3.5" ry="2.6" fill="#b6d0ff"/><ellipse cx="766.7" cy="231.5" rx="1.2" ry="0.9" fill="#86a8f0"/><path d="M761.2 239.4 V231.7" stroke="#18a070" stroke-width="1.7" stroke-linecap="round"/><path d="M773.7 239.4 V231.7" stroke="#18a070" stroke-width="1.7" stroke-linecap="round"/><path d="M747.1 234.1 V222.7" stroke="#0f8a5c" stroke-width="2.3" stroke-linecap="round"/><path d="M757.4 234.1 V222.7" stroke="#0f8a5c" stroke-width="2.3" stroke-linecap="round"/><ellipse cx="752.3" cy="231.1" rx="6.4" ry="5.2" fill="#94bbff"/><ellipse cx="751.9" cy="230.9" rx="3.8" ry="2.9" fill="#b6d0ff"/><ellipse cx="751.5" cy="231.4" rx="1.3" ry="1.0" fill="#86a8f0"/><path d="M745.5 239.8 V231.6" stroke="#18a070" stroke-width="1.7" stroke-linecap="round"/><path d="M759.0 239.8 V231.6" stroke="#18a070" stroke-width="1.7" stroke-linecap="round"/><path d="M827.7 237.6 V226.7" stroke="#0f8a5c" stroke-width="2.3" stroke-linecap="round"/><path d="M837.2 237.6 V226.7" stroke="#0f8a5c" stroke-width="2.3" stroke-linecap="round"/><ellipse cx="832.5" cy="234.6" rx="5.9" ry="4.7" fill="#94bbff"/><ellipse cx="832.1" cy="234.4" rx="3.5" ry="2.6" fill="#b6d0ff"/><ellipse cx="831.7" cy="234.9" rx="1.2" ry="0.9" fill="#86a8f0"/><path d="M826.2 242.8 V235.1" stroke="#18a070" stroke-width="1.7" stroke-linecap="round"/><path d="M838.7 242.8 V235.1" stroke="#18a070" stroke-width="1.7" stroke-linecap="round"/><path d="M767.8 241.5 V230.6" stroke="#0f8a5c" stroke-width="2.3" stroke-linecap="round"/><path d="M777.3 241.5 V230.6" stroke="#0f8a5c" stroke-width="2.3" stroke-linecap="round"/><ellipse cx="772.6" cy="238.5" rx="5.9" ry="4.7" fill="#94bbff"/><ellipse cx="772.2" cy="238.3" rx="3.5" ry="2.6" fill="#b6d0ff"/><ellipse cx="771.8" cy="238.8" rx="1.2" ry="0.9" fill="#86a8f0"/><path d="M766.3 246.7 V239.0" stroke="#18a070" stroke-width="1.7" stroke-linecap="round"/><path d="M778.8 246.7 V239.0" stroke="#18a070" stroke-width="1.7" stroke-linecap="round"/><path d="M844.0 240.9 V229.5" stroke="#0f8a5c" stroke-width="2.3" stroke-linecap="round"/><path d="M854.3 240.9 V229.5" stroke="#0f8a5c" stroke-width="2.3" stroke-linecap="round"/><ellipse cx="849.1" cy="237.9" rx="6.4" ry="5.2" fill="#94bbff"/><ellipse cx="848.7" cy="237.7" rx="3.8" ry="2.9" fill="#b6d0ff"/><ellipse cx="848.3" cy="238.2" rx="1.3" ry="1.0" fill="#86a8f0"/><path d="M842.4 246.6 V238.4" stroke="#18a070" stroke-width="1.7" stroke-linecap="round"/><path d="M855.9 246.6 V238.4" stroke="#18a070" stroke-width="1.7" stroke-linecap="round"/><path d="M820.0 244.2 V233.3" stroke="#0f8a5c" stroke-width="2.3" stroke-linecap="round"/><path d="M829.4 244.2 V233.3" stroke="#0f8a5c" stroke-width="2.3" stroke-linecap="round"/><ellipse cx="824.7" cy="241.2" rx="5.9" ry="4.7" fill="#94bbff"/><ellipse cx="824.3" cy="241.0" rx="3.5" ry="2.6" fill="#b6d0ff"/><ellipse cx="823.9" cy="241.5" rx="1.2" ry="0.9" fill="#86a8f0"/><path d="M818.4 249.4 V241.7" stroke="#18a070" stroke-width="1.7" stroke-linecap="round"/><path d="M830.9 249.4 V241.7" stroke="#18a070" stroke-width="1.7" stroke-linecap="round"/><path d="M778.5 246.9 V236.0" stroke="#0f8a5c" stroke-width="2.3" stroke-linecap="round"/><path d="M787.9 246.9 V236.0" stroke="#0f8a5c" stroke-width="2.3" stroke-linecap="round"/><ellipse cx="783.2" cy="243.9" rx="5.9" ry="4.7" fill="#94bbff"/><ellipse cx="782.8" cy="243.7" rx="3.5" ry="2.6" fill="#b6d0ff"/><ellipse cx="782.4" cy="244.2" rx="1.2" ry="0.9" fill="#86a8f0"/><path d="M777.0 252.1 V244.4" stroke="#18a070" stroke-width="1.7" stroke-linecap="round"/><path d="M789.5 252.1 V244.4" stroke="#18a070" stroke-width="1.7" stroke-linecap="round"/><path d="M748.1 244.0 V232.6" stroke="#0f8a5c" stroke-width="2.3" stroke-linecap="round"/><path d="M758.3 244.0 V232.6" stroke="#0f8a5c" stroke-width="2.3" stroke-linecap="round"/><ellipse cx="753.2" cy="241.0" rx="6.4" ry="5.2" fill="#94bbff"/><ellipse cx="752.8" cy="240.8" rx="3.8" ry="2.9" fill="#b6d0ff"/><ellipse cx="752.4" cy="241.3" rx="1.3" ry="1.0" fill="#86a8f0"/><path d="M746.4 249.7 V241.5" stroke="#18a070" stroke-width="1.7" stroke-linecap="round"/><path d="M760.0 249.7 V241.5" stroke="#18a070" stroke-width="1.7" stroke-linecap="round"/><path d="M807.4 248.4 V237.5" stroke="#0f8a5c" stroke-width="2.3" stroke-linecap="round"/><path d="M816.9 248.4 V237.5" stroke="#0f8a5c" stroke-width="2.3" stroke-linecap="round"/><ellipse cx="812.1" cy="245.4" rx="5.9" ry="4.7" fill="#94bbff"/><ellipse cx="811.7" cy="245.2" rx="3.5" ry="2.6" fill="#b6d0ff"/><ellipse cx="811.3" cy="245.7" rx="1.2" ry="0.9" fill="#86a8f0"/><path d="M805.9 253.6 V245.9" stroke="#18a070" stroke-width="1.7" stroke-linecap="round"/><path d="M818.4 253.6 V245.9" stroke="#18a070" stroke-width="1.7" stroke-linecap="round"/><path d="M792.6 249.4 V238.5" stroke="#0f8a5c" stroke-width="2.3" stroke-linecap="round"/><path d="M802.1 249.4 V238.5" stroke="#0f8a5c" stroke-width="2.3" stroke-linecap="round"/><ellipse cx="797.4" cy="246.4" rx="5.9" ry="4.7" fill="#94bbff"/><ellipse cx="797.0" cy="246.2" rx="3.5" ry="2.6" fill="#b6d0ff"/><ellipse cx="796.6" cy="246.7" rx="1.2" ry="0.9" fill="#86a8f0"/><path d="M791.1 254.6 V246.9" stroke="#18a070" stroke-width="1.7" stroke-linecap="round"/><path d="M803.6 254.6 V246.9" stroke="#18a070" stroke-width="1.7" stroke-linecap="round"/><path d="M839.1 250.5 V239.1" stroke="#0f8a5c" stroke-width="2.3" stroke-linecap="round"/><path d="M849.3 250.5 V239.1" stroke="#0f8a5c" stroke-width="2.3" stroke-linecap="round"/><ellipse cx="844.2" cy="247.5" rx="6.4" ry="5.2" fill="#94bbff"/><ellipse cx="843.8" cy="247.3" rx="3.8" ry="2.9" fill="#b6d0ff"/><ellipse cx="843.4" cy="247.8" rx="1.3" ry="1.0" fill="#86a8f0"/><path d="M837.4 256.2 V248.0" stroke="#18a070" stroke-width="1.7" stroke-linecap="round"/><path d="M851.0 256.2 V248.0" stroke="#18a070" stroke-width="1.7" stroke-linecap="round"/><path d="M754.7 253.2 V241.8" stroke="#0f8a5c" stroke-width="2.3" stroke-linecap="round"/><path d="M765.0 253.2 V241.8" stroke="#0f8a5c" stroke-width="2.3" stroke-linecap="round"/><ellipse cx="759.8" cy="250.2" rx="6.4" ry="5.2" fill="#94bbff"/><ellipse cx="759.4" cy="250.0" rx="3.8" ry="2.9" fill="#b6d0ff"/><ellipse cx="759.0" cy="250.5" rx="1.3" ry="1.0" fill="#86a8f0"/><path d="M753.0 258.9 V250.7" stroke="#18a070" stroke-width="1.7" stroke-linecap="round"/><path d="M766.6 258.9 V250.7" stroke="#18a070" stroke-width="1.7" stroke-linecap="round"/><path d="M828.9 258.4 V247.0" stroke="#0f8a5c" stroke-width="2.3" stroke-linecap="round"/><path d="M839.2 258.4 V247.0" stroke="#0f8a5c" stroke-width="2.3" stroke-linecap="round"/><ellipse cx="834.1" cy="255.4" rx="6.4" ry="5.2" fill="#94bbff"/><ellipse cx="833.7" cy="255.2" rx="3.8" ry="2.9" fill="#b6d0ff"/><ellipse cx="833.3" cy="255.7" rx="1.3" ry="1.0" fill="#86a8f0"/><path d="M827.3 264.1 V255.9" stroke="#18a070" stroke-width="1.7" stroke-linecap="round"/><path d="M840.8 264.1 V255.9" stroke="#18a070" stroke-width="1.7" stroke-linecap="round"/><path d="M766.3 260.5 V249.1" stroke="#0f8a5c" stroke-width="2.3" stroke-linecap="round"/><path d="M776.5 260.5 V249.1" stroke="#0f8a5c" stroke-width="2.3" stroke-linecap="round"/><ellipse cx="771.4" cy="257.5" rx="6.4" ry="5.2" fill="#94bbff"/><ellipse cx="771.0" cy="257.3" rx="3.8" ry="2.9" fill="#b6d0ff"/><ellipse cx="770.6" cy="257.8" rx="1.3" ry="1.0" fill="#86a8f0"/><path d="M764.6 266.2 V258.0" stroke="#18a070" stroke-width="1.7" stroke-linecap="round"/><path d="M778.2 266.2 V258.0" stroke="#18a070" stroke-width="1.7" stroke-linecap="round"/><path d="M814.7 263.9 V252.5" stroke="#0f8a5c" stroke-width="2.3" stroke-linecap="round"/><path d="M825.0 263.9 V252.5" stroke="#0f8a5c" stroke-width="2.3" stroke-linecap="round"/><ellipse cx="819.9" cy="260.9" rx="6.4" ry="5.2" fill="#94bbff"/><ellipse cx="819.5" cy="260.7" rx="3.8" ry="2.9" fill="#b6d0ff"/><ellipse cx="819.1" cy="261.2" rx="1.3" ry="1.0" fill="#86a8f0"/><path d="M813.1 269.6 V261.4" stroke="#18a070" stroke-width="1.7" stroke-linecap="round"/><path d="M826.6 269.6 V261.4" stroke="#18a070" stroke-width="1.7" stroke-linecap="round"/><path d="M781.4 265.0 V253.6" stroke="#0f8a5c" stroke-width="2.3" stroke-linecap="round"/><path d="M791.7 265.0 V253.6" stroke="#0f8a5c" stroke-width="2.3" stroke-linecap="round"/><ellipse cx="786.5" cy="262.0" rx="6.4" ry="5.2" fill="#94bbff"/><ellipse cx="786.1" cy="261.8" rx="3.8" ry="2.9" fill="#b6d0ff"/><ellipse cx="785.7" cy="262.3" rx="1.3" ry="1.0" fill="#86a8f0"/><path d="M779.7 270.7 V262.5" stroke="#18a070" stroke-width="1.7" stroke-linecap="round"/><path d="M793.3 270.7 V262.5" stroke="#18a070" stroke-width="1.7" stroke-linecap="round"/><path d="M798.2 266.2 V254.8" stroke="#0f8a5c" stroke-width="2.3" stroke-linecap="round"/><path d="M808.5 266.2 V254.8" stroke="#0f8a5c" stroke-width="2.3" stroke-linecap="round"/><ellipse cx="803.4" cy="263.2" rx="6.4" ry="5.2" fill="#94bbff"/><ellipse cx="803.0" cy="263.0" rx="3.8" ry="2.9" fill="#b6d0ff"/><ellipse cx="802.6" cy="263.5" rx="1.3" ry="1.0" fill="#86a8f0"/><path d="M796.6 271.9 V263.7" stroke="#18a070" stroke-width="1.7" stroke-linecap="round"/><path d="M810.1 271.9 V263.7" stroke="#18a070" stroke-width="1.7" stroke-linecap="round"/><g transform="rotate(-4 803.6 222)"><ellipse cx="803.6" cy="225" rx="22.5" ry="16" fill="#0c1f80"/><ellipse cx="803.6" cy="221.5" rx="22.3" ry="14.5" fill="#132ea6"/><ellipse cx="802" cy="219.5" rx="14" ry="8" fill="#1836b4"/><path d="M781.5 221 L790 211 L803 207.3 L817 210 L825.5 220 L818 231 L804 235.5 L790 232Z M790 211 L817 210 L818 231 L790 232Z M781.5 221 L804 235.5 L825.5 220" stroke="#3560ea" stroke-width="0.5" fill="none" opacity="0.7"/></g><path d="M784.5 220 V207" stroke="#0f8a5c" stroke-width="2.8" stroke-linecap="round"/><path d="M824 216 V202" stroke="#0f8a5c" stroke-width="2.8" stroke-linecap="round"/><path d="M810.5 240 V226" stroke="#0f8a5c" stroke-width="2.8" stroke-linecap="round"/><path d="M790 237 V227" stroke="#0f8a5c" stroke-width="2.8" stroke-linecap="round"/><path d="M815 206 C812 196,817 190,825 191 C832 192,833 199,831 207Z" fill="#0f8a5c"/><path d="M818.5 205 C817.5 198,821 194.5,826 196 M822 205 C821.5 200,824 197,828 198.5" stroke="#0a6e48" stroke-width="0.9" fill="none"/><text transform="translate(765.5,276.5) rotate(16)" font-size="6.6" fill="#0f8058">19.54</text><text transform="translate(863.8,272.5) rotate(-74)" font-size="7.8" fill="#0f8058">9.75</text><text transform="translate(872,248) rotate(-74)" font-size="5.5" fill="#0f8058">27.83</text><g transform="translate(915.5,137.5)"><ellipse rx="8.6" ry="9.6" fill="none" stroke="#e8a800" stroke-width="2" transform="rotate(-28)"/><ellipse cx="1.6" cy="0.8" rx="7.2" ry="8.6" fill="none" stroke="#f0b400" stroke-width="1.2" transform="rotate(-28)"/><ellipse cx="-1" cy="1.5" rx="8.2" ry="8.8" fill="none" stroke="#d89800" stroke-width="1" transform="rotate(-10)"/><ellipse cx="-3.2" cy="-10.2" rx="3.4" ry="2.1" fill="#3a68e0"/><ellipse cx="-3.2" cy="-11" rx="2.2" ry="1.1" fill="#8ab0ff"/></g></g><g clip-path="url(#c3)"><path d="M272 431 C278 449,314.6 461,334.5 465.90000000000003" stroke="#0a6e48" stroke-width="4.6" fill="none"/><path d="M305 431 C311 449,328.5 461,339.4 465.90000000000003" stroke="#0a6e48" stroke-width="4.6" fill="none"/><path d="M386 431 C380 449,362.5 461,351.6 465.90000000000003" stroke="#0a6e48" stroke-width="4.6" fill="none"/><path d="M419 431 C413 449,376.4 461,356.5 465.90000000000003" stroke="#0a6e48" stroke-width="4.6" fill="none"/><path d="M261 430 C266.1 450,303.2 462.5,335.4 465.90000000000003" stroke="#0f8a5c" stroke-width="5.2" fill="none" stroke-linecap="round"/><path d="M260 430 C265.1 450,302.2 461.5,334.4 465.3" stroke="#18a070" stroke-width="1" fill="none" opacity="0.5"/><path d="M279 430 C283.0 450,312.2 462.5,337.5 465.90000000000003" stroke="#0f8a5c" stroke-width="5.2" fill="none" stroke-linecap="round"/><path d="M278 430 C282.0 450,311.2 461.5,336.5 465.3" stroke="#18a070" stroke-width="1" fill="none" opacity="0.5"/><path d="M298 430 C300.9 450,321.8 462.5,339.8 465.90000000000003" stroke="#0f8a5c" stroke-width="5.2" fill="none" stroke-linecap="round"/><path d="M297 430 C299.9 450,320.8 461.5,338.8 465.3" stroke="#18a070" stroke-width="1" fill="none" opacity="0.5"/><path d="M318 430 C319.6 450,331.8 462.5,342.2 465.90000000000003" stroke="#0f8a5c" stroke-width="5.2" fill="none" stroke-linecap="round"/><path d="M317 430 C318.6 450,330.8 461.5,341.2 465.3" stroke="#18a070" stroke-width="1" fill="none" opacity="0.5"/><path d="M334 430 C334.7 450,339.8 462.5,344.1 465.90000000000003" stroke="#0f8a5c" stroke-width="5.2" fill="none" stroke-linecap="round"/><path d="M333 430 C333.7 450,338.8 461.5,343.1 465.3" stroke="#18a070" stroke-width="1" fill="none" opacity="0.5"/><path d="M357 430 C356.3 450,351.2 462.5,346.9 465.90000000000003" stroke="#0f8a5c" stroke-width="5.2" fill="none" stroke-linecap="round"/><path d="M356 430 C355.3 450,350.2 461.5,345.9 465.3" stroke="#18a070" stroke-width="1" fill="none" opacity="0.5"/><path d="M373 430 C371.4 450,359.2 462.5,348.8 465.90000000000003" stroke="#0f8a5c" stroke-width="5.2" fill="none" stroke-linecap="round"/><path d="M372 430 C370.4 450,358.2 461.5,347.8 465.3" stroke="#18a070" stroke-width="1" fill="none" opacity="0.5"/><path d="M393 430 C390.1 450,369.2 462.5,351.2 465.90000000000003" stroke="#0f8a5c" stroke-width="5.2" fill="none" stroke-linecap="round"/><path d="M392 430 C389.1 450,368.2 461.5,350.2 465.3" stroke="#18a070" stroke-width="1" fill="none" opacity="0.5"/><path d="M412 430 C408.0 450,378.8 462.5,353.5 465.90000000000003" stroke="#0f8a5c" stroke-width="5.2" fill="none" stroke-linecap="round"/><path d="M411 430 C407.0 450,377.8 461.5,352.5 465.3" stroke="#18a070" stroke-width="1" fill="none" opacity="0.5"/><path d="M430 430 C424.9 450,387.8 462.5,355.6 465.90000000000003" stroke="#0f8a5c" stroke-width="5.2" fill="none" stroke-linecap="round"/><path d="M429 430 C423.9 450,386.8 461.5,354.6 465.3" stroke="#18a070" stroke-width="1" fill="none" opacity="0.5"/><path d="M322 466.7 H369" stroke="#0f8a5c" stroke-width="3.2" stroke-linecap="round"/><path d="M333 433 H357 M337 433 C338 441,344 438,343.5 450 M353 433 C352 441,346 438,346.5 450 M340 450 H350 M345 436 V450" stroke="#18a070" stroke-width="1" fill="none"/><path d="M315 392.8 L322 380.4 H370 L377 392.8Z" fill="#1840c0"/><path d="M322 380.4 L330 392.8 L338 380.4 L346 392.8 L354 380.4 L362 392.8 L370 380.4 M318.5 386.5 H373.5" stroke="#3a68ee" stroke-width="0.5" fill="none"/><path d="M320.4 400 V373.1" stroke="#0f8a5c" stroke-width="6.6" stroke-linecap="round"/><circle cx="320.4" cy="372.8" r="4.09" fill="#0f8a5c"/><path d="M319.1 400 V372.0" stroke="#18a070" stroke-width="1.5" opacity="0.55"/><path d="M369.4 400 V373.1" stroke="#0f8a5c" stroke-width="6.6" stroke-linecap="round"/><circle cx="369.4" cy="372.8" r="4.09" fill="#0f8a5c"/><path d="M368.1 400 V372.0" stroke="#18a070" stroke-width="1.5" opacity="0.55"/><path d="M286 410 V395.2" stroke="#0f8a5c" stroke-width="4.2" stroke-linecap="round"/><circle cx="286" cy="395.0" r="2.60" fill="#0f8a5c"/><path d="M285.2 410 V395.0" stroke="#18a070" stroke-width="0.9" opacity="0.55"/><path d="M297 410 V391.2" stroke="#0a6e48" stroke-width="4.2" stroke-linecap="round"/><circle cx="297" cy="391.0" r="2.60" fill="#0a6e48"/><path d="M296.2 410 V391.0" stroke="#18a070" stroke-width="0.9" opacity="0.55"/><path d="M311 410 V391.2" stroke="#0f8a5c" stroke-width="4.2" stroke-linecap="round"/><circle cx="311" cy="391.0" r="2.60" fill="#0f8a5c"/><path d="M310.2 410 V391.0" stroke="#18a070" stroke-width="0.9" opacity="0.55"/><path d="M331 410 V391.2" stroke="#0f8a5c" stroke-width="4.2" stroke-linecap="round"/><circle cx="331" cy="391.0" r="2.60" fill="#0f8a5c"/><path d="M330.2 410 V391.0" stroke="#18a070" stroke-width="0.9" opacity="0.55"/><path d="M343 410 V391.2" stroke="#0f8a5c" stroke-width="4.2" stroke-linecap="round"/><circle cx="343" cy="391.0" r="2.60" fill="#0f8a5c"/><path d="M342.2 410 V391.0" stroke="#18a070" stroke-width="0.9" opacity="0.55"/><path d="M358 410 V391.2" stroke="#0f8a5c" stroke-width="4.2" stroke-linecap="round"/><circle cx="358" cy="391.0" r="2.60" fill="#0f8a5c"/><path d="M357.2 410 V391.0" stroke="#18a070" stroke-width="0.9" opacity="0.55"/><path d="M376 410 V391.2" stroke="#0f8a5c" stroke-width="4.2" stroke-linecap="round"/><circle cx="376" cy="391.0" r="2.60" fill="#0f8a5c"/><path d="M375.2 410 V391.0" stroke="#18a070" stroke-width="0.9" opacity="0.55"/><path d="M392 410 V391.2" stroke="#0a6e48" stroke-width="4.2" stroke-linecap="round"/><circle cx="392" cy="391.0" r="2.60" fill="#0a6e48"/><path d="M391.2 410 V391.0" stroke="#18a070" stroke-width="0.9" opacity="0.55"/><path d="M404 410 V395.2" stroke="#0f8a5c" stroke-width="4.2" stroke-linecap="round"/><circle cx="404" cy="395.0" r="2.60" fill="#0f8a5c"/><path d="M403.2 410 V395.0" stroke="#18a070" stroke-width="0.9" opacity="0.55"/><path d="M289.5 395.4 L293.5 392.8 H305.5 L309.5 395.4 L299.5 406.6Z" fill="#94bbff"/><path d="M289.5 395.4 L293.5 392.8 H305.5 L309.5 395.4Z" fill="#c4d8ff"/><path d="M293.9 395.4 L299.5 406.6 L305.1 395.4 M289.5 395.4 H309.5" stroke="#6f96e8" stroke-width="0.4" fill="none"/><path d="M314.0 394.6 L316.8 392.8 H325.2 L328.0 394.6 L321.0 402.5Z" fill="#94bbff"/><path d="M314.0 394.6 L316.8 392.8 H325.2 L328.0 394.6Z" fill="#c4d8ff"/><path d="M317.1 394.6 L321.0 402.5 L324.9 394.6 M314.0 394.6 H328.0" stroke="#6f96e8" stroke-width="0.4" fill="none"/><path d="M335.0 395.4 L339.0 392.8 H351.0 L355.0 395.4 L345.0 406.6Z" fill="#94bbff"/><path d="M335.0 395.4 L339.0 392.8 H351.0 L355.0 395.4Z" fill="#c4d8ff"/><path d="M339.4 395.4 L345.0 406.6 L350.6 395.4 M335.0 395.4 H355.0" stroke="#6f96e8" stroke-width="0.4" fill="none"/><path d="M360.2 394.6 L362.9 392.8 H371.1 L373.8 394.6 L367.0 402.1Z" fill="#94bbff"/><path d="M360.2 394.6 L362.9 392.8 H371.1 L373.8 394.6Z" fill="#c4d8ff"/><path d="M363.2 394.6 L367.0 402.1 L370.8 394.6 M360.2 394.6 H373.8" stroke="#6f96e8" stroke-width="0.4" fill="none"/><path d="M378.5 395.8 L383.1 392.8 H396.9 L401.5 395.8 L390.0 408.7Z" fill="#94bbff"/><path d="M378.5 395.8 L383.1 392.8 H396.9 L401.5 395.8Z" fill="#c4d8ff"/><path d="M383.6 395.8 L390.0 408.7 L396.4 395.8 M378.5 395.8 H401.5" stroke="#6f96e8" stroke-width="0.4" fill="none"/><path d="M291.5 412 V393.7" stroke="#0f8a5c" stroke-width="4.2" stroke-linecap="round"/><circle cx="291.5" cy="393.5" r="2.60" fill="#0f8a5c"/><path d="M290.7 412 V393.5" stroke="#18a070" stroke-width="0.9" opacity="0.55"/><path d="M305.5 412 V393.7" stroke="#0f8a5c" stroke-width="4.2" stroke-linecap="round"/><circle cx="305.5" cy="393.5" r="2.60" fill="#0f8a5c"/><path d="M304.7 412 V393.5" stroke="#18a070" stroke-width="0.9" opacity="0.55"/><path d="M315 412 V393.7" stroke="#0f8a5c" stroke-width="4.2" stroke-linecap="round"/><circle cx="315" cy="393.5" r="2.60" fill="#0f8a5c"/><path d="M314.2 412 V393.5" stroke="#18a070" stroke-width="0.9" opacity="0.55"/><path d="M326.5 412 V393.7" stroke="#0f8a5c" stroke-width="4.2" stroke-linecap="round"/><circle cx="326.5" cy="393.5" r="2.60" fill="#0f8a5c"/><path d="M325.7 412 V393.5" stroke="#18a070" stroke-width="0.9" opacity="0.55"/><path d="M337 412 V393.7" stroke="#0f8a5c" stroke-width="4.2" stroke-linecap="round"/><circle cx="337" cy="393.5" r="2.60" fill="#0f8a5c"/><path d="M336.2 412 V393.5" stroke="#18a070" stroke-width="0.9" opacity="0.55"/><path d="M352 412 V393.7" stroke="#0f8a5c" stroke-width="4.2" stroke-linecap="round"/><circle cx="352" cy="393.5" r="2.60" fill="#0f8a5c"/><path d="M351.2 412 V393.5" stroke="#18a070" stroke-width="0.9" opacity="0.55"/><path d="M362.5 412 V393.7" stroke="#0f8a5c" stroke-width="4.2" stroke-linecap="round"/><circle cx="362.5" cy="393.5" r="2.60" fill="#0f8a5c"/><path d="M361.7 412 V393.5" stroke="#18a070" stroke-width="0.9" opacity="0.55"/><path d="M372.5 412 V393.7" stroke="#0f8a5c" stroke-width="4.2" stroke-linecap="round"/><circle cx="372.5" cy="393.5" r="2.60" fill="#0f8a5c"/><path d="M371.7 412 V393.5" stroke="#18a070" stroke-width="0.9" opacity="0.55"/><path d="M383 412 V393.7" stroke="#0f8a5c" stroke-width="4.2" stroke-linecap="round"/><circle cx="383" cy="393.5" r="2.60" fill="#0f8a5c"/><path d="M382.2 412 V393.5" stroke="#18a070" stroke-width="0.9" opacity="0.55"/><path d="M397.5 412 V393.7" stroke="#0f8a5c" stroke-width="4.2" stroke-linecap="round"/><circle cx="397.5" cy="393.5" r="2.60" fill="#0f8a5c"/><path d="M396.7 412 V393.5" stroke="#18a070" stroke-width="0.9" opacity="0.55"/><path d="M283 405 H407 V411 H283Z" fill="#0a6e48"/><path d="M264 430 V406.2" stroke="#0a6e48" stroke-width="4.2" stroke-linecap="round"/><circle cx="264" cy="406.0" r="2.60" fill="#0a6e48"/><path d="M263.2 430 V406.0" stroke="#18a070" stroke-width="0.9" opacity="0.55"/><path d="M275 430 V406.2" stroke="#0a6e48" stroke-width="4.2" stroke-linecap="round"/><circle cx="275" cy="406.0" r="2.60" fill="#0a6e48"/><path d="M274.2 430 V406.0" stroke="#18a070" stroke-width="0.9" opacity="0.55"/><path d="M300 430 V406.2" stroke="#0a6e48" stroke-width="4.2" stroke-linecap="round"/><circle cx="300" cy="406.0" r="2.60" fill="#0a6e48"/><path d="M299.2 430 V406.0" stroke="#18a070" stroke-width="0.9" opacity="0.55"/><path d="M325 430 V406.2" stroke="#0a6e48" stroke-width="4.2" stroke-linecap="round"/><circle cx="325" cy="406.0" r="2.60" fill="#0a6e48"/><path d="M324.2 430 V406.0" stroke="#18a070" stroke-width="0.9" opacity="0.55"/><path d="M351 430 V406.2" stroke="#0a6e48" stroke-width="4.2" stroke-linecap="round"/><circle cx="351" cy="406.0" r="2.60" fill="#0a6e48"/><path d="M350.2 430 V406.0" stroke="#18a070" stroke-width="0.9" opacity="0.55"/><path d="M377 430 V406.2" stroke="#0a6e48" stroke-width="4.2" stroke-linecap="round"/><circle cx="377" cy="406.0" r="2.60" fill="#0a6e48"/><path d="M376.2 430 V406.0" stroke="#18a070" stroke-width="0.9" opacity="0.55"/><path d="M402 430 V406.2" stroke="#0a6e48" stroke-width="4.2" stroke-linecap="round"/><circle cx="402" cy="406.0" r="2.60" fill="#0a6e48"/><path d="M401.2 430 V406.0" stroke="#18a070" stroke-width="0.9" opacity="0.55"/><path d="M423 430 V406.2" stroke="#0a6e48" stroke-width="4.2" stroke-linecap="round"/><circle cx="423" cy="406.0" r="2.60" fill="#0a6e48"/><path d="M422.2 430 V406.0" stroke="#18a070" stroke-width="0.9" opacity="0.55"/><path d="M263.0 412.2 L266.0 410.3 H275.0 L278.0 412.2 L270.5 420.6Z" fill="#94bbff"/><path d="M263.0 412.2 L266.0 410.3 H275.0 L278.0 412.2Z" fill="#c4d8ff"/><path d="M266.3 412.2 L270.5 420.6 L274.7 412.2 M263.0 412.2 H278.0" stroke="#6f96e8" stroke-width="0.4" fill="none"/><path d="M279.0 412.8 L282.8 410.3 H294.2 L298.0 412.8 L288.5 423.4Z" fill="#94bbff"/><path d="M279.0 412.8 L282.8 410.3 H294.2 L298.0 412.8Z" fill="#c4d8ff"/><path d="M283.2 412.8 L288.5 423.4 L293.8 412.8 M279.0 412.8 H298.0" stroke="#6f96e8" stroke-width="0.4" fill="none"/><path d="M301.0 412.8 L304.8 410.3 H316.2 L320.0 412.8 L310.5 423.4Z" fill="#94bbff"/><path d="M301.0 412.8 L304.8 410.3 H316.2 L320.0 412.8Z" fill="#c4d8ff"/><path d="M305.2 412.8 L310.5 423.4 L315.8 412.8 M301.0 412.8 H320.0" stroke="#6f96e8" stroke-width="0.4" fill="none"/><path d="M326.5 413.0 L330.7 410.3 H343.3 L347.5 413.0 L337.0 424.8Z" fill="#94bbff"/><path d="M326.5 413.0 L330.7 410.3 H343.3 L347.5 413.0Z" fill="#c4d8ff"/><path d="M331.1 413.0 L337.0 424.8 L342.9 413.0 M326.5 413.0 H347.5" stroke="#6f96e8" stroke-width="0.4" fill="none"/><path d="M350.2 413.0 L354.4 410.3 H366.6 L370.8 413.0 L360.5 424.4Z" fill="#94bbff"/><path d="M350.2 413.0 L354.4 410.3 H366.6 L370.8 413.0Z" fill="#c4d8ff"/><path d="M354.8 413.0 L360.5 424.4 L366.2 413.0 M350.2 413.0 H370.8" stroke="#6f96e8" stroke-width="0.4" fill="none"/><path d="M374.2 412.7 L377.9 410.3 H389.1 L392.8 412.7 L383.5 423.1Z" fill="#94bbff"/><path d="M374.2 412.7 L377.9 410.3 H389.1 L392.8 412.7Z" fill="#c4d8ff"/><path d="M378.3 412.7 L383.5 423.1 L388.7 412.7 M374.2 412.7 H392.8" stroke="#6f96e8" stroke-width="0.4" fill="none"/><path d="M394.2 412.7 L397.9 410.3 H409.1 L412.8 412.7 L403.5 423.1Z" fill="#94bbff"/><path d="M394.2 412.7 L397.9 410.3 H409.1 L412.8 412.7Z" fill="#c4d8ff"/><path d="M398.3 412.7 L403.5 423.1 L408.7 412.7 M394.2 412.7 H412.8" stroke="#6f96e8" stroke-width="0.4" fill="none"/><path d="M414.0 412.0 L416.6 410.3 H424.4 L427.0 412.0 L420.5 419.3Z" fill="#94bbff"/><path d="M414.0 412.0 L416.6 410.3 H424.4 L427.0 412.0Z" fill="#c4d8ff"/><path d="M416.9 412.0 L420.5 419.3 L424.1 412.0 M414.0 412.0 H427.0" stroke="#6f96e8" stroke-width="0.4" fill="none"/><path d="M259.8 431 V409.5" stroke="#0f8a5c" stroke-width="4.9" stroke-linecap="round"/><circle cx="259.8" cy="409.2" r="3.04" fill="#0f8a5c"/><path d="M258.8 431 V409.0" stroke="#18a070" stroke-width="1.1" opacity="0.55"/><path d="M268 431 V408.0" stroke="#0f8a5c" stroke-width="4.9" stroke-linecap="round"/><circle cx="268" cy="407.7" r="3.04" fill="#0f8a5c"/><path d="M267.0 431 V407.5" stroke="#18a070" stroke-width="1.1" opacity="0.55"/><path d="M279.5 431 V408.0" stroke="#0f8a5c" stroke-width="4.9" stroke-linecap="round"/><circle cx="279.5" cy="407.7" r="3.04" fill="#0f8a5c"/><path d="M278.5 431 V407.5" stroke="#18a070" stroke-width="1.1" opacity="0.55"/><path d="M298.5 431 V408.0" stroke="#0f8a5c" stroke-width="4.9" stroke-linecap="round"/><circle cx="298.5" cy="407.7" r="3.04" fill="#0f8a5c"/><path d="M297.5 431 V407.5" stroke="#18a070" stroke-width="1.1" opacity="0.55"/><path d="M322 431 V408.0" stroke="#0f8a5c" stroke-width="4.9" stroke-linecap="round"/><circle cx="322" cy="407.7" r="3.04" fill="#0f8a5c"/><path d="M321.0 431 V407.5" stroke="#18a070" stroke-width="1.1" opacity="0.55"/><path d="M349 431 V408.0" stroke="#0f8a5c" stroke-width="4.9" stroke-linecap="round"/><circle cx="349" cy="407.7" r="3.04" fill="#0f8a5c"/><path d="M348.0 431 V407.5" stroke="#18a070" stroke-width="1.1" opacity="0.55"/><path d="M371.5 431 V408.0" stroke="#0f8a5c" stroke-width="4.9" stroke-linecap="round"/><circle cx="371.5" cy="407.7" r="3.04" fill="#0f8a5c"/><path d="M370.5 431 V407.5" stroke="#18a070" stroke-width="1.1" opacity="0.55"/><path d="M394 431 V408.0" stroke="#0f8a5c" stroke-width="4.9" stroke-linecap="round"/><circle cx="394" cy="407.7" r="3.04" fill="#0f8a5c"/><path d="M393.0 431 V407.5" stroke="#18a070" stroke-width="1.1" opacity="0.55"/><path d="M413 431 V408.0" stroke="#0f8a5c" stroke-width="4.9" stroke-linecap="round"/><circle cx="413" cy="407.7" r="3.04" fill="#0f8a5c"/><path d="M412.0 431 V407.5" stroke="#18a070" stroke-width="1.1" opacity="0.55"/><path d="M425.5 431 V408.0" stroke="#0f8a5c" stroke-width="4.9" stroke-linecap="round"/><circle cx="425.5" cy="407.7" r="3.04" fill="#0f8a5c"/><path d="M424.5 431 V407.5" stroke="#18a070" stroke-width="1.1" opacity="0.55"/><path d="M431 431 V409.5" stroke="#0f8a5c" stroke-width="4.9" stroke-linecap="round"/><circle cx="431" cy="409.2" r="3.04" fill="#0f8a5c"/><path d="M430.0 431 V409.0" stroke="#18a070" stroke-width="1.1" opacity="0.55"/><path d="M282.0 424.5 H295.0 V431 H282.0Z" fill="#0f8a5c"/><path d="M304.0 424.5 H317.0 V431 H304.0Z" fill="#0f8a5c"/><path d="M330.5 424.5 H343.5 V431 H330.5Z" fill="#0f8a5c"/><path d="M354.0 424.5 H367.0 V431 H354.0Z" fill="#0f8a5c"/><path d="M377.0 424.5 H390.0 V431 H377.0Z" fill="#0f8a5c"/><path d="M397.0 424.5 H410.0 V431 H397.0Z" fill="#0f8a5c"/><path d="M258 428.6 H433 V432.4 H258Z" fill="#0f8a5c"/><path d="M374.8 380.6 H458 M315 468.3 H458 M453.3 380.6 V468.3" stroke="#0f8058" stroke-width="0.8" fill="none"/><path d="M453.3 380.6 l-2.2 6.5 h4.4Z M453.3 468.3 l-2.2 -6.5 h4.4Z" fill="#0f8058"/><text transform="translate(452,436.2) rotate(-90)" font-size="12.8" fill="#0f8058">9.75</text><path d="M217.4 497.9 V482.4" stroke="#d89a10" stroke-width="0.8"/><path d="M217.4 497.9 H234.4" stroke="#a01818" stroke-width="0.8"/><text x="219.70000000000002" y="483.7" font-size="7" font-weight="bold" fill="#d89a10">z</text><text x="235.4" y="499.7" font-size="7" font-weight="bold" fill="#a01818">x</text></g><g clip-path="url(#c4)"><path d="M708 413.2 H937" stroke="#0f8a5c" stroke-width="2.3"/><path d="M708 413.2 H937" stroke="#06583a" stroke-width="0.7" stroke-dasharray="0.8 1.4"/><ellipse cx="701" cy="413.2" rx="6.3" ry="4.3" fill="none" stroke="#0f8a5c" stroke-width="2.2"/><path d="M652 410 H693 C690 418,682 421.5,672 421.5 C662 421.5,655 418,652 410Z" fill="#0a6e48"/><path d="M655 420 L659.2 410" stroke="#0f8a5c" stroke-width="1"/><path d="M659 420 L662.2 410" stroke="#0f8a5c" stroke-width="1"/><path d="M663 420 L665.2 410" stroke="#0f8a5c" stroke-width="1"/><path d="M667 420 L668.2 410" stroke="#0f8a5c" stroke-width="1"/><path d="M671 420 L671.2 410" stroke="#0f8a5c" stroke-width="1"/><path d="M675 420 L674.2 410" stroke="#0f8a5c" stroke-width="1"/><path d="M679 420 L677.2 410" stroke="#0f8a5c" stroke-width="1"/><path d="M683 420 L680.2 410" stroke="#0f8a5c" stroke-width="1"/><path d="M687 420 L683.2 410" stroke="#0f8a5c" stroke-width="1"/><path d="M691 420 L686.2 410" stroke="#0f8a5c" stroke-width="1"/><path d="M652 404 H693 V411 H652Z" fill="#0f8a5c"/><rect x="654" y="405.3" width="3" height="2" fill="#94bbff"/><rect x="655" y="408.5" width="3" height="1.8" fill="#6ad0d8"/><rect x="659" y="405.3" width="3" height="2" fill="#94bbff"/><rect x="660" y="408.5" width="3" height="1.8" fill="#6ad0d8"/><rect x="664" y="405.3" width="3" height="2" fill="#94bbff"/><rect x="665" y="408.5" width="3" height="1.8" fill="#6ad0d8"/><rect x="669" y="405.3" width="3" height="2" fill="#94bbff"/><rect x="670" y="408.5" width="3" height="1.8" fill="#6ad0d8"/><rect x="674" y="405.3" width="3" height="2" fill="#94bbff"/><rect x="675" y="408.5" width="3" height="1.8" fill="#6ad0d8"/><rect x="679" y="405.3" width="3" height="2" fill="#94bbff"/><rect x="680" y="408.5" width="3" height="1.8" fill="#6ad0d8"/><rect x="684" y="405.3" width="3" height="2" fill="#94bbff"/><rect x="685" y="408.5" width="3" height="1.8" fill="#6ad0d8"/><rect x="689" y="405.3" width="3" height="2" fill="#94bbff"/><rect x="690" y="408.5" width="3" height="1.8" fill="#6ad0d8"/><path d="M664 399.5 V404 M681 399.5 V404" stroke="#0f8a5c" stroke-width="1.2"/><rect x="665" y="400.8" width="15" height="2.6" fill="#2a52e0"/><path d="M587.8 498 V482.5" stroke="#d89a10" stroke-width="0.8"/><path d="M587.8 498 H604.8" stroke="#18a0b0" stroke-width="0.8"/><text x="590.0999999999999" y="483.8" font-size="7" font-weight="bold" fill="#d89a10">z</text><text x="605.8" y="499.8" font-size="7" font-weight="bold" fill="#18a0b0">y</text><g transform="translate(914.5,335)"><path d="M-2.5 -7 H2.5 L3.2 -3 L1.8 10 L0 14 L-1.8 10 L-3.2 -3Z" fill="none" stroke="#e8a800" stroke-width="1.2"/><path d="M0 -3 V10" stroke="#e8a800" stroke-width="0.6"/><ellipse cy="-10.5" rx="4.6" ry="2.2" fill="#2a58d8"/><ellipse cy="-11" rx="3" ry="1.1" fill="#80a8ff"/></g></g><rect x="566.6" y="117" width="1.4" height="400" fill="#c4c8ca"/><rect x="198" y="314.5" width="739" height="1.4" fill="#c4c8ca"/><rect x="198" y="117" width="17" height="9.5" fill="#c3cad2"/><rect x="215.5" y="117" width="8" height="9.5" fill="#d3d9de"/><path d="M217.5 120.5 h4 l-2 3Z" fill="#333"/><text x="201.3" y="124" font-size="6.6" fill="#7a8088">Top</text><rect x="198" y="316" width="24" height="9.5" fill="#c3cad2"/><rect x="222.5" y="316" width="8" height="9.5" fill="#d3d9de"/><path d="M224.5 319.5 h4 l-2 3Z" fill="#333"/><text x="201.3" y="323" font-size="6.6" fill="#7a8088">Front</text><rect x="568.5" y="117" width="39.5" height="10" fill="#8fc196"/><rect x="608.5" y="117" width="6.5" height="10" fill="#8fc196"/><path d="M608.3 117.5 V126.5" stroke="#222" stroke-width="0.6"/><path d="M609.8 120.8 h4 l-2 3Z" fill="#222"/><text x="572" y="124.5" font-size="6.8" letter-spacing="-0.2" fill="#1c3a22">Perspective</text></svg>
<!--STATUS-->
<!--RIGHTPANEL-->
</div>
<div class="a" style="left:0;top:0;width:1024px;height:576px;pointer-events:none"><span class="a" style="left:937px;top:104px;width:87px;height:450px;background:#d9e0e3"></span>
<span class="a" style="left:941.3px;top:117.8px;width:79px;height:401.5px;background:#fff;border:0.7px solid #7d8589"></span>
<svg style="left:940px;top:105px" width="84" height="14" viewBox="940 105 84 14"><path d="M955.5 118.3 L961 109.5 Q961.8 108 963.5 108 H970 Q972 108 973 109.7 L978.5 118.3 M970.5 118.3 L976 109.5 Q976.8 108 978.5 108 H985.5 Q987.5 108 988.5 109.7 L994 118.3 M986 118.3 L991.5 109.5 Q992.3 108 994 108 H1001 Q1003 108 1004 109.7 L1009.5 118.3" fill="#d9e0e3" stroke="#7d8589" stroke-width="0.6"/><path d="M941.6 118.6 V110 Q941.6 108 943.6 108 H953 Q955 108 956 109.7 L961.5 118.6Z" fill="#fff" stroke="#7d8589" stroke-width="0.6"/><path d="M942 118.6 H961" stroke="#fff" stroke-width="1"/><path d="M948.5 113.3 L952.10 113.30 A3.6 3.6 0 0 1 950.30 116.42Z" fill="#e83030"/><path d="M948.5 113.3 L950.30 116.42 A3.6 3.6 0 0 1 946.70 116.42Z" fill="#e8d020"/><path d="M948.5 113.3 L946.70 116.42 A3.6 3.6 0 0 1 944.90 113.30Z" fill="#30c040"/><path d="M948.5 113.3 L944.90 113.30 A3.6 3.6 0 0 1 946.70 110.18Z" fill="#20c0d0"/><path d="M948.5 113.3 L946.70 110.18 A3.6 3.6 0 0 1 950.30 110.18Z" fill="#3050e0"/><path d="M948.5 113.3 L950.30 110.18 A3.6 3.6 0 0 1 952.10 113.30Z" fill="#d030c0"/><circle cx="948.5" cy="113.3" r="1.7" fill="#fff"/><circle cx="948.5" cy="113.3" r="3.8" fill="none" stroke="#222" stroke-width="0.6"/><path d="M959.5 109.5 L967 110.5 L969 113.5 L963 117 L959.5 114Z" fill="#d83020"/><path d="M959.5 113 L963 116 L969 113 V114.5 L963 117.8 L959.5 114.5Z" fill="#3a60d0"/><rect x="977" y="109.3" width="8" height="6" fill="#444" stroke="#222" stroke-width="0.5"/><rect x="979.5" y="116" width="3" height="1.2" fill="#444"/><rect x="992" y="109.3" width="8.5" height="7" fill="#4a6ad8" stroke="#223a90" stroke-width="0.5"/><circle cx="996.3" cy="113" r="2" fill="#9ab4ff"/><circle cx="1015.5" cy="113" r="2.6" fill="none" stroke="#b4babd" stroke-width="0.7"/><circle cx="1015.5" cy="113" r="0.9" fill="none" stroke="#b4babd" stroke-width="0.5"/></svg>
<span class="t" style="left:945.3px;top:125.8px;font-size:6.3px;color:#222;letter-spacing:-0.22px">Viewport</span>
<span class="a" style="left:943.8px;top:134.9px;width:36px;height:10.2px;border-top:0.5px solid #e4e4e4;border-right:0.5px solid #e4e4e4"></span>
<span class="a" style="left:979.8px;top:134.9px;width:36.5px;height:10.2px;border-top:0.5px solid #e4e4e4"></span>
<span class="t" style="left:949.8px;top:136.8px;font-size:6.3px;color:#222;letter-spacing:-0.22px">Title</span>
<span class="t" style="left:982.3px;top:136.8px;font-size:6.3px;color:#222;letter-spacing:-0.22px">Perspective</span>
<span class="a" style="left:943.8px;top:144.9px;width:36px;height:10.2px;border-top:0.5px solid #e4e4e4;border-right:0.5px solid #e4e4e4"></span>
<span class="a" style="left:979.8px;top:144.9px;width:36.5px;height:10.2px;border-top:0.5px solid #e4e4e4"></span>
<span class="t" style="left:949.8px;top:146.8px;font-size:6.3px;color:#222;letter-spacing:-0.22px">Width</span>
<span class="t" style="left:982.3px;top:146.8px;font-size:6.3px;color:#222;letter-spacing:-0.22px">691</span>
<span class="a" style="left:943.8px;top:155.20000000000002px;width:36px;height:10.2px;border-top:0.5px solid #e4e4e4;border-right:0.5px solid #e4e4e4"></span>
<span class="a" style="left:979.8px;top:155.20000000000002px;width:36.5px;height:10.2px;border-top:0.5px solid #e4e4e4"></span>
<span class="t" style="left:949.8px;top:157.10000000000002px;font-size:6.3px;color:#222;letter-spacing:-0.22px">Height</span>
<span class="t" style="left:982.3px;top:157.10000000000002px;font-size:6.3px;color:#222;letter-spacing:-0.22px">369</span>
<span class="a" style="left:943.8px;top:165.4px;width:36px;height:10.2px;border-top:0.5px solid #e4e4e4;border-right:0.5px solid #e4e4e4"></span>
<span class="a" style="left:979.8px;top:165.4px;width:36.5px;height:10.2px;border-top:0.5px solid #e4e4e4"></span>
<span class="t" style="left:949.8px;top:167.3px;font-size:6.3px;color:#222;letter-spacing:-0.22px">Projection</span>
<span class="t" style="left:982.3px;top:167.3px;font-size:6.3px;color:#222;letter-spacing:-0.22px">Perspe...</span>
<span class="a" style="left:1007px;top:166.0px;width:9px;height:9px;background:#e1e1e1;border:0.5px solid #adadad"></span>
<svg style="left:1009.2px;top:169.3px" width="5" height="3" viewBox="0 0 5 3"><path d="M0.5 0.4 L2.5 2.4 L4.5 0.4" stroke="#444" stroke-width="0.6" fill="none"/></svg>
<span class="t" style="left:945.3px;top:178.8px;font-size:6.3px;color:#222;letter-spacing:-0.22px">Camera</span>
<span class="a" style="left:943.8px;top:187.9px;width:36px;height:10.2px;border-top:0.5px solid #e4e4e4;border-right:0.5px solid #e4e4e4"></span>
<span class="a" style="left:979.8px;top:187.9px;width:36.5px;height:10.2px;border-top:0.5px solid #e4e4e4"></span>
<span class="t" style="left:949.8px;top:189.8px;font-size:6.3px;color:#222;letter-spacing:-0.22px">Lens Len...</span>
<span class="t" style="left:982.3px;top:189.8px;font-size:6.3px;color:#222;letter-spacing:-0.22px">50.0</span>
<span class="a" style="left:943.8px;top:197.9px;width:36px;height:10.2px;border-top:0.5px solid #e4e4e4;border-right:0.5px solid #e4e4e4"></span>
<span class="a" style="left:979.8px;top:197.9px;width:36.5px;height:10.2px;border-top:0.5px solid #e4e4e4"></span>
<span class="t" style="left:949.8px;top:199.8px;font-size:6.3px;color:#222;letter-spacing:-0.22px">Rotation</span>
<span class="t" style="left:982.3px;top:199.8px;font-size:6.3px;color:#222;letter-spacing:-0.22px">0.0</span>
<span class="a" style="left:943.8px;top:208.1px;width:36px;height:10.2px;border-top:0.5px solid #e4e4e4;border-right:0.5px solid #e4e4e4"></span>
<span class="a" style="left:979.8px;top:208.1px;width:36.5px;height:10.2px;border-top:0.5px solid #e4e4e4"></span>
<span class="t" style="left:949.8px;top:210.0px;font-size:6.3px;color:#222;letter-spacing:-0.22px">X Location</span>
<span class="t" style="left:982.3px;top:210.0px;font-size:6.3px;color:#222;letter-spacing:-0.22px">31.498</span>
<span class="a" style="left:943.8px;top:218.3px;width:36px;height:10.2px;border-top:0.5px solid #e4e4e4;border-right:0.5px solid #e4e4e4"></span>
<span class="a" style="left:979.8px;top:218.3px;width:36.5px;height:10.2px;border-top:0.5px solid #e4e4e4"></span>
<span class="t" style="left:949.8px;top:220.20000000000002px;font-size:6.3px;color:#222;letter-spacing:-0.22px">Y Location</span>
<span class="t" style="left:982.3px;top:220.20000000000002px;font-size:6.3px;color:#222;letter-spacing:-0.22px">-44.964</span>
<span class="a" style="left:943.8px;top:228.4px;width:36px;height:10.2px;border-top:0.5px solid #e4e4e4;border-right:0.5px solid #e4e4e4"></span>
<span class="a" style="left:979.8px;top:228.4px;width:36.5px;height:10.2px;border-top:0.5px solid #e4e4e4"></span>
<span class="t" style="left:949.8px;top:230.3px;font-size:6.3px;color:#222;letter-spacing:-0.22px">Z Location</span>
<span class="t" style="left:982.3px;top:230.3px;font-size:6.3px;color:#222;letter-spacing:-0.22px">40.554</span>
<span class="a" style="left:943.8px;top:238.6px;width:36px;height:10.2px;border-top:0.5px solid #e4e4e4;border-right:0.5px solid #e4e4e4"></span>
<span class="a" style="left:979.8px;top:238.6px;width:36.5px;height:10.2px;border-top:0.5px solid #e4e4e4"></span>
<span class="t" style="left:949.8px;top:240.5px;font-size:6.3px;color:#222;letter-spacing:-0.22px">Location</span>
<span class="a" style="left:981px;top:239.39999999999998px;width:35px;height:8.3px;background:#e1e1e1;border:0.6px solid #adadad"></span>
<span class="t" style="left:989.5px;top:240.5px;font-size:6.3px;color:#222;letter-spacing:-0.22px">Place...</span>
<span class="t" style="left:945.3px;top:251.8px;font-size:6.3px;color:#222;letter-spacing:-0.22px">Target</span>
<span class="a" style="left:943.8px;top:260.9px;width:36px;height:10.2px;border-top:0.5px solid #e4e4e4;border-right:0.5px solid #e4e4e4"></span>
<span class="a" style="left:979.8px;top:260.9px;width:36.5px;height:10.2px;border-top:0.5px solid #e4e4e4"></span>
<span class="t" style="left:949.8px;top:262.8px;font-size:6.3px;color:#222;letter-spacing:-0.22px">X Target</span>
<span class="t" style="left:982.3px;top:262.8px;font-size:6.3px;color:#222;letter-spacing:-0.22px">3.784</span>
<span class="a" style="left:943.8px;top:270.9px;width:36px;height:10.2px;border-top:0.5px solid #e4e4e4;border-right:0.5px solid #e4e4e4"></span>
<span class="a" style="left:979.8px;top:270.9px;width:36.5px;height:10.2px;border-top:0.5px solid #e4e4e4"></span>
<span class="t" style="left:949.8px;top:272.8px;font-size:6.3px;color:#222;letter-spacing:-0.22px">Y Target</span>
<span class="t" style="left:982.3px;top:272.8px;font-size:6.3px;color:#222;letter-spacing:-0.22px">15.569</span>
<span class="a" style="left:943.8px;top:281.09999999999997px;width:36px;height:10.2px;border-top:0.5px solid #e4e4e4;border-right:0.5px solid #e4e4e4"></span>
<span class="a" style="left:979.8px;top:281.09999999999997px;width:36.5px;height:10.2px;border-top:0.5px solid #e4e4e4"></span>
<span class="t" style="left:949.8px;top:283.0px;font-size:6.3px;color:#222;letter-spacing:-0.22px">Z Target</span>
<span class="t" style="left:982.3px;top:283.0px;font-size:6.3px;color:#222;letter-spacing:-0.22px">0.709</span>
<span class="a" style="left:943.8px;top:291.4px;width:36px;height:10.2px;border-top:0.5px solid #e4e4e4;border-right:0.5px solid #e4e4e4"></span>
<span class="a" style="left:979.8px;top:291.4px;width:36.5px;height:10.2px;border-top:0.5px solid #e4e4e4"></span>
<span class="t" style="left:949.8px;top:293.3px;font-size:6.3px;color:#222;letter-spacing:-0.22px">Location</span>
<span class="a" style="left:981px;top:292.2px;width:35px;height:8.3px;background:#e1e1e1;border:0.6px solid #adadad"></span>
<span class="t" style="left:989.5px;top:293.3px;font-size:6.3px;color:#222;letter-spacing:-0.22px">Place...</span>
<span class="t" style="left:945.3px;top:304.5px;font-size:6.3px;color:#222;letter-spacing:-0.22px">Wallpaper</span>
<span class="a" style="left:943.8px;top:313.59999999999997px;width:36px;height:10.2px;border-top:0.5px solid #e4e4e4;border-right:0.5px solid #e4e4e4"></span>
<span class="a" style="left:979.8px;top:313.59999999999997px;width:36.5px;height:10.2px;border-top:0.5px solid #e4e4e4"></span>
<span class="t" style="left:949.8px;top:315.5px;font-size:6.3px;color:#222;letter-spacing:-0.22px">Filename</span>
<span class="t" style="left:982.3px;top:315.5px;font-size:6.3px;color:#222;letter-spacing:-0.22px">(none)</span>
<span class="a" style="left:1009.3px;top:314.2px;width:7px;height:9px;background:#e1e1e1;border:0.5px solid #adadad"></span>
<span class="t" style="left:1010.8px;top:316.0px;font-size:5px;color:#444;letter-spacing:-0.2px">...</span>
<span class="a" style="left:943.8px;top:323.7px;width:36px;height:10.2px;border-top:0.5px solid #e4e4e4;border-right:0.5px solid #e4e4e4"></span>
<span class="a" style="left:979.8px;top:323.7px;width:36.5px;height:10.2px;border-top:0.5px solid #e4e4e4"></span>
<span class="t" style="left:949.8px;top:325.6px;font-size:6.3px;color:#222;letter-spacing:-0.22px">Show</span>
<span class="a" style="left:982px;top:325.40000000000003px;width:6.6px;height:6.6px;background:#fff;border:0.6px solid #333"></span>
<svg style="left:983px;top:326.40000000000003px" width="5" height="5" viewBox="0 0 5 5"><path d="M0.6 2.5 L1.9 3.9 L4.4 0.8" stroke="#222" stroke-width="0.7" fill="none"/></svg>
<span class="a" style="left:943.8px;top:333.9px;width:36px;height:10.2px;border-top:0.5px solid #e4e4e4;border-right:0.5px solid #e4e4e4"></span>
<span class="a" style="left:979.8px;top:333.9px;width:36.5px;height:10.2px;border-top:0.5px solid #e4e4e4"></span>
<span class="t" style="left:949.8px;top:335.8px;font-size:6.3px;color:#222;letter-spacing:-0.22px">Gray</span>
<span class="a" style="left:982px;top:335.6px;width:6.6px;height:6.6px;background:#fff;border:0.6px solid #333"></span>
<svg style="left:983px;top:336.6px" width="5" height="5" viewBox="0 0 5 5"><path d="M0.6 2.5 L1.9 3.9 L4.4 0.8" stroke="#222" stroke-width="0.7" fill="none"/></svg>
<span class="a" style="left:943.8px;top:344.1px;width:72.5px;height:0.5px;background:#e4e4e4"></span><span class="a" style="left:1021px;top:23px;width:3px;height:531px;background:linear-gradient(90deg,#c4c6c7,#a4a6a7)"></span>
<span class="a" style="left:160px;top:551.8px;width:864px;height:2.6px;background:linear-gradient(#c0c2c3,#9c9e9f)"></span>
<span class="a" style="left:166px;top:523.8px;width:6.8px;height:6.8px;background:#fff;border:0.6px solid #333"></span>
<svg style="left:166.9px;top:524.8px" width="5" height="5" viewBox="0 0 5 5"><path d="M0.6 2.5 L1.9 3.9 L4.4 0.8" stroke="#222" stroke-width="0.7" fill="none"/></svg>
<span class="t" style="left:175.5px;top:524.3px;font-size:6.2px;letter-spacing:-0.2px;color:#222">End</span>
<span class="a" style="left:191px;top:523.8px;width:6.8px;height:6.8px;background:#fff;border:0.6px solid #333"></span>
<span class="t" style="left:200.5px;top:524.3px;font-size:6.2px;letter-spacing:-0.2px;color:#222">Near</span>
<span class="a" style="left:216px;top:523.8px;width:6.8px;height:6.8px;background:#fff;border:0.6px solid #333"></span>
<span class="t" style="left:225.5px;top:524.3px;font-size:6.2px;letter-spacing:-0.2px;color:#222">Point</span>
<span class="a" style="left:243px;top:523.8px;width:6.8px;height:6.8px;background:#fff;border:0.6px solid #333"></span>
<svg style="left:243.9px;top:524.8px" width="5" height="5" viewBox="0 0 5 5"><path d="M0.6 2.5 L1.9 3.9 L4.4 0.8" stroke="#222" stroke-width="0.7" fill="none"/></svg>
<span class="t" style="left:252.5px;top:524.3px;font-size:6.2px;letter-spacing:-0.2px;color:#222">Mid</span>
<span class="a" style="left:265px;top:523.8px;width:6.8px;height:6.8px;background:#fff;border:0.6px solid #333"></span>
<span class="t" style="left:274.5px;top:524.3px;font-size:6.2px;letter-spacing:-0.2px;color:#222">Cen</span>
<span class="a" style="left:288.5px;top:523.8px;width:6.8px;height:6.8px;background:#fff;border:0.6px solid #333"></span>
<span class="t" style="left:298.0px;top:524.3px;font-size:6.2px;letter-spacing:-0.2px;color:#222">Int</span>
<span class="a" style="left:308.5px;top:523.8px;width:6.8px;height:6.8px;background:#fff;border:0.6px solid #333"></span>
<span class="t" style="left:318.0px;top:524.3px;font-size:6.2px;letter-spacing:-0.2px;color:#222">Perp</span>
<span class="a" style="left:333.5px;top:523.8px;width:6.8px;height:6.8px;background:#fff;border:0.6px solid #333"></span>
<span class="t" style="left:343.0px;top:524.3px;font-size:6.2px;letter-spacing:-0.2px;color:#222">Tan</span>
<span class="a" style="left:357px;top:523.8px;width:6.8px;height:6.8px;background:#fff;border:0.6px solid #333"></span>
<span class="t" style="left:366.5px;top:524.3px;font-size:6.2px;letter-spacing:-0.2px;color:#222">Quad</span>
<span class="a" style="left:383.5px;top:523.8px;width:6.8px;height:6.8px;background:#fff;border:0.6px solid #333"></span>
<span class="t" style="left:393.0px;top:524.3px;font-size:6.2px;letter-spacing:-0.2px;color:#222">Knot</span>
<span class="a" style="left:408.5px;top:523.8px;width:6.8px;height:6.8px;background:#fff;border:0.6px solid #333"></span>
<span class="t" style="left:418.0px;top:524.3px;font-size:6.2px;letter-spacing:-0.2px;color:#222">Vertex</span>
<span class="a" style="left:438px;top:523.8px;width:6.8px;height:6.8px;background:#e6e9ea;border:0.6px solid #b8bcbe"></span>
<span class="t" style="left:447.5px;top:524.3px;font-size:6.2px;letter-spacing:-0.2px;color:#3a3a3a">Project</span>
<span class="a" style="left:467px;top:523.8px;width:6.8px;height:6.8px;background:#e6e9ea;border:0.6px solid #b8bcbe"></span>
<span class="t" style="left:476.5px;top:524.3px;font-size:6.2px;letter-spacing:-0.2px;color:#3a3a3a">Disable</span>
<span class="a" style="left:163.5px;top:539.8px;width:857.5px;height:0.6px;background:#a8aeb1"></span>
<span class="a" style="left:164.5px;top:540.7px;width:28.0px;height:11.2px;border-left:0.7px solid #9aa0a3;border-right:0.7px solid #f4f6f7;border-top:0.6px solid #a4aaad;border-bottom:0.6px solid #eef1f2;background:#d9e0e3"></span>
<span class="t" style="left:164.5px;top:543.8px;width:28.0px;text-align:center;font-size:7.1px;letter-spacing:-0.1px;color:#222;">CPlane</span>
<span class="a" style="left:194px;top:540.7px;width:46px;height:11.2px;border-left:0.7px solid #9aa0a3;border-right:0.7px solid #f4f6f7;border-top:0.6px solid #a4aaad;border-bottom:0.6px solid #eef1f2;background:#d9e0e3"></span>
<span class="t" style="left:194px;top:543.8px;width:46px;text-align:center;font-size:7.1px;letter-spacing:-0.1px;color:#222;">x 28.080</span>
<span class="a" style="left:241px;top:540.7px;width:46px;height:11.2px;border-left:0.7px solid #9aa0a3;border-right:0.7px solid #f4f6f7;border-top:0.6px solid #a4aaad;border-bottom:0.6px solid #eef1f2;background:#d9e0e3"></span>
<span class="t" style="left:241px;top:543.8px;width:46px;text-align:center;font-size:7.1px;letter-spacing:-0.1px;color:#222;">y 17.188</span>
<span class="a" style="left:288px;top:540.7px;width:45.5px;height:11.2px;border-left:0.7px solid #9aa0a3;border-right:0.7px solid #f4f6f7;border-top:0.6px solid #a4aaad;border-bottom:0.6px solid #eef1f2;background:#d9e0e3"></span>
<span class="t" style="left:288px;top:543.8px;width:45.5px;text-align:center;font-size:7.1px;letter-spacing:-0.1px;color:#222;">z 0.000</span>
<span class="a" style="left:335px;top:540.7px;width:45px;height:11.2px;border-left:0.7px solid #9aa0a3;border-right:0.7px solid #f4f6f7;border-top:0.6px solid #a4aaad;border-bottom:0.6px solid #eef1f2;background:#d9e0e3"></span>
<span class="t" style="left:335px;top:543.8px;width:45px;text-align:center;font-size:7.1px;letter-spacing:-0.1px;color:#222;">Millimeters</span>
<span class="a" style="left:381.5px;top:540.7px;width:92.5px;height:11.2px;border-left:0.7px solid #9aa0a3;border-right:0.7px solid #f4f6f7;border-top:0.6px solid #a4aaad;border-bottom:0.6px solid #eef1f2;background:#d9e0e3"></span>
<span class="a" style="left:383.0px;top:543.2px;width:6.5px;height:6.5px;background:#0c8a50;border:0.7px solid #0a4a2c"></span>
<span class="t" style="left:390.8px;top:543.8px;font-size:7.1px;letter-spacing:-0.1px;color:#222;">Metal 01</span>
<span class="a" style="left:476px;top:540.7px;width:35px;height:11.2px;border-left:0.7px solid #9aa0a3;border-right:0.7px solid #f4f6f7;border-top:0.6px solid #a4aaad;border-bottom:0.6px solid #eef1f2;background:#d9e0e3"></span>
<span class="t" style="left:476px;top:543.8px;width:35px;text-align:center;font-size:7.1px;letter-spacing:-0.1px;color:#222;">Grid Snap</span>
<span class="a" style="left:512px;top:540.7px;width:28px;height:11.2px;border-left:0.7px solid #9aa0a3;border-right:0.7px solid #f4f6f7;border-top:0.6px solid #a4aaad;border-bottom:0.6px solid #eef1f2;background:#d9e0e3"></span>
<span class="t" style="left:512px;top:543.8px;width:28px;text-align:center;font-size:7.1px;letter-spacing:-0.1px;color:#222;">Ortho</span>
<span class="a" style="left:541px;top:540.7px;width:26px;height:11.2px;border-left:0.7px solid #9aa0a3;border-right:0.7px solid #f4f6f7;border-top:0.6px solid #a4aaad;border-bottom:0.6px solid #eef1f2;background:#d9e0e3"></span>
<span class="t" style="left:541px;top:543.8px;width:26px;text-align:center;font-size:7.1px;letter-spacing:-0.1px;color:#222;">Planar</span>
<span class="a" style="left:568px;top:540.7px;width:30px;height:11.2px;border-left:0.7px solid #9aa0a3;border-right:0.7px solid #f4f6f7;border-top:0.6px solid #a4aaad;border-bottom:0.6px solid #eef1f2;background:#d9e0e3"></span>
<span class="t" style="left:568px;top:543.8px;width:30px;text-align:center;font-size:7.1px;letter-spacing:-0.1px;color:#222;font-weight:bold;">Osnap</span>
<span class="a" style="left:599.5px;top:540.7px;width:41.0px;height:11.2px;border-left:0.7px solid #9aa0a3;border-right:0.7px solid #f4f6f7;border-top:0.6px solid #a4aaad;border-bottom:0.6px solid #eef1f2;background:#d9e0e3"></span>
<span class="t" style="left:599.5px;top:543.8px;width:41.0px;text-align:center;font-size:7.1px;letter-spacing:-0.1px;color:#222;">SmartTrack</span>
<span class="a" style="left:642px;top:540.7px;width:36px;height:11.2px;border-left:0.7px solid #9aa0a3;border-right:0.7px solid #f4f6f7;border-top:0.6px solid #a4aaad;border-bottom:0.6px solid #eef1f2;background:#d9e0e3"></span>
<span class="t" style="left:642px;top:543.8px;width:36px;text-align:center;font-size:7.1px;letter-spacing:-0.1px;color:#222;font-weight:bold;">Gumball</span>
<span class="a" style="left:679.5px;top:540.7px;width:54.5px;height:11.2px;border-left:0.7px solid #9aa0a3;border-right:0.7px solid #f4f6f7;border-top:0.6px solid #a4aaad;border-bottom:0.6px solid #eef1f2;background:#d9e0e3"></span>
<span class="t" style="left:679.5px;top:543.8px;width:54.5px;text-align:center;font-size:7.1px;letter-spacing:-0.1px;color:#222;">Record History</span>
<span class="a" style="left:735.5px;top:540.7px;width:24.0px;height:11.2px;border-left:0.7px solid #9aa0a3;border-right:0.7px solid #f4f6f7;border-top:0.6px solid #a4aaad;border-bottom:0.6px solid #eef1f2;background:#d9e0e3"></span>
<span class="t" style="left:735.5px;top:543.8px;width:24.0px;text-align:center;font-size:7.1px;letter-spacing:-0.1px;color:#222;">Filter</span>
<span class="a" style="left:760.5px;top:540.7px;width:262.5px;height:11.2px;border-left:0.7px solid #9aa0a3;border-right:0.7px solid #f4f6f7;border-top:0.6px solid #a4aaad;border-bottom:0.6px solid #eef1f2;background:#d9e0e3"></span>
<span class="t" style="left:762.0px;top:543.8px;font-size:7.1px;letter-spacing:-0.1px;color:#222;">Minutes from last save: 27</span><span class="a" style="left:489px;top:150.5px;width:160.5px;height:296.5px;background:#333;border:0.6px solid #5a5a5a"></span>
<span class="a" style="left:489px;top:150.5px;width:160.5px;height:13.5px;background:linear-gradient(#dddbd5,#c9c7c1 55%,#aeaca6);border-bottom:0.7px solid #666"></span>
<span class="a" style="left:567px;top:150.5px;width:0.8px;height:13px;background:#9a9892"></span>
<svg style="left:489.3px;top:151px" width="10.5" height="12" viewBox="0 0 10 12"><rect width="10" height="12" fill="#4aa0e0"/><rect x="0.8" y="0.8" width="8.4" height="10.4" fill="none" stroke="#bfe0ff" stroke-width="0.5"/><ellipse cx="5" cy="5" rx="3.2" ry="2.4" fill="#fff"/><path d="M1.5 9.5 H8.5 M1.5 2 H8.5" stroke="#d8ecff" stroke-width="0.8" stroke-dasharray="1.2 0.7"/></svg>
<span class="t" style="left:504.5px;top:151.8px;font-family:'DejaVu Sans Condensed','DejaVu Sans',sans-serif;font-stretch:condensed;font-weight:bold;font-size:6.6px;color:#111;letter-spacing:0">GEM REPORTER</span>
<span class="a" style="left:639.5px;top:152.8px;width:7px;height:7.2px;background:#d0cec8;border:0.5px solid #8a8882"></span>
<span class="t" style="left:641px;top:153px;font-size:7.5px;color:#d83a30;font-weight:bold;letter-spacing:0">×</span>
<span class="a" style="left:491.5px;top:167px;width:57px;height:8px;background:#2c2c2c;border:0.6px solid #4c4c4c"></span>
<span class="t" style="left:493.3px;top:167.9px;font-size:6.9px;color:#e2e2e2;letter-spacing:-0.05px">Total Gem Weight</span>
<span class="a" style="left:550.5px;top:167px;width:18px;height:8px;background:#0a0a0a;border:0.5px solid #444"></span>
<span class="t" style="left:554px;top:168px;font-size:6.6px;color:#22b8b0;letter-spacing:-0.3px">3.41</span>
<span class="a" style="left:571.5px;top:167px;width:54.5px;height:8px;background:#2c2c2c;border:0.6px solid #4c4c4c"></span>
<span class="t" style="left:573.3px;top:167.9px;font-size:6.9px;color:#e2e2e2;letter-spacing:-0.05px">Total Gem Count</span>
<span class="a" style="left:628px;top:167px;width:18px;height:8px;background:#0a0a0a;border:0.5px solid #444"></span>
<span class="t" style="left:634px;top:168px;font-size:6.6px;color:#22b8b0;letter-spacing:-0.3px">33</span>
<span class="a" style="left:509px;top:180.2px;width:120px;height:0.8px;background:#5c5c5c"></span>
<svg style="left:565.5px;top:177.3px" width="7" height="7" viewBox="-3.5 -3.5 7 7"><circle r="3" fill="#d8d8d8" stroke="#666" stroke-width="0.5"/><path d="M-1.5 0.8 L0 -1 L1.5 0.8Z" fill="#444"/></svg>
<span class="a" style="left:511.5px;top:186px;width:28px;height:8px;background:#2c2c2c;border:0.6px solid #4c4c4c"></span>
<span class="t" style="left:513.3px;top:187px;font-size:6.8px;color:#e2e2e2;letter-spacing:-0.05px">Update</span>
<span class="a" style="left:541px;top:186.3px;width:7.2px;height:7.4px;background:linear-gradient(#6cd040,#3a9c18);border:0.5px solid #2a6a10"></span><svg style="left:543.3000000000001px;top:188.0px" width="3" height="4" viewBox="0 0 3 4"><path d="M0 0 L3 2 L0 4Z" fill="#fff"/></svg>
<span class="a" style="left:560px;top:186px;width:58px;height:8px;background:#2c2c2c;border:0.6px solid #4c4c4c"></span>
<span class="t" style="left:561.8px;top:187px;font-size:6.8px;color:#e2e2e2;letter-spacing:-0.05px">Save Report</span>
<span class="a" style="left:618.7px;top:186.3px;width:7.2px;height:7.4px;background:linear-gradient(#6cd040,#3a9c18);border:0.5px solid #2a6a10"></span><svg style="left:621.0000000000001px;top:188.0px" width="3" height="4" viewBox="0 0 3 4"><path d="M0 0 L3 2 L0 4Z" fill="#fff"/></svg>
<span class="a" style="left:490.5px;top:196px;width:155px;height:50.5px;background:#4b4b4b;border:0.5px solid #5c5c5c"></span>
<span class="a" style="left:494.3px;top:199.3px;width:17.5px;height:16.5px;background:#3a3a3a;border:0.8px solid #bdbdbd"></span><svg style="left:496.3px;top:201.8px" width="14" height="12" viewBox="-7 -6 14 12"><ellipse rx="6" ry="4.2" transform="rotate(-25)" fill="#6f80d8"/><ellipse cx="-0.5" cy="-1" rx="4.6" ry="2.4" transform="rotate(-25)" fill="#a8b4f0"/><ellipse cx="0.5" cy="2" rx="3.8" ry="1.6" transform="rotate(-25)" fill="#f2f4ff"/></svg>
<span class="a" style="left:513.5px;top:199.8px;width:62.5px;height:7.8px;background:#383838;border:0.5px solid #5e5e5e"></span><span class="t" style="left:513.5px;top:200.70000000000002px;width:62.5px;text-align:center;font-size:6.8px;color:#e0e0e0;letter-spacing:-0.05px">Round</span>
<span class="a" style="left:577px;top:199.8px;width:54.5px;height:7.8px;background:#383838;border:0.5px solid #5e5e5e"></span><span class="t" style="left:577px;top:200.70000000000002px;width:54.5px;text-align:center;font-size:6.8px;color:#e0e0e0;letter-spacing:-0.05px">Diamond</span>
<span class="a" style="left:513.5px;top:208.3px;width:62.5px;height:7.8px;background:#383838;border:0.5px solid #5e5e5e"></span><span class="t" style="left:513.5px;top:209.20000000000002px;width:62.5px;text-align:center;font-size:6.8px;color:#e0e0e0;letter-spacing:-0.05px">2.10 X 2.10</span>
<span class="a" style="left:577px;top:208.3px;width:19.5px;height:7.8px;background:#383838;border:0.5px solid #5e5e5e"></span><span class="t" style="left:577px;top:209.20000000000002px;width:19.5px;text-align:center;font-size:6.8px;color:#e0e0e0;letter-spacing:-0.05px">18</span>
<span class="a" style="left:597.5px;top:208.3px;width:25.5px;height:7.8px;background:#383838;border:0.5px solid #5e5e5e"></span><span class="t" style="left:597.5px;top:209.20000000000002px;width:25.5px;text-align:center;font-size:6.8px;color:#e0e0e0;letter-spacing:-0.05px">0.63tw</span>
<span class="a" style="left:623.4px;top:208.5px;width:7.4px;height:7.6px;background:linear-gradient(#6cd040,#3a9c18);border:0.5px solid #2a6a10"></span><svg style="left:625.8000000000001px;top:210.3px" width="3" height="4" viewBox="0 0 3 4"><path d="M0 0 L3 2 L0 4Z" fill="#fff"/></svg>
<span class="a" style="left:513.5px;top:216.8px;width:62.5px;height:7.8px;background:#383838;border:0.5px solid #5e5e5e"></span><span class="t" style="left:513.5px;top:217.70000000000002px;width:62.5px;text-align:center;font-size:6.8px;color:#e0e0e0;letter-spacing:-0.05px">1.90 X 1.90</span>
<span class="a" style="left:577px;top:216.8px;width:19.5px;height:7.8px;background:#383838;border:0.5px solid #5e5e5e"></span><span class="t" style="left:577px;top:217.70000000000002px;width:19.5px;text-align:center;font-size:6.8px;color:#e0e0e0;letter-spacing:-0.05px">14</span>
<span class="a" style="left:597.5px;top:216.8px;width:25.5px;height:7.8px;background:#383838;border:0.5px solid #5e5e5e"></span><span class="t" style="left:597.5px;top:217.70000000000002px;width:25.5px;text-align:center;font-size:6.8px;color:#e0e0e0;letter-spacing:-0.05px">0.36tw</span>
<span class="a" style="left:623.4px;top:217.0px;width:7.4px;height:7.6px;background:linear-gradient(#6cd040,#3a9c18);border:0.5px solid #2a6a10"></span><svg style="left:625.8000000000001px;top:218.8px" width="3" height="4" viewBox="0 0 3 4"><path d="M0 0 L3 2 L0 4Z" fill="#fff"/></svg>
<span class="a" style="left:494.3px;top:227.3px;width:17.5px;height:16.5px;background:#3a3a3a;border:0.8px solid #bdbdbd"></span><svg style="left:496.3px;top:229.8px" width="14" height="12" viewBox="-7 -6 14 12"><ellipse rx="6" ry="3.6" transform="rotate(-25)" fill="#6f80d8"/><ellipse cx="-0.5" cy="-1" rx="4.6" ry="2.4" transform="rotate(-25)" fill="#a8b4f0"/><ellipse cx="0.5" cy="2" rx="3.8" ry="1.6" transform="rotate(-25)" fill="#f2f4ff"/></svg>
<span class="a" style="left:513.5px;top:227.8px;width:62.5px;height:7.8px;background:#383838;border:0.5px solid #5e5e5e"></span><span class="t" style="left:513.5px;top:228.70000000000002px;width:62.5px;text-align:center;font-size:6.8px;color:#e0e0e0;letter-spacing:-0.05px">Oval</span>
<span class="a" style="left:577px;top:227.8px;width:54.5px;height:7.8px;background:#383838;border:0.5px solid #5e5e5e"></span><span class="t" style="left:577px;top:228.70000000000002px;width:54.5px;text-align:center;font-size:6.8px;color:#e0e0e0;letter-spacing:-0.05px">Diamond</span>
<span class="a" style="left:513.5px;top:236.3px;width:62.5px;height:7.8px;background:#383838;border:0.5px solid #5e5e5e"></span><span class="t" style="left:513.5px;top:237.20000000000002px;width:62.5px;text-align:center;font-size:6.8px;color:#e0e0e0;letter-spacing:-0.05px">10.00 X 8.00</span>
<span class="a" style="left:577px;top:236.3px;width:19.5px;height:7.8px;background:#383838;border:0.5px solid #5e5e5e"></span><span class="t" style="left:577px;top:237.20000000000002px;width:19.5px;text-align:center;font-size:6.8px;color:#e0e0e0;letter-spacing:-0.05px">1</span>
<span class="a" style="left:597.5px;top:236.3px;width:25.5px;height:7.8px;background:#383838;border:0.5px solid #5e5e5e"></span><span class="t" style="left:597.5px;top:237.20000000000002px;width:25.5px;text-align:center;font-size:6.8px;color:#e0e0e0;letter-spacing:-0.05px">2.42tw</span>
<span class="a" style="left:623.4px;top:236.5px;width:7.4px;height:7.6px;background:linear-gradient(#6cd040,#3a9c18);border:0.5px solid #2a6a10"></span><svg style="left:625.8000000000001px;top:238.3px" width="3" height="4" viewBox="0 0 3 4"><path d="M0 0 L3 2 L0 4Z" fill="#fff"/></svg>
<span class="a" style="left:489px;top:246px;width:160.5px;height:13.5px;background:linear-gradient(#dddbd5,#c9c7c1 55%,#aeaca6);border-bottom:0.7px solid #666;border-top:0.6px solid #777"></span>
<span class="a" style="left:567px;top:246.5px;width:0.8px;height:13px;background:#9a9892"></span>
<svg style="left:489.5px;top:246px" width="13" height="13" viewBox="0 0 13 13"><ellipse cx="6.5" cy="10.3" rx="6" ry="2.3" fill="#2a6ae0"/><path d="M6.5 0.5 L2.5 9.5 H10.5Z" fill="#4a8af0" stroke="#bcd4ff" stroke-width="0.4"/><path d="M6.5 1 V10 M3 5 H10" stroke="#e0ecff" stroke-width="0.6"/></svg>
<span class="t" style="left:505.3px;top:246.8px;font-family:'DejaVu Sans Condensed','DejaVu Sans',sans-serif;font-stretch:condensed;font-weight:bold;font-size:6.6px;color:#111;letter-spacing:0.15px">METAL WEIGHTS</span>
<span class="a" style="left:640px;top:248.5px;width:7px;height:7.2px;background:#d0cec8;border:0.5px solid #8a8882"></span>
<span class="t" style="left:641.5px;top:248.7px;font-size:7.5px;color:#d83a30;font-weight:bold;letter-spacing:0">×</span>
<span class="t" style="left:495.5px;top:265.5px;font-size:5.6px;color:#c8c8c8;letter-spacing:-0.22px">Library: Classic - (Fast)-Metal</span>
<span class="a" style="left:599.5px;top:264.3px;width:20px;height:8px;background:#2a2a2a;border:0.5px solid #777"></span>
<span class="t" style="left:601px;top:265.7px;font-size:5.6px;color:#8a8a8a">0V</span>
<span class="a" style="left:612px;top:265.3px;width:6px;height:6px;background:#28b0b0"></span>
<span class="a" style="left:614.6px;top:266.8px;width:1px;height:3px;background:#033"></span>
<span class="a" style="left:621.5px;top:264.3px;width:23px;height:8px;background:#2a2a2a;border:0.5px solid #777"></span>
<span class="t" style="left:623px;top:265.7px;font-size:5.6px;color:#8a8a8a">User</span>
<span class="a" style="left:637.5px;top:265.3px;width:6px;height:6px;background:#28b0b0"></span>
<span class="a" style="left:640px;top:266.8px;width:1px;height:3px;background:#033"></span>
<span class="a" style="left:493px;top:277px;width:152.5px;height:115px;background:#fff"></span>
<span class="a" style="left:493px;top:277px;width:145px;height:12.5px;background:#fff"></span>
<span class="t" style="left:496px;top:280.4px;font-size:5.9px;color:#222;letter-spacing:0.05px;font-family:'DejaVu Sans',sans-serif">Metal</span>
<span class="t" style="left:564.3px;top:280.4px;font-size:5.9px;color:#222;letter-spacing:0.05px;font-family:'DejaVu Sans',sans-serif">Grams</span>
<span class="t" style="left:595px;top:280.4px;font-size:5.9px;color:#222;letter-spacing:0.05px;font-family:'DejaVu Sans',sans-serif">DWT</span>
<span class="t" style="left:622px;top:280.4px;font-size:5.9px;color:#222;letter-spacing:0.05px;font-family:'DejaVu Sans',sans-serif">SPG</span>
<span class="a" style="left:560.9px;top:277px;width:0.6px;height:12.5px;background:#dcdcdc"></span>
<span class="a" style="left:591.6px;top:277px;width:0.6px;height:12.5px;background:#dcdcdc"></span>
<span class="a" style="left:618.6px;top:277px;width:0.6px;height:12.5px;background:#dcdcdc"></span>
<div class="a" style="left:493px;top:289.5px;width:145px;height:93.5px;overflow:hidden;background:#1f1f1f"><span class="t" style="left:2.8px;top:1.9px;font-size:5.85px;color:#f6f6f6;font-family:'DejaVu Sans',sans-serif;letter-spacing:0.12px">Yellow Gold:9KY</span><span class="t" style="left:71.1px;top:1.9px;font-size:5.85px;color:#f6f6f6;font-family:'DejaVu Sans',sans-serif;letter-spacing:0.12px">3.73</span><span class="t" style="left:101.8px;top:1.9px;font-size:5.85px;color:#f6f6f6;font-family:'DejaVu Sans',sans-serif;letter-spacing:0.12px">2.40</span><span class="t" style="left:128.8px;top:1.9px;font-size:5.85px;color:#f6f6f6;font-family:'DejaVu Sans',sans-serif;letter-spacing:0.12px">11.00</span><span class="t" style="left:2.8px;top:10.4px;font-size:5.85px;color:#f6f6f6;font-family:'DejaVu Sans',sans-serif;letter-spacing:0.12px">Yellow Gold:10KY</span><span class="t" style="left:71.1px;top:10.4px;font-size:5.85px;color:#f6f6f6;font-family:'DejaVu Sans',sans-serif;letter-spacing:0.12px">3.86</span><span class="t" style="left:101.8px;top:10.4px;font-size:5.85px;color:#f6f6f6;font-family:'DejaVu Sans',sans-serif;letter-spacing:0.12px">2.48</span><span class="t" style="left:128.8px;top:10.4px;font-size:5.85px;color:#f6f6f6;font-family:'DejaVu Sans',sans-serif;letter-spacing:0.12px">11.45</span><span class="t" style="left:2.8px;top:18.9px;font-size:5.85px;color:#f6f6f6;font-family:'DejaVu Sans',sans-serif;letter-spacing:0.12px">Yellow Gold:14KY</span><span class="t" style="left:71.1px;top:18.9px;font-size:5.85px;color:#f6f6f6;font-family:'DejaVu Sans',sans-serif;letter-spacing:0.12px">4.34</span><span class="t" style="left:101.8px;top:18.9px;font-size:5.85px;color:#f6f6f6;font-family:'DejaVu Sans',sans-serif;letter-spacing:0.12px">2.79</span><span class="t" style="left:128.8px;top:18.9px;font-size:5.85px;color:#f6f6f6;font-family:'DejaVu Sans',sans-serif;letter-spacing:0.12px">12.88</span><span class="t" style="left:2.8px;top:27.4px;font-size:5.85px;color:#f6f6f6;font-family:'DejaVu Sans',sans-serif;letter-spacing:0.12px">Yellow Gold:18KY</span><span class="t" style="left:71.1px;top:27.4px;font-size:5.85px;color:#f6f6f6;font-family:'DejaVu Sans',sans-serif;letter-spacing:0.12px">5.19</span><span class="t" style="left:101.8px;top:27.4px;font-size:5.85px;color:#f6f6f6;font-family:'DejaVu Sans',sans-serif;letter-spacing:0.12px">3.34</span><span class="t" style="left:128.8px;top:27.4px;font-size:5.85px;color:#f6f6f6;font-family:'DejaVu Sans',sans-serif;letter-spacing:0.12px">15.41</span><span class="t" style="left:2.8px;top:35.9px;font-size:5.85px;color:#f6f6f6;font-family:'DejaVu Sans',sans-serif;letter-spacing:0.12px">Yellow Gold:18KY R...</span><span class="t" style="left:71.1px;top:35.9px;font-size:5.85px;color:#f6f6f6;font-family:'DejaVu Sans',sans-serif;letter-spacing:0.12px">5.19</span><span class="t" style="left:101.8px;top:35.9px;font-size:5.85px;color:#f6f6f6;font-family:'DejaVu Sans',sans-serif;letter-spacing:0.12px">3.34</span><span class="t" style="left:128.8px;top:35.9px;font-size:5.85px;color:#f6f6f6;font-family:'DejaVu Sans',sans-serif;letter-spacing:0.12px">15.41</span><span class="t" style="left:2.8px;top:44.4px;font-size:5.85px;color:#f6f6f6;font-family:'DejaVu Sans',sans-serif;letter-spacing:0.12px">Yellow Gold:22KY</span><span class="t" style="left:71.1px;top:44.4px;font-size:5.85px;color:#f6f6f6;font-family:'DejaVu Sans',sans-serif;letter-spacing:0.12px">6.03</span><span class="t" style="left:101.8px;top:44.4px;font-size:5.85px;color:#f6f6f6;font-family:'DejaVu Sans',sans-serif;letter-spacing:0.12px">3.88</span><span class="t" style="left:128.8px;top:44.4px;font-size:5.85px;color:#f6f6f6;font-family:'DejaVu Sans',sans-serif;letter-spacing:0.12px">17.89</span><span class="t" style="left:2.8px;top:52.9px;font-size:5.85px;color:#f6f6f6;font-family:'DejaVu Sans',sans-serif;letter-spacing:0.12px">White Gold:9K PdW</span><span class="t" style="left:71.1px;top:52.9px;font-size:5.85px;color:#f6f6f6;font-family:'DejaVu Sans',sans-serif;letter-spacing:0.12px">4.24</span><span class="t" style="left:101.8px;top:52.9px;font-size:5.85px;color:#f6f6f6;font-family:'DejaVu Sans',sans-serif;letter-spacing:0.12px">2.73</span><span class="t" style="left:128.8px;top:52.9px;font-size:5.85px;color:#f6f6f6;font-family:'DejaVu Sans',sans-serif;letter-spacing:0.12px">12.59</span><span class="t" style="left:2.8px;top:61.4px;font-size:5.85px;color:#f6f6f6;font-family:'DejaVu Sans',sans-serif;letter-spacing:0.12px">White Gold:10KX1</span><span class="t" style="left:71.1px;top:61.4px;font-size:5.85px;color:#f6f6f6;font-family:'DejaVu Sans',sans-serif;letter-spacing:0.12px">3.77</span><span class="t" style="left:101.8px;top:61.4px;font-size:5.85px;color:#f6f6f6;font-family:'DejaVu Sans',sans-serif;letter-spacing:0.12px">2.42</span><span class="t" style="left:128.8px;top:61.4px;font-size:5.85px;color:#f6f6f6;font-family:'DejaVu Sans',sans-serif;letter-spacing:0.12px">11.18</span><span class="t" style="left:2.8px;top:69.9px;font-size:5.85px;color:#f6f6f6;font-family:'DejaVu Sans',sans-serif;letter-spacing:0.12px">White Gold:10KW</span><span class="t" style="left:71.1px;top:69.9px;font-size:5.85px;color:#f6f6f6;font-family:'DejaVu Sans',sans-serif;letter-spacing:0.12px">3.70</span><span class="t" style="left:101.8px;top:69.9px;font-size:5.85px;color:#f6f6f6;font-family:'DejaVu Sans',sans-serif;letter-spacing:0.12px">2.38</span><span class="t" style="left:128.8px;top:69.9px;font-size:5.85px;color:#f6f6f6;font-family:'DejaVu Sans',sans-serif;letter-spacing:0.12px">10.99</span><span class="t" style="left:2.8px;top:78.4px;font-size:5.85px;color:#f6f6f6;font-family:'DejaVu Sans',sans-serif;letter-spacing:0.12px">White Gold:14KX1</span><span class="t" style="left:71.1px;top:78.4px;font-size:5.85px;color:#f6f6f6;font-family:'DejaVu Sans',sans-serif;letter-spacing:0.12px">4.25</span><span class="t" style="left:101.8px;top:78.4px;font-size:5.85px;color:#f6f6f6;font-family:'DejaVu Sans',sans-serif;letter-spacing:0.12px">2.73</span><span class="t" style="left:128.8px;top:78.4px;font-size:5.85px;color:#f6f6f6;font-family:'DejaVu Sans',sans-serif;letter-spacing:0.12px">12.61</span><span class="t" style="left:2.8px;top:86.9px;font-size:5.85px;color:#f6f6f6;font-family:'DejaVu Sans',sans-serif;letter-spacing:0.12px">White Gold:14K PdW</span><span class="t" style="left:71.1px;top:86.9px;font-size:5.85px;color:#f6f6f6;font-family:'DejaVu Sans',sans-serif;letter-spacing:0.12px">4.84</span><span class="t" style="left:101.8px;top:86.9px;font-size:5.85px;color:#f6f6f6;font-family:'DejaVu Sans',sans-serif;letter-spacing:0.12px">3.11</span><span class="t" style="left:128.8px;top:86.9px;font-size:5.85px;color:#f6f6f6;font-family:'DejaVu Sans',sans-serif;letter-spacing:0.12px">14.37</span><svg style="left:0;top:0" width="145" height="93.5" viewBox="0 0 145 93.5"><path d="M0 0.10 H145" stroke="#a8a8a8" stroke-width="0.65"/><path d="M0 8.60 H145" stroke="#a8a8a8" stroke-width="0.65"/><path d="M0 17.10 H145" stroke="#a8a8a8" stroke-width="0.65"/><path d="M0 25.60 H145" stroke="#a8a8a8" stroke-width="0.65"/><path d="M0 34.10 H145" stroke="#a8a8a8" stroke-width="0.65"/><path d="M0 42.60 H145" stroke="#a8a8a8" stroke-width="0.65"/><path d="M0 51.10 H145" stroke="#a8a8a8" stroke-width="0.65"/><path d="M0 59.60 H145" stroke="#a8a8a8" stroke-width="0.65"/><path d="M0 68.10 H145" stroke="#a8a8a8" stroke-width="0.65"/><path d="M0 76.60 H145" stroke="#a8a8a8" stroke-width="0.65"/><path d="M0 85.10 H145" stroke="#a8a8a8" stroke-width="0.65"/><path d="M0 93.60 H145" stroke="#a8a8a8" stroke-width="0.65"/><path d="M68.1 0 V93.5" stroke="#fff" stroke-width="1.1"/><path d="M98.8 0 V93.5" stroke="#fff" stroke-width="1.1"/><path d="M125.8 0 V93.5" stroke="#fff" stroke-width="1.1"/></svg></div>
<span class="a" style="left:638px;top:277px;width:7.5px;height:106px;background:#f0f0f0"></span>
<span class="a" style="left:638.6px;top:287px;width:6.3px;height:32px;background:#cdcdcd"></span>
<svg style="left:638px;top:277px" width="7.5" height="106" viewBox="0 0 7.5 106"><path d="M1.8 6 L3.75 3.8 L5.7 6 M1.8 100.3 L3.75 102.5 L5.7 100.3" stroke="#444" stroke-width="0.7" fill="none"/></svg>
<span class="a" style="left:493px;top:383px;width:145px;height:9px;background:#f0f0f0"></span>
<span class="a" style="left:502px;top:384px;width:119px;height:7px;background:#cdcdcd"></span>
<svg style="left:493px;top:383px" width="145" height="9" viewBox="0 0 145 9"><path d="M5.5 2.5 L3.5 4.5 L5.5 6.5 M139.5 2.5 L141.5 4.5 L139.5 6.5" stroke="#333" stroke-width="0.8" fill="none"/></svg>
<span class="a" style="left:571px;top:395.5px;width:69.5px;height:9.5px;background:#2a2a2a;border:0.6px solid #8a8a8a"></span>
<span class="t" style="left:573px;top:397.6px;font-size:5.6px;color:#8c8c8c;letter-spacing:-0.05px">Use Object Materials</span>
<span class="a" style="left:632.5px;top:396.5px;width:7px;height:7.5px;background:#555;border:0.5px solid #888"></span>
<svg style="left:634px;top:398.3px" width="4" height="4" viewBox="-2 -2 4 4"><circle r="1.4" fill="none" stroke="#999" stroke-width="0.5"/></svg>
<span class="t" style="left:489.5px;top:411px;width:160px;text-align:center;font-size:6.5px;font-weight:bold;color:#f2d410;letter-spacing:-0.12px">Highlight the item you want to find the weight</span>
<span class="t" style="left:489.5px;top:418px;width:160px;text-align:center;font-size:6.5px;font-weight:bold;color:#f2d410;letter-spacing:-0.12px">for then press calculate.</span>
<span class="a" style="left:543px;top:432.5px;width:53.5px;height:9px;background:#262626;border:0.6px solid #8a8a8a"></span>
<span class="t" style="left:545px;top:434.5px;font-size:5.6px;color:#9a9a9a;letter-spacing:-0.05px">Calculate</span>
<span class="a" style="left:588.3px;top:433.5px;width:7px;height:7px;background:linear-gradient(#6cd040,#3a9c18);border:0.5px solid #2a6a10"></span><svg style="left:590.5px;top:435.0px" width="3" height="4" viewBox="0 0 3 4"><path d="M0 0 L3 2 L0 4Z" fill="#fff"/></svg></div>
<div id="taskbar" class="a">
<svg style="left:8px;top:7.5px" width="9" height="9" viewBox="0 0 9 9"><path d="M0 1.3 L3.9 0.7 V4.2 H0Z M4.5 0.6 L9 0 V4.2 H4.5Z M0 4.8 H3.9 V8.3 L0 7.7Z M4.5 4.8 H9 V9 L4.5 8.4Z" fill="#f4f4f4"/></svg>
<span class="a" style="left:25.5px;top:1px;width:153.3px;height:21px;background:#f2f2f2;border:0.5px solid #d0d0d0"></span>
<svg style="left:31.5px;top:6.5px" width="9" height="9" viewBox="0 0 9 9"><circle cx="5.4" cy="3.5" r="2.7" fill="none" stroke="#222" stroke-width="0.8"/><path d="M3.4 5.5 L0.6 8.4" stroke="#222" stroke-width="0.9"/></svg>
<span class="t" style="left:47px;top:7.7999999999999545px;font-size:8px;color:#3c3c3c;letter-spacing:-0.12px">Type here to search</span>
<svg style="left:138px;top:0" width="42" height="22" viewBox="138 0 42 22"><circle cx="143.3" cy="9.5" r="3" fill="#f08870"/><circle cx="143.3" cy="9.5" r="1.3" fill="#e05840"/><path d="M143.3 12.5 V18 M143.3 15 L141 13.5 M143.3 16 L145.5 14.5" stroke="#5a8a40" stroke-width="0.8" fill="none"/><path d="M150 9.5 C150 4,155 2,158 2 C161 2,166 4,166 9.5 C166 13,164.5 14.5,163.5 15.5 V19 Q158 21.5 152.5 19 V15.5 C151.5 14.5,150 13,150 9.5Z" fill="#f4ecd0" stroke="#c8b888" stroke-width="0.5"/><circle cx="154.3" cy="9.3" r="3.2" fill="#2a78d8"/><circle cx="161.7" cy="9.3" r="3.2" fill="#2a78d8"/><circle cx="154.3" cy="9.3" r="1.4" fill="#f0c020"/><circle cx="161.7" cy="9.3" r="1.4" fill="#f0c020"/><path d="M158 12 L157 14.5 H159Z" fill="#333"/><circle cx="158" cy="4" r="1.1" fill="#e05050"/><path d="M154.5 17 H161.5" stroke="#8a7a50" stroke-width="0.6"/><rect x="168" y="10" width="6" height="10" rx="1" fill="#f8f0d8"/><path d="M171 4.5 C172.8 7,172.3 9.5,171 10 C169.7 9.5,169.2 7,171 4.5Z" fill="#f09020"/><ellipse cx="174.5" cy="19" rx="3" ry="2" fill="#f0a020"/></svg>
<svg style="left:185px;top:6px" width="12" height="10" viewBox="0 0 12 10"><rect x="1.8" y="1.5" width="6" height="7" fill="none" stroke="#f0f0f0" stroke-width="0.9"/><path d="M0.3 2.5 V7.5 M9.8 1 V3.5 M9.8 6.5 V9" stroke="#f0f0f0" stroke-width="0.9"/><rect x="9.2" y="4.3" width="1.3" height="1.3" fill="#f0f0f0"/></svg>
<svg style="left:212.5px;top:4px" width="14" height="14" viewBox="-7 -7 14 14"><circle r="6.3" fill="#1b7fd0"/><path d="M-6.2 1 C-6 -4,-2 -6.3,1 -6.3 C4.5 -6.3,6.3 -3.5,6.3 -1 C6.3 1.5,4 2.3,2.5 2.3 C1 2.3,0.5 1.5,1.2 0.5 C1.8 -0.8,0.5 -2.3,-1.5 -2.3 C-4 -2.3,-5.8 -0.5,-6.2 1Z" fill="#38c8a0"/><path d="M-6.2 1 C-5.8 -1.5,-3.5 -2.8,-1.5 -2.3 C-3.5 -1.5,-4 1,-2.8 3.2 C-1.5 5.5,1.5 6.5,4 5 C1.5 7,-4.5 6.8,-6.2 1Z" fill="#0c58a8"/></svg>
<svg style="left:238.5px;top:5px" width="14" height="12" viewBox="0 0 14 12"><path d="M0.5 1 H5 L6.2 2.4 H13.5 V11 H0.5Z" fill="#f0b828"/><path d="M0.5 3.5 H13.5 V11 H0.5Z" fill="#f8d458"/><rect x="3.8" y="7" width="6.4" height="4" fill="#3a88e0"/><rect x="5.5" y="8.8" width="3" height="2.2" fill="#f8d458"/></svg>
<span class="a" style="left:234.8px;top:21px;width:20.5px;height:1px;background:#7ab4e8"></span>
<svg style="left:264.5px;top:4px" width="14" height="14" viewBox="0 0 14 14"><path d="M4.5 3.5 V2.3 Q4.5 0.8 6 0.8 H8 Q9.5 0.8 9.5 2.3 V3.5" fill="none" stroke="#2a90e0" stroke-width="0.9"/><path d="M0.8 3.3 H13.2 V11.5 Q13.2 13 11.7 13 H2.3 Q0.8 13 0.8 11.5Z" fill="#f4f4f4"/><rect x="4.3" y="5.3" width="2.4" height="2.4" fill="#e84830"/><rect x="7.3" y="5.3" width="2.4" height="2.4" fill="#70b820"/><rect x="4.3" y="8.3" width="2.4" height="2.4" fill="#28a0e8"/><rect x="7.3" y="8.3" width="2.4" height="2.4" fill="#f0b010"/></svg>
<svg style="left:290.5px;top:4.5px" width="14" height="13" viewBox="0 0 14 13"><path d="M4 2.5 L10 0.5 L13.5 3 V11 L9 12.5 L4 11Z" fill="#1a78d0"/><path d="M4 4.5 L13.5 3 V11 L4 11Z" fill="#48a8f0"/><rect x="0.5" y="3.3" width="7.4" height="7.4" rx="0.8" fill="#0c5cb0"/></svg>
<span class="t" style="left:292.5px;top:6.2000000000000455px;font-size:6.5px;font-weight:bold;color:#fff;letter-spacing:0">O</span>
<svg style="left:317.5px;top:4px" width="13" height="14" viewBox="0 0 13 14"><path d="M3 0.8 H10 L11 2 L12.3 3.3 L11.8 8 C11.3 10.5,8.5 12.3,6.5 13.5 C4.5 12.3,1.7 10.5,1.2 8 L0.7 3.3 L2 2Z" fill="#f0481c"/><path d="M4 4 L5.2 6.8 L6.5 4.5 L7.8 6.8 L9 4 M6.5 7.5 V10" stroke="#fff" stroke-width="1" fill="none"/></svg>
<svg style="left:343px;top:4px" width="14" height="14" viewBox="-7 -7 14 14"><circle r="6.3" fill="#2a78e8"/><circle r="4.3" fill="#e4eefc"/><circle r="3" fill="#22304a"/><circle r="1.2" fill="#8ab0f0"/></svg>
<span class="a" style="left:339px;top:21px;width:13.5px;height:1px;background:#7ab4e8"></span>
<span class="a" style="left:364.5px;top:0;width:23px;height:22px;background:#293f4a"></span>
<svg style="left:369.5px;top:4.5px" width="13" height="13" viewBox="0 0 13 13"><rect width="13" height="13" fill="#38b048"/><path d="M1.5 10.5 L5 2.5 L5.8 8.5 L9.5 2 L10 10 L12 6.5" stroke="#e6ffe8" stroke-width="1" fill="none"/></svg>
<span class="a" style="left:365px;top:21px;width:22.5px;height:1px;background:#8ac0f0"></span>
<svg style="left:820px;top:4px" width="14" height="14" viewBox="0 0 14 14"><circle cx="6.5" cy="6" r="4" fill="#f0a020"/><path d="M1 8 H11 M0.5 10 H12 M1.5 12 H10" stroke="#f8c860" stroke-width="1.1"/><circle cx="11" cy="3" r="2.3" fill="#e03030"/></svg>
<span class="t" style="left:838.5px;top:7.5px;font-size:7px;color:#f4f4f4;letter-spacing:-0.1px">29°C&nbsp;&nbsp;Smoke</span>
<svg style="left:894px;top:8px" width="8" height="6" viewBox="0 0 8 6"><path d="M1 4.5 L4 1.5 L7 4.5" stroke="#f0f0f0" stroke-width="0.8" fill="none"/></svg>
<svg style="left:906px;top:6.5px" width="9" height="9" viewBox="0 0 9 9"><rect x="1" y="2.2" width="5" height="4.6" rx="1" fill="none" stroke="#f0f0f0" stroke-width="0.8"/><path d="M6 3.5 L8 2.3 V6.7 L6 5.5 M2 1 H5 M2 8 H5" stroke="#f0f0f0" stroke-width="0.7" fill="none"/></svg>
<svg style="left:919px;top:6.5px" width="9" height="9" viewBox="0 0 9 9"><path d="M1 8 A7 7 0 0 1 8 1 M2.8 8 A5.2 5.2 0 0 1 8 2.8 M4.8 8 A3.2 3.2 0 0 1 8 4.8" stroke="#9aa4aa" stroke-width="0.8" fill="none"/><circle cx="7.3" cy="7.3" r="0.9" fill="#f0f0f0"/></svg>
<svg style="left:931.5px;top:6.5px" width="10" height="9" viewBox="0 0 10 9"><path d="M0.5 3.2 H2.3 L4.6 1 V8 L2.3 5.8 H0.5Z" fill="#f0f0f0"/><path d="M6 2.8 Q7.2 4.5 6 6.2 M7.5 1.5 Q9.6 4.5 7.5 7.5" stroke="#f0f0f0" stroke-width="0.7" fill="none"/></svg>
<span class="t" style="left:941px;top:3.6px;width:20px;text-align:center;font-size:6px;color:#f4f4f4;letter-spacing:-0.1px">ENG</span>
<span class="t" style="left:941px;top:13px;width:20px;text-align:center;font-size:6px;color:#f4f4f4;letter-spacing:-0.1px">IN</span>
<span class="t" style="left:962px;top:3.6px;width:32px;text-align:center;font-size:6.2px;color:#f4f4f4;letter-spacing:-0.15px">9:56 PM</span>
<span class="t" style="left:962px;top:13px;width:32px;text-align:center;font-size:6.2px;color:#f4f4f4;letter-spacing:-0.15px">11/2/2024</span>
<svg style="left:1001.5px;top:5.5px" width="12" height="12" viewBox="0 0 12 12"><path d="M1 1 H9.5 V7.2 H4.5 L2.5 9 V7.2 H1Z" fill="#f0f0f0"/><path d="M2.5 3 H8 M2.5 5 H8" stroke="#20353f" stroke-width="0.6"/><circle cx="8.3" cy="8.3" r="2.9" fill="#20353f" stroke="#f0f0f0" stroke-width="0.6"/></svg>
<span class="t" style="left:1008.6px;top:6.2999999999999545px;font-size:4.6px;color:#f4f4f4;letter-spacing:0">3</span>
</div>
</body>
</html>
